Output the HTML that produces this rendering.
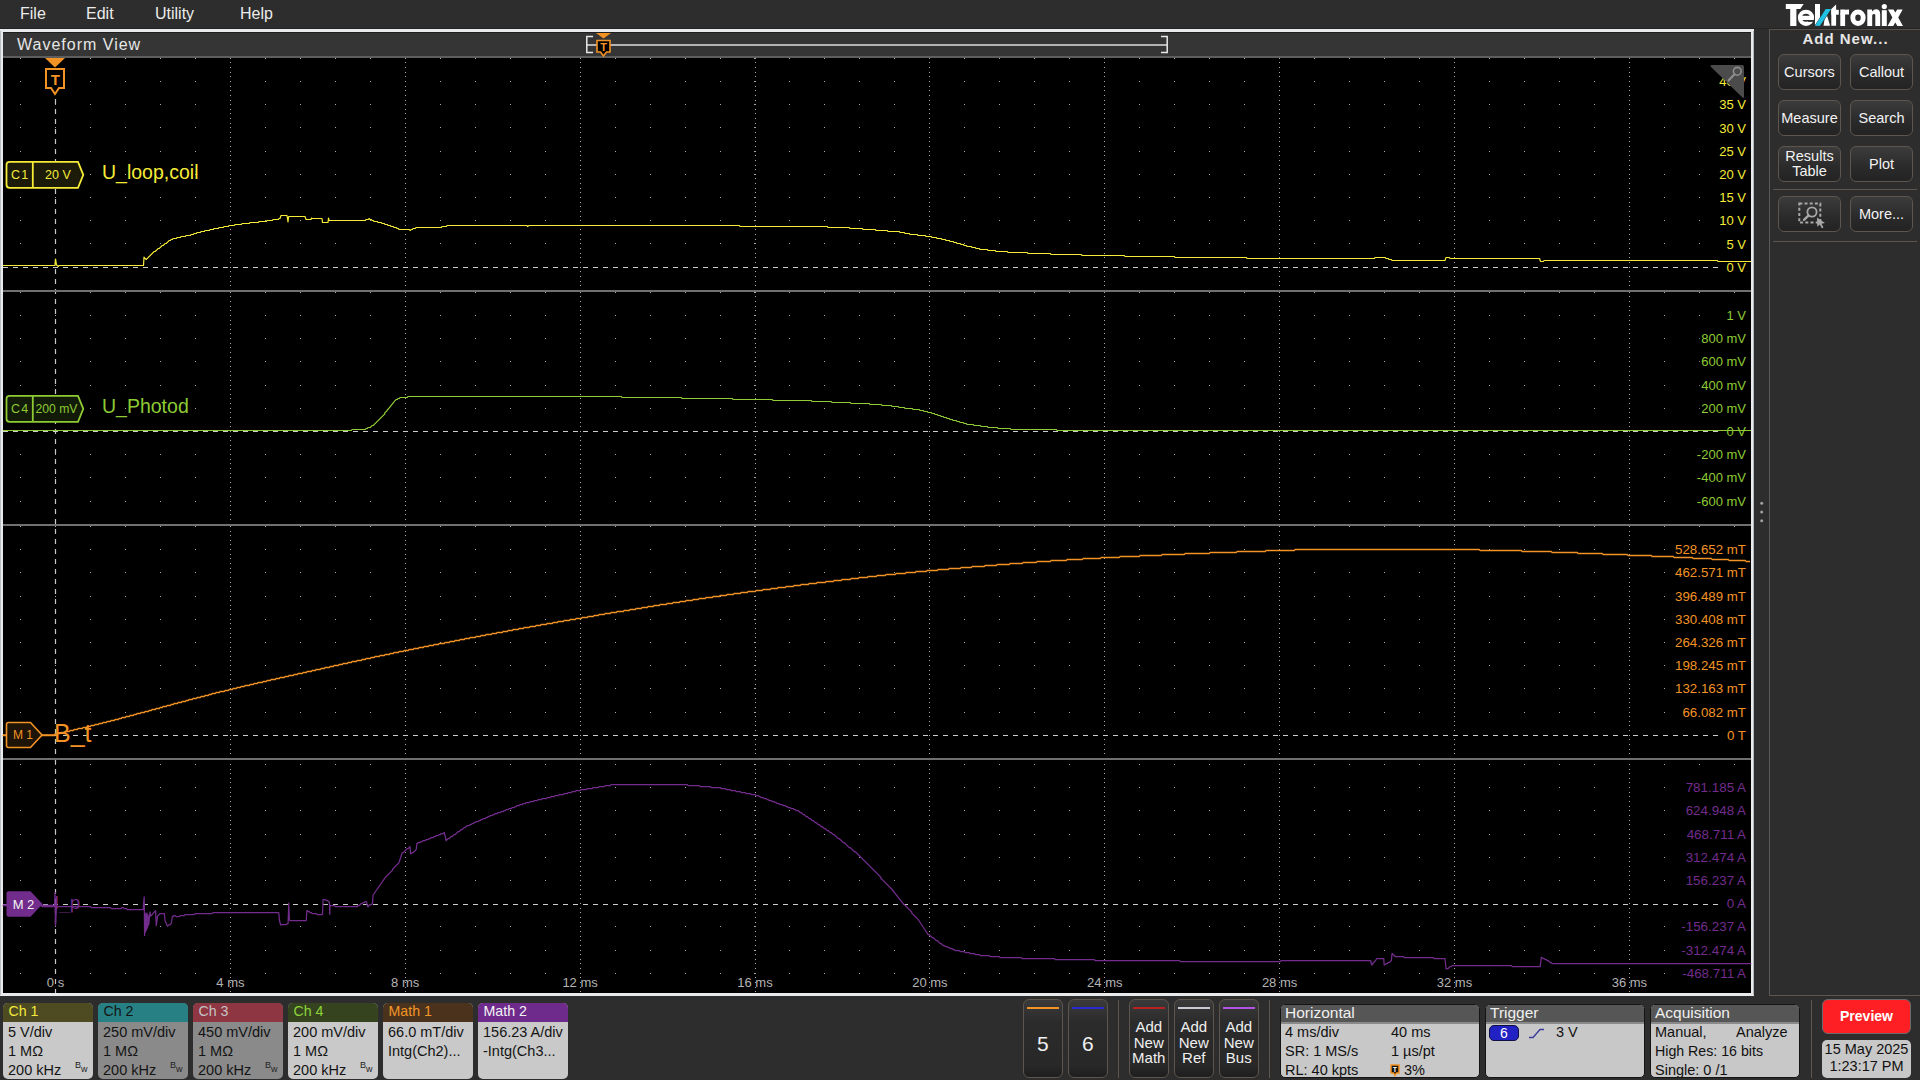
<!DOCTYPE html>
<html><head><meta charset="utf-8"><style>
*{box-sizing:border-box}
html,body{margin:0;padding:0}
body{width:1920px;height:1080px;overflow:hidden;background:#2d2d2d;position:relative;font-family:"Liberation Sans", sans-serif;}
.a{position:absolute}
.menu{position:absolute;font-size:16px;color:#ececec;line-height:16px;top:6px}
.btn{position:absolute;width:63px;height:36px;border:1px solid #5e554c;border-radius:6px;background:linear-gradient(#3c3c3c,#2a2a2a 60%,#232323);color:#f2f2f2;font-size:14.5px;text-align:center;display:flex;align-items:center;justify-content:center;line-height:15px}
.badge{position:absolute;top:1003px;width:90px;height:75.6px;border-radius:5px;overflow:hidden;background:#c9c9c9;font-size:14.5px;color:#141414}
.badge .h{height:19px;padding-left:5.5px;font-size:14.2px;line-height:16.5px}
.badge .l{position:absolute;left:5px;white-space:nowrap}
.bw{position:absolute;left:72px;top:58px;font-size:9px;line-height:9px;color:#222}
.bw span{position:relative;top:4px}
.vbtn{position:absolute;top:999px;width:39.5px;height:79px;border:1px solid #5e554c;border-radius:6px;background:linear-gradient(#3a3a3a,#2b2b2b 30%,#282828 85%,#1e1e1e);color:#f0f0f0;text-align:center}
.vbtn .bar{position:absolute;left:3px;right:3px;top:7px;height:2.2px}
.box{position:absolute;top:1004px;height:74px;border:1px solid #141414;border-radius:5px;overflow:hidden;background:#c8c8c8;color:#111;font-size:14.5px}
.box .h{height:19px;background:#565656;color:#f0f0f0;font-size:15.5px;line-height:15px;padding-left:4px;border-bottom:2px solid #8a8a8a}
.box .l{position:absolute;white-space:nowrap}
</style></head><body>
<div class="menu" style="left:20px">File</div>
<div class="menu" style="left:86px">Edit</div>
<div class="menu" style="left:155px">Utility</div>
<div class="menu" style="left:240px">Help</div>

<!-- waveform frame -->
<div class="a" style="left:0;top:28px;width:1920px;height:1px;background:#232323"></div><div class="a" style="left:0;top:29px;width:1754px;height:967px;background:#e9eaec"></div><div class="a" style="left:0;top:31px;width:1px;height:964px;background:#babdc1"></div><div class="a" style="left:1753px;top:31px;width:1px;height:964px;background:#b4b7bb"></div><div class="a" style="left:3px;top:32px;width:1748px;height:1px;background:#1e1e1e"></div>
<div class="a" style="left:3px;top:33px;width:1748px;height:23px;background:#353535"></div>
<div class="a" style="left:3px;top:56px;width:1748px;height:2px;background:#5e5e5e"></div>
<div class="a" style="left:3px;top:58px;width:1748px;height:935px;background:#000"></div>
<div class="a" style="left:17px;top:36px;font-size:16px;color:#e6e6e6;letter-spacing:1px">Waveform View</div>

<svg class="a" style="left:0;top:0" width="1920" height="1080" viewBox="0 0 1920 1080" font-family="Liberation Sans">
<path fill="#a8a8a8" d="M20 58h1v1h-1zM55 58h1v1h-1zM90 58h1v1h-1zM125 58h1v1h-1zM160 58h1v1h-1zM195 58h1v1h-1zM230 58h1v1h-1zM265 58h1v1h-1zM300 58h1v1h-1zM335 58h1v1h-1zM370 58h1v1h-1zM405 58h1v1h-1zM440 58h1v1h-1zM475 58h1v1h-1zM510 58h1v1h-1zM545 58h1v1h-1zM580 58h1v1h-1zM615 58h1v1h-1zM650 58h1v1h-1zM685 58h1v1h-1zM720 58h1v1h-1zM754 58h1v1h-1zM789 58h1v1h-1zM824 58h1v1h-1zM859 58h1v1h-1zM894 58h1v1h-1zM929 58h1v1h-1zM964 58h1v1h-1zM999 58h1v1h-1zM1034 58h1v1h-1zM1069 58h1v1h-1zM1104 58h1v1h-1zM1139 58h1v1h-1zM1174 58h1v1h-1zM1209 58h1v1h-1zM1244 58h1v1h-1zM1279 58h1v1h-1zM1314 58h1v1h-1zM1349 58h1v1h-1zM1384 58h1v1h-1zM1419 58h1v1h-1zM1454 58h1v1h-1zM1489 58h1v1h-1zM1524 58h1v1h-1zM1559 58h1v1h-1zM1594 58h1v1h-1zM1629 58h1v1h-1zM1664 58h1v1h-1zM1699 58h1v1h-1zM1734 58h1v1h-1zM20 81h1v1h-1zM55 81h1v1h-1zM90 81h1v1h-1zM125 81h1v1h-1zM160 81h1v1h-1zM195 81h1v1h-1zM230 81h1v1h-1zM265 81h1v1h-1zM300 81h1v1h-1zM335 81h1v1h-1zM370 81h1v1h-1zM405 81h1v1h-1zM440 81h1v1h-1zM475 81h1v1h-1zM510 81h1v1h-1zM545 81h1v1h-1zM580 81h1v1h-1zM615 81h1v1h-1zM650 81h1v1h-1zM685 81h1v1h-1zM720 81h1v1h-1zM754 81h1v1h-1zM789 81h1v1h-1zM824 81h1v1h-1zM859 81h1v1h-1zM894 81h1v1h-1zM929 81h1v1h-1zM964 81h1v1h-1zM999 81h1v1h-1zM1034 81h1v1h-1zM1069 81h1v1h-1zM1104 81h1v1h-1zM1139 81h1v1h-1zM1174 81h1v1h-1zM1209 81h1v1h-1zM1244 81h1v1h-1zM1279 81h1v1h-1zM1314 81h1v1h-1zM1349 81h1v1h-1zM1384 81h1v1h-1zM1419 81h1v1h-1zM1454 81h1v1h-1zM1489 81h1v1h-1zM1524 81h1v1h-1zM1559 81h1v1h-1zM1594 81h1v1h-1zM1629 81h1v1h-1zM1664 81h1v1h-1zM1699 81h1v1h-1zM1734 81h1v1h-1zM20 104h1v1h-1zM55 104h1v1h-1zM90 104h1v1h-1zM125 104h1v1h-1zM160 104h1v1h-1zM195 104h1v1h-1zM230 104h1v1h-1zM265 104h1v1h-1zM300 104h1v1h-1zM335 104h1v1h-1zM370 104h1v1h-1zM405 104h1v1h-1zM440 104h1v1h-1zM475 104h1v1h-1zM510 104h1v1h-1zM545 104h1v1h-1zM580 104h1v1h-1zM615 104h1v1h-1zM650 104h1v1h-1zM685 104h1v1h-1zM720 104h1v1h-1zM754 104h1v1h-1zM789 104h1v1h-1zM824 104h1v1h-1zM859 104h1v1h-1zM894 104h1v1h-1zM929 104h1v1h-1zM964 104h1v1h-1zM999 104h1v1h-1zM1034 104h1v1h-1zM1069 104h1v1h-1zM1104 104h1v1h-1zM1139 104h1v1h-1zM1174 104h1v1h-1zM1209 104h1v1h-1zM1244 104h1v1h-1zM1279 104h1v1h-1zM1314 104h1v1h-1zM1349 104h1v1h-1zM1384 104h1v1h-1zM1419 104h1v1h-1zM1454 104h1v1h-1zM1489 104h1v1h-1zM1524 104h1v1h-1zM1559 104h1v1h-1zM1594 104h1v1h-1zM1629 104h1v1h-1zM1664 104h1v1h-1zM1699 104h1v1h-1zM1734 104h1v1h-1zM20 127h1v1h-1zM55 127h1v1h-1zM90 127h1v1h-1zM125 127h1v1h-1zM160 127h1v1h-1zM195 127h1v1h-1zM230 127h1v1h-1zM265 127h1v1h-1zM300 127h1v1h-1zM335 127h1v1h-1zM370 127h1v1h-1zM405 127h1v1h-1zM440 127h1v1h-1zM475 127h1v1h-1zM510 127h1v1h-1zM545 127h1v1h-1zM580 127h1v1h-1zM615 127h1v1h-1zM650 127h1v1h-1zM685 127h1v1h-1zM720 127h1v1h-1zM754 127h1v1h-1zM789 127h1v1h-1zM824 127h1v1h-1zM859 127h1v1h-1zM894 127h1v1h-1zM929 127h1v1h-1zM964 127h1v1h-1zM999 127h1v1h-1zM1034 127h1v1h-1zM1069 127h1v1h-1zM1104 127h1v1h-1zM1139 127h1v1h-1zM1174 127h1v1h-1zM1209 127h1v1h-1zM1244 127h1v1h-1zM1279 127h1v1h-1zM1314 127h1v1h-1zM1349 127h1v1h-1zM1384 127h1v1h-1zM1419 127h1v1h-1zM1454 127h1v1h-1zM1489 127h1v1h-1zM1524 127h1v1h-1zM1559 127h1v1h-1zM1594 127h1v1h-1zM1629 127h1v1h-1zM1664 127h1v1h-1zM1699 127h1v1h-1zM1734 127h1v1h-1zM20 151h1v1h-1zM55 151h1v1h-1zM90 151h1v1h-1zM125 151h1v1h-1zM160 151h1v1h-1zM195 151h1v1h-1zM230 151h1v1h-1zM265 151h1v1h-1zM300 151h1v1h-1zM335 151h1v1h-1zM370 151h1v1h-1zM405 151h1v1h-1zM440 151h1v1h-1zM475 151h1v1h-1zM510 151h1v1h-1zM545 151h1v1h-1zM580 151h1v1h-1zM615 151h1v1h-1zM650 151h1v1h-1zM685 151h1v1h-1zM720 151h1v1h-1zM754 151h1v1h-1zM789 151h1v1h-1zM824 151h1v1h-1zM859 151h1v1h-1zM894 151h1v1h-1zM929 151h1v1h-1zM964 151h1v1h-1zM999 151h1v1h-1zM1034 151h1v1h-1zM1069 151h1v1h-1zM1104 151h1v1h-1zM1139 151h1v1h-1zM1174 151h1v1h-1zM1209 151h1v1h-1zM1244 151h1v1h-1zM1279 151h1v1h-1zM1314 151h1v1h-1zM1349 151h1v1h-1zM1384 151h1v1h-1zM1419 151h1v1h-1zM1454 151h1v1h-1zM1489 151h1v1h-1zM1524 151h1v1h-1zM1559 151h1v1h-1zM1594 151h1v1h-1zM1629 151h1v1h-1zM1664 151h1v1h-1zM1699 151h1v1h-1zM1734 151h1v1h-1zM20 174h1v1h-1zM55 174h1v1h-1zM90 174h1v1h-1zM125 174h1v1h-1zM160 174h1v1h-1zM195 174h1v1h-1zM230 174h1v1h-1zM265 174h1v1h-1zM300 174h1v1h-1zM335 174h1v1h-1zM370 174h1v1h-1zM405 174h1v1h-1zM440 174h1v1h-1zM475 174h1v1h-1zM510 174h1v1h-1zM545 174h1v1h-1zM580 174h1v1h-1zM615 174h1v1h-1zM650 174h1v1h-1zM685 174h1v1h-1zM720 174h1v1h-1zM754 174h1v1h-1zM789 174h1v1h-1zM824 174h1v1h-1zM859 174h1v1h-1zM894 174h1v1h-1zM929 174h1v1h-1zM964 174h1v1h-1zM999 174h1v1h-1zM1034 174h1v1h-1zM1069 174h1v1h-1zM1104 174h1v1h-1zM1139 174h1v1h-1zM1174 174h1v1h-1zM1209 174h1v1h-1zM1244 174h1v1h-1zM1279 174h1v1h-1zM1314 174h1v1h-1zM1349 174h1v1h-1zM1384 174h1v1h-1zM1419 174h1v1h-1zM1454 174h1v1h-1zM1489 174h1v1h-1zM1524 174h1v1h-1zM1559 174h1v1h-1zM1594 174h1v1h-1zM1629 174h1v1h-1zM1664 174h1v1h-1zM1699 174h1v1h-1zM1734 174h1v1h-1zM20 197h1v1h-1zM55 197h1v1h-1zM90 197h1v1h-1zM125 197h1v1h-1zM160 197h1v1h-1zM195 197h1v1h-1zM230 197h1v1h-1zM265 197h1v1h-1zM300 197h1v1h-1zM335 197h1v1h-1zM370 197h1v1h-1zM405 197h1v1h-1zM440 197h1v1h-1zM475 197h1v1h-1zM510 197h1v1h-1zM545 197h1v1h-1zM580 197h1v1h-1zM615 197h1v1h-1zM650 197h1v1h-1zM685 197h1v1h-1zM720 197h1v1h-1zM754 197h1v1h-1zM789 197h1v1h-1zM824 197h1v1h-1zM859 197h1v1h-1zM894 197h1v1h-1zM929 197h1v1h-1zM964 197h1v1h-1zM999 197h1v1h-1zM1034 197h1v1h-1zM1069 197h1v1h-1zM1104 197h1v1h-1zM1139 197h1v1h-1zM1174 197h1v1h-1zM1209 197h1v1h-1zM1244 197h1v1h-1zM1279 197h1v1h-1zM1314 197h1v1h-1zM1349 197h1v1h-1zM1384 197h1v1h-1zM1419 197h1v1h-1zM1454 197h1v1h-1zM1489 197h1v1h-1zM1524 197h1v1h-1zM1559 197h1v1h-1zM1594 197h1v1h-1zM1629 197h1v1h-1zM1664 197h1v1h-1zM1699 197h1v1h-1zM1734 197h1v1h-1zM20 220h1v1h-1zM55 220h1v1h-1zM90 220h1v1h-1zM125 220h1v1h-1zM160 220h1v1h-1zM195 220h1v1h-1zM230 220h1v1h-1zM265 220h1v1h-1zM300 220h1v1h-1zM335 220h1v1h-1zM370 220h1v1h-1zM405 220h1v1h-1zM440 220h1v1h-1zM475 220h1v1h-1zM510 220h1v1h-1zM545 220h1v1h-1zM580 220h1v1h-1zM615 220h1v1h-1zM650 220h1v1h-1zM685 220h1v1h-1zM720 220h1v1h-1zM754 220h1v1h-1zM789 220h1v1h-1zM824 220h1v1h-1zM859 220h1v1h-1zM894 220h1v1h-1zM929 220h1v1h-1zM964 220h1v1h-1zM999 220h1v1h-1zM1034 220h1v1h-1zM1069 220h1v1h-1zM1104 220h1v1h-1zM1139 220h1v1h-1zM1174 220h1v1h-1zM1209 220h1v1h-1zM1244 220h1v1h-1zM1279 220h1v1h-1zM1314 220h1v1h-1zM1349 220h1v1h-1zM1384 220h1v1h-1zM1419 220h1v1h-1zM1454 220h1v1h-1zM1489 220h1v1h-1zM1524 220h1v1h-1zM1559 220h1v1h-1zM1594 220h1v1h-1zM1629 220h1v1h-1zM1664 220h1v1h-1zM1699 220h1v1h-1zM1734 220h1v1h-1zM20 243h1v1h-1zM55 243h1v1h-1zM90 243h1v1h-1zM125 243h1v1h-1zM160 243h1v1h-1zM195 243h1v1h-1zM230 243h1v1h-1zM265 243h1v1h-1zM300 243h1v1h-1zM335 243h1v1h-1zM370 243h1v1h-1zM405 243h1v1h-1zM440 243h1v1h-1zM475 243h1v1h-1zM510 243h1v1h-1zM545 243h1v1h-1zM580 243h1v1h-1zM615 243h1v1h-1zM650 243h1v1h-1zM685 243h1v1h-1zM720 243h1v1h-1zM754 243h1v1h-1zM789 243h1v1h-1zM824 243h1v1h-1zM859 243h1v1h-1zM894 243h1v1h-1zM929 243h1v1h-1zM964 243h1v1h-1zM999 243h1v1h-1zM1034 243h1v1h-1zM1069 243h1v1h-1zM1104 243h1v1h-1zM1139 243h1v1h-1zM1174 243h1v1h-1zM1209 243h1v1h-1zM1244 243h1v1h-1zM1279 243h1v1h-1zM1314 243h1v1h-1zM1349 243h1v1h-1zM1384 243h1v1h-1zM1419 243h1v1h-1zM1454 243h1v1h-1zM1489 243h1v1h-1zM1524 243h1v1h-1zM1559 243h1v1h-1zM1594 243h1v1h-1zM1629 243h1v1h-1zM1664 243h1v1h-1zM1699 243h1v1h-1zM1734 243h1v1h-1zM20 292h1v1h-1zM55 292h1v1h-1zM90 292h1v1h-1zM125 292h1v1h-1zM160 292h1v1h-1zM195 292h1v1h-1zM230 292h1v1h-1zM265 292h1v1h-1zM300 292h1v1h-1zM335 292h1v1h-1zM370 292h1v1h-1zM405 292h1v1h-1zM440 292h1v1h-1zM475 292h1v1h-1zM510 292h1v1h-1zM545 292h1v1h-1zM580 292h1v1h-1zM615 292h1v1h-1zM650 292h1v1h-1zM685 292h1v1h-1zM720 292h1v1h-1zM754 292h1v1h-1zM789 292h1v1h-1zM824 292h1v1h-1zM859 292h1v1h-1zM894 292h1v1h-1zM929 292h1v1h-1zM964 292h1v1h-1zM999 292h1v1h-1zM1034 292h1v1h-1zM1069 292h1v1h-1zM1104 292h1v1h-1zM1139 292h1v1h-1zM1174 292h1v1h-1zM1209 292h1v1h-1zM1244 292h1v1h-1zM1279 292h1v1h-1zM1314 292h1v1h-1zM1349 292h1v1h-1zM1384 292h1v1h-1zM1419 292h1v1h-1zM1454 292h1v1h-1zM1489 292h1v1h-1zM1524 292h1v1h-1zM1559 292h1v1h-1zM1594 292h1v1h-1zM1629 292h1v1h-1zM1664 292h1v1h-1zM1699 292h1v1h-1zM1734 292h1v1h-1zM20 315h1v1h-1zM55 315h1v1h-1zM90 315h1v1h-1zM125 315h1v1h-1zM160 315h1v1h-1zM195 315h1v1h-1zM230 315h1v1h-1zM265 315h1v1h-1zM300 315h1v1h-1zM335 315h1v1h-1zM370 315h1v1h-1zM405 315h1v1h-1zM440 315h1v1h-1zM475 315h1v1h-1zM510 315h1v1h-1zM545 315h1v1h-1zM580 315h1v1h-1zM615 315h1v1h-1zM650 315h1v1h-1zM685 315h1v1h-1zM720 315h1v1h-1zM754 315h1v1h-1zM789 315h1v1h-1zM824 315h1v1h-1zM859 315h1v1h-1zM894 315h1v1h-1zM929 315h1v1h-1zM964 315h1v1h-1zM999 315h1v1h-1zM1034 315h1v1h-1zM1069 315h1v1h-1zM1104 315h1v1h-1zM1139 315h1v1h-1zM1174 315h1v1h-1zM1209 315h1v1h-1zM1244 315h1v1h-1zM1279 315h1v1h-1zM1314 315h1v1h-1zM1349 315h1v1h-1zM1384 315h1v1h-1zM1419 315h1v1h-1zM1454 315h1v1h-1zM1489 315h1v1h-1zM1524 315h1v1h-1zM1559 315h1v1h-1zM1594 315h1v1h-1zM1629 315h1v1h-1zM1664 315h1v1h-1zM1699 315h1v1h-1zM1734 315h1v1h-1zM20 338h1v1h-1zM55 338h1v1h-1zM90 338h1v1h-1zM125 338h1v1h-1zM160 338h1v1h-1zM195 338h1v1h-1zM230 338h1v1h-1zM265 338h1v1h-1zM300 338h1v1h-1zM335 338h1v1h-1zM370 338h1v1h-1zM405 338h1v1h-1zM440 338h1v1h-1zM475 338h1v1h-1zM510 338h1v1h-1zM545 338h1v1h-1zM580 338h1v1h-1zM615 338h1v1h-1zM650 338h1v1h-1zM685 338h1v1h-1zM720 338h1v1h-1zM754 338h1v1h-1zM789 338h1v1h-1zM824 338h1v1h-1zM859 338h1v1h-1zM894 338h1v1h-1zM929 338h1v1h-1zM964 338h1v1h-1zM999 338h1v1h-1zM1034 338h1v1h-1zM1069 338h1v1h-1zM1104 338h1v1h-1zM1139 338h1v1h-1zM1174 338h1v1h-1zM1209 338h1v1h-1zM1244 338h1v1h-1zM1279 338h1v1h-1zM1314 338h1v1h-1zM1349 338h1v1h-1zM1384 338h1v1h-1zM1419 338h1v1h-1zM1454 338h1v1h-1zM1489 338h1v1h-1zM1524 338h1v1h-1zM1559 338h1v1h-1zM1594 338h1v1h-1zM1629 338h1v1h-1zM1664 338h1v1h-1zM1699 338h1v1h-1zM1734 338h1v1h-1zM20 361h1v1h-1zM55 361h1v1h-1zM90 361h1v1h-1zM125 361h1v1h-1zM160 361h1v1h-1zM195 361h1v1h-1zM230 361h1v1h-1zM265 361h1v1h-1zM300 361h1v1h-1zM335 361h1v1h-1zM370 361h1v1h-1zM405 361h1v1h-1zM440 361h1v1h-1zM475 361h1v1h-1zM510 361h1v1h-1zM545 361h1v1h-1zM580 361h1v1h-1zM615 361h1v1h-1zM650 361h1v1h-1zM685 361h1v1h-1zM720 361h1v1h-1zM754 361h1v1h-1zM789 361h1v1h-1zM824 361h1v1h-1zM859 361h1v1h-1zM894 361h1v1h-1zM929 361h1v1h-1zM964 361h1v1h-1zM999 361h1v1h-1zM1034 361h1v1h-1zM1069 361h1v1h-1zM1104 361h1v1h-1zM1139 361h1v1h-1zM1174 361h1v1h-1zM1209 361h1v1h-1zM1244 361h1v1h-1zM1279 361h1v1h-1zM1314 361h1v1h-1zM1349 361h1v1h-1zM1384 361h1v1h-1zM1419 361h1v1h-1zM1454 361h1v1h-1zM1489 361h1v1h-1zM1524 361h1v1h-1zM1559 361h1v1h-1zM1594 361h1v1h-1zM1629 361h1v1h-1zM1664 361h1v1h-1zM1699 361h1v1h-1zM1734 361h1v1h-1zM20 385h1v1h-1zM55 385h1v1h-1zM90 385h1v1h-1zM125 385h1v1h-1zM160 385h1v1h-1zM195 385h1v1h-1zM230 385h1v1h-1zM265 385h1v1h-1zM300 385h1v1h-1zM335 385h1v1h-1zM370 385h1v1h-1zM405 385h1v1h-1zM440 385h1v1h-1zM475 385h1v1h-1zM510 385h1v1h-1zM545 385h1v1h-1zM580 385h1v1h-1zM615 385h1v1h-1zM650 385h1v1h-1zM685 385h1v1h-1zM720 385h1v1h-1zM754 385h1v1h-1zM789 385h1v1h-1zM824 385h1v1h-1zM859 385h1v1h-1zM894 385h1v1h-1zM929 385h1v1h-1zM964 385h1v1h-1zM999 385h1v1h-1zM1034 385h1v1h-1zM1069 385h1v1h-1zM1104 385h1v1h-1zM1139 385h1v1h-1zM1174 385h1v1h-1zM1209 385h1v1h-1zM1244 385h1v1h-1zM1279 385h1v1h-1zM1314 385h1v1h-1zM1349 385h1v1h-1zM1384 385h1v1h-1zM1419 385h1v1h-1zM1454 385h1v1h-1zM1489 385h1v1h-1zM1524 385h1v1h-1zM1559 385h1v1h-1zM1594 385h1v1h-1zM1629 385h1v1h-1zM1664 385h1v1h-1zM1699 385h1v1h-1zM1734 385h1v1h-1zM20 408h1v1h-1zM55 408h1v1h-1zM90 408h1v1h-1zM125 408h1v1h-1zM160 408h1v1h-1zM195 408h1v1h-1zM230 408h1v1h-1zM265 408h1v1h-1zM300 408h1v1h-1zM335 408h1v1h-1zM370 408h1v1h-1zM405 408h1v1h-1zM440 408h1v1h-1zM475 408h1v1h-1zM510 408h1v1h-1zM545 408h1v1h-1zM580 408h1v1h-1zM615 408h1v1h-1zM650 408h1v1h-1zM685 408h1v1h-1zM720 408h1v1h-1zM754 408h1v1h-1zM789 408h1v1h-1zM824 408h1v1h-1zM859 408h1v1h-1zM894 408h1v1h-1zM929 408h1v1h-1zM964 408h1v1h-1zM999 408h1v1h-1zM1034 408h1v1h-1zM1069 408h1v1h-1zM1104 408h1v1h-1zM1139 408h1v1h-1zM1174 408h1v1h-1zM1209 408h1v1h-1zM1244 408h1v1h-1zM1279 408h1v1h-1zM1314 408h1v1h-1zM1349 408h1v1h-1zM1384 408h1v1h-1zM1419 408h1v1h-1zM1454 408h1v1h-1zM1489 408h1v1h-1zM1524 408h1v1h-1zM1559 408h1v1h-1zM1594 408h1v1h-1zM1629 408h1v1h-1zM1664 408h1v1h-1zM1699 408h1v1h-1zM1734 408h1v1h-1zM20 454h1v1h-1zM55 454h1v1h-1zM90 454h1v1h-1zM125 454h1v1h-1zM160 454h1v1h-1zM195 454h1v1h-1zM230 454h1v1h-1zM265 454h1v1h-1zM300 454h1v1h-1zM335 454h1v1h-1zM370 454h1v1h-1zM405 454h1v1h-1zM440 454h1v1h-1zM475 454h1v1h-1zM510 454h1v1h-1zM545 454h1v1h-1zM580 454h1v1h-1zM615 454h1v1h-1zM650 454h1v1h-1zM685 454h1v1h-1zM720 454h1v1h-1zM754 454h1v1h-1zM789 454h1v1h-1zM824 454h1v1h-1zM859 454h1v1h-1zM894 454h1v1h-1zM929 454h1v1h-1zM964 454h1v1h-1zM999 454h1v1h-1zM1034 454h1v1h-1zM1069 454h1v1h-1zM1104 454h1v1h-1zM1139 454h1v1h-1zM1174 454h1v1h-1zM1209 454h1v1h-1zM1244 454h1v1h-1zM1279 454h1v1h-1zM1314 454h1v1h-1zM1349 454h1v1h-1zM1384 454h1v1h-1zM1419 454h1v1h-1zM1454 454h1v1h-1zM1489 454h1v1h-1zM1524 454h1v1h-1zM1559 454h1v1h-1zM1594 454h1v1h-1zM1629 454h1v1h-1zM1664 454h1v1h-1zM1699 454h1v1h-1zM1734 454h1v1h-1zM20 477h1v1h-1zM55 477h1v1h-1zM90 477h1v1h-1zM125 477h1v1h-1zM160 477h1v1h-1zM195 477h1v1h-1zM230 477h1v1h-1zM265 477h1v1h-1zM300 477h1v1h-1zM335 477h1v1h-1zM370 477h1v1h-1zM405 477h1v1h-1zM440 477h1v1h-1zM475 477h1v1h-1zM510 477h1v1h-1zM545 477h1v1h-1zM580 477h1v1h-1zM615 477h1v1h-1zM650 477h1v1h-1zM685 477h1v1h-1zM720 477h1v1h-1zM754 477h1v1h-1zM789 477h1v1h-1zM824 477h1v1h-1zM859 477h1v1h-1zM894 477h1v1h-1zM929 477h1v1h-1zM964 477h1v1h-1zM999 477h1v1h-1zM1034 477h1v1h-1zM1069 477h1v1h-1zM1104 477h1v1h-1zM1139 477h1v1h-1zM1174 477h1v1h-1zM1209 477h1v1h-1zM1244 477h1v1h-1zM1279 477h1v1h-1zM1314 477h1v1h-1zM1349 477h1v1h-1zM1384 477h1v1h-1zM1419 477h1v1h-1zM1454 477h1v1h-1zM1489 477h1v1h-1zM1524 477h1v1h-1zM1559 477h1v1h-1zM1594 477h1v1h-1zM1629 477h1v1h-1zM1664 477h1v1h-1zM1699 477h1v1h-1zM1734 477h1v1h-1zM20 501h1v1h-1zM55 501h1v1h-1zM90 501h1v1h-1zM125 501h1v1h-1zM160 501h1v1h-1zM195 501h1v1h-1zM230 501h1v1h-1zM265 501h1v1h-1zM300 501h1v1h-1zM335 501h1v1h-1zM370 501h1v1h-1zM405 501h1v1h-1zM440 501h1v1h-1zM475 501h1v1h-1zM510 501h1v1h-1zM545 501h1v1h-1zM580 501h1v1h-1zM615 501h1v1h-1zM650 501h1v1h-1zM685 501h1v1h-1zM720 501h1v1h-1zM754 501h1v1h-1zM789 501h1v1h-1zM824 501h1v1h-1zM859 501h1v1h-1zM894 501h1v1h-1zM929 501h1v1h-1zM964 501h1v1h-1zM999 501h1v1h-1zM1034 501h1v1h-1zM1069 501h1v1h-1zM1104 501h1v1h-1zM1139 501h1v1h-1zM1174 501h1v1h-1zM1209 501h1v1h-1zM1244 501h1v1h-1zM1279 501h1v1h-1zM1314 501h1v1h-1zM1349 501h1v1h-1zM1384 501h1v1h-1zM1419 501h1v1h-1zM1454 501h1v1h-1zM1489 501h1v1h-1zM1524 501h1v1h-1zM1559 501h1v1h-1zM1594 501h1v1h-1zM1629 501h1v1h-1zM1664 501h1v1h-1zM1699 501h1v1h-1zM1734 501h1v1h-1zM20 526h1v1h-1zM55 526h1v1h-1zM90 526h1v1h-1zM125 526h1v1h-1zM160 526h1v1h-1zM195 526h1v1h-1zM230 526h1v1h-1zM265 526h1v1h-1zM300 526h1v1h-1zM335 526h1v1h-1zM370 526h1v1h-1zM405 526h1v1h-1zM440 526h1v1h-1zM475 526h1v1h-1zM510 526h1v1h-1zM545 526h1v1h-1zM580 526h1v1h-1zM615 526h1v1h-1zM650 526h1v1h-1zM685 526h1v1h-1zM720 526h1v1h-1zM754 526h1v1h-1zM789 526h1v1h-1zM824 526h1v1h-1zM859 526h1v1h-1zM894 526h1v1h-1zM929 526h1v1h-1zM964 526h1v1h-1zM999 526h1v1h-1zM1034 526h1v1h-1zM1069 526h1v1h-1zM1104 526h1v1h-1zM1139 526h1v1h-1zM1174 526h1v1h-1zM1209 526h1v1h-1zM1244 526h1v1h-1zM1279 526h1v1h-1zM1314 526h1v1h-1zM1349 526h1v1h-1zM1384 526h1v1h-1zM1419 526h1v1h-1zM1454 526h1v1h-1zM1489 526h1v1h-1zM1524 526h1v1h-1zM1559 526h1v1h-1zM1594 526h1v1h-1zM1629 526h1v1h-1zM1664 526h1v1h-1zM1699 526h1v1h-1zM1734 526h1v1h-1zM20 549h1v1h-1zM55 549h1v1h-1zM90 549h1v1h-1zM125 549h1v1h-1zM160 549h1v1h-1zM195 549h1v1h-1zM230 549h1v1h-1zM265 549h1v1h-1zM300 549h1v1h-1zM335 549h1v1h-1zM370 549h1v1h-1zM405 549h1v1h-1zM440 549h1v1h-1zM475 549h1v1h-1zM510 549h1v1h-1zM545 549h1v1h-1zM580 549h1v1h-1zM615 549h1v1h-1zM650 549h1v1h-1zM685 549h1v1h-1zM720 549h1v1h-1zM754 549h1v1h-1zM789 549h1v1h-1zM824 549h1v1h-1zM859 549h1v1h-1zM894 549h1v1h-1zM929 549h1v1h-1zM964 549h1v1h-1zM999 549h1v1h-1zM1034 549h1v1h-1zM1069 549h1v1h-1zM1104 549h1v1h-1zM1139 549h1v1h-1zM1174 549h1v1h-1zM1209 549h1v1h-1zM1244 549h1v1h-1zM1279 549h1v1h-1zM1314 549h1v1h-1zM1349 549h1v1h-1zM1384 549h1v1h-1zM1419 549h1v1h-1zM1454 549h1v1h-1zM1489 549h1v1h-1zM1524 549h1v1h-1zM1559 549h1v1h-1zM1594 549h1v1h-1zM1629 549h1v1h-1zM1664 549h1v1h-1zM1699 549h1v1h-1zM1734 549h1v1h-1zM20 572h1v1h-1zM55 572h1v1h-1zM90 572h1v1h-1zM125 572h1v1h-1zM160 572h1v1h-1zM195 572h1v1h-1zM230 572h1v1h-1zM265 572h1v1h-1zM300 572h1v1h-1zM335 572h1v1h-1zM370 572h1v1h-1zM405 572h1v1h-1zM440 572h1v1h-1zM475 572h1v1h-1zM510 572h1v1h-1zM545 572h1v1h-1zM580 572h1v1h-1zM615 572h1v1h-1zM650 572h1v1h-1zM685 572h1v1h-1zM720 572h1v1h-1zM754 572h1v1h-1zM789 572h1v1h-1zM824 572h1v1h-1zM859 572h1v1h-1zM894 572h1v1h-1zM929 572h1v1h-1zM964 572h1v1h-1zM999 572h1v1h-1zM1034 572h1v1h-1zM1069 572h1v1h-1zM1104 572h1v1h-1zM1139 572h1v1h-1zM1174 572h1v1h-1zM1209 572h1v1h-1zM1244 572h1v1h-1zM1279 572h1v1h-1zM1314 572h1v1h-1zM1349 572h1v1h-1zM1384 572h1v1h-1zM1419 572h1v1h-1zM1454 572h1v1h-1zM1489 572h1v1h-1zM1524 572h1v1h-1zM1559 572h1v1h-1zM1594 572h1v1h-1zM1629 572h1v1h-1zM1664 572h1v1h-1zM1699 572h1v1h-1zM1734 572h1v1h-1zM20 596h1v1h-1zM55 596h1v1h-1zM90 596h1v1h-1zM125 596h1v1h-1zM160 596h1v1h-1zM195 596h1v1h-1zM230 596h1v1h-1zM265 596h1v1h-1zM300 596h1v1h-1zM335 596h1v1h-1zM370 596h1v1h-1zM405 596h1v1h-1zM440 596h1v1h-1zM475 596h1v1h-1zM510 596h1v1h-1zM545 596h1v1h-1zM580 596h1v1h-1zM615 596h1v1h-1zM650 596h1v1h-1zM685 596h1v1h-1zM720 596h1v1h-1zM754 596h1v1h-1zM789 596h1v1h-1zM824 596h1v1h-1zM859 596h1v1h-1zM894 596h1v1h-1zM929 596h1v1h-1zM964 596h1v1h-1zM999 596h1v1h-1zM1034 596h1v1h-1zM1069 596h1v1h-1zM1104 596h1v1h-1zM1139 596h1v1h-1zM1174 596h1v1h-1zM1209 596h1v1h-1zM1244 596h1v1h-1zM1279 596h1v1h-1zM1314 596h1v1h-1zM1349 596h1v1h-1zM1384 596h1v1h-1zM1419 596h1v1h-1zM1454 596h1v1h-1zM1489 596h1v1h-1zM1524 596h1v1h-1zM1559 596h1v1h-1zM1594 596h1v1h-1zM1629 596h1v1h-1zM1664 596h1v1h-1zM1699 596h1v1h-1zM1734 596h1v1h-1zM20 619h1v1h-1zM55 619h1v1h-1zM90 619h1v1h-1zM125 619h1v1h-1zM160 619h1v1h-1zM195 619h1v1h-1zM230 619h1v1h-1zM265 619h1v1h-1zM300 619h1v1h-1zM335 619h1v1h-1zM370 619h1v1h-1zM405 619h1v1h-1zM440 619h1v1h-1zM475 619h1v1h-1zM510 619h1v1h-1zM545 619h1v1h-1zM580 619h1v1h-1zM615 619h1v1h-1zM650 619h1v1h-1zM685 619h1v1h-1zM720 619h1v1h-1zM754 619h1v1h-1zM789 619h1v1h-1zM824 619h1v1h-1zM859 619h1v1h-1zM894 619h1v1h-1zM929 619h1v1h-1zM964 619h1v1h-1zM999 619h1v1h-1zM1034 619h1v1h-1zM1069 619h1v1h-1zM1104 619h1v1h-1zM1139 619h1v1h-1zM1174 619h1v1h-1zM1209 619h1v1h-1zM1244 619h1v1h-1zM1279 619h1v1h-1zM1314 619h1v1h-1zM1349 619h1v1h-1zM1384 619h1v1h-1zM1419 619h1v1h-1zM1454 619h1v1h-1zM1489 619h1v1h-1zM1524 619h1v1h-1zM1559 619h1v1h-1zM1594 619h1v1h-1zM1629 619h1v1h-1zM1664 619h1v1h-1zM1699 619h1v1h-1zM1734 619h1v1h-1zM20 642h1v1h-1zM55 642h1v1h-1zM90 642h1v1h-1zM125 642h1v1h-1zM160 642h1v1h-1zM195 642h1v1h-1zM230 642h1v1h-1zM265 642h1v1h-1zM300 642h1v1h-1zM335 642h1v1h-1zM370 642h1v1h-1zM405 642h1v1h-1zM440 642h1v1h-1zM475 642h1v1h-1zM510 642h1v1h-1zM545 642h1v1h-1zM580 642h1v1h-1zM615 642h1v1h-1zM650 642h1v1h-1zM685 642h1v1h-1zM720 642h1v1h-1zM754 642h1v1h-1zM789 642h1v1h-1zM824 642h1v1h-1zM859 642h1v1h-1zM894 642h1v1h-1zM929 642h1v1h-1zM964 642h1v1h-1zM999 642h1v1h-1zM1034 642h1v1h-1zM1069 642h1v1h-1zM1104 642h1v1h-1zM1139 642h1v1h-1zM1174 642h1v1h-1zM1209 642h1v1h-1zM1244 642h1v1h-1zM1279 642h1v1h-1zM1314 642h1v1h-1zM1349 642h1v1h-1zM1384 642h1v1h-1zM1419 642h1v1h-1zM1454 642h1v1h-1zM1489 642h1v1h-1zM1524 642h1v1h-1zM1559 642h1v1h-1zM1594 642h1v1h-1zM1629 642h1v1h-1zM1664 642h1v1h-1zM1699 642h1v1h-1zM1734 642h1v1h-1zM20 665h1v1h-1zM55 665h1v1h-1zM90 665h1v1h-1zM125 665h1v1h-1zM160 665h1v1h-1zM195 665h1v1h-1zM230 665h1v1h-1zM265 665h1v1h-1zM300 665h1v1h-1zM335 665h1v1h-1zM370 665h1v1h-1zM405 665h1v1h-1zM440 665h1v1h-1zM475 665h1v1h-1zM510 665h1v1h-1zM545 665h1v1h-1zM580 665h1v1h-1zM615 665h1v1h-1zM650 665h1v1h-1zM685 665h1v1h-1zM720 665h1v1h-1zM754 665h1v1h-1zM789 665h1v1h-1zM824 665h1v1h-1zM859 665h1v1h-1zM894 665h1v1h-1zM929 665h1v1h-1zM964 665h1v1h-1zM999 665h1v1h-1zM1034 665h1v1h-1zM1069 665h1v1h-1zM1104 665h1v1h-1zM1139 665h1v1h-1zM1174 665h1v1h-1zM1209 665h1v1h-1zM1244 665h1v1h-1zM1279 665h1v1h-1zM1314 665h1v1h-1zM1349 665h1v1h-1zM1384 665h1v1h-1zM1419 665h1v1h-1zM1454 665h1v1h-1zM1489 665h1v1h-1zM1524 665h1v1h-1zM1559 665h1v1h-1zM1594 665h1v1h-1zM1629 665h1v1h-1zM1664 665h1v1h-1zM1699 665h1v1h-1zM1734 665h1v1h-1zM20 688h1v1h-1zM55 688h1v1h-1zM90 688h1v1h-1zM125 688h1v1h-1zM160 688h1v1h-1zM195 688h1v1h-1zM230 688h1v1h-1zM265 688h1v1h-1zM300 688h1v1h-1zM335 688h1v1h-1zM370 688h1v1h-1zM405 688h1v1h-1zM440 688h1v1h-1zM475 688h1v1h-1zM510 688h1v1h-1zM545 688h1v1h-1zM580 688h1v1h-1zM615 688h1v1h-1zM650 688h1v1h-1zM685 688h1v1h-1zM720 688h1v1h-1zM754 688h1v1h-1zM789 688h1v1h-1zM824 688h1v1h-1zM859 688h1v1h-1zM894 688h1v1h-1zM929 688h1v1h-1zM964 688h1v1h-1zM999 688h1v1h-1zM1034 688h1v1h-1zM1069 688h1v1h-1zM1104 688h1v1h-1zM1139 688h1v1h-1zM1174 688h1v1h-1zM1209 688h1v1h-1zM1244 688h1v1h-1zM1279 688h1v1h-1zM1314 688h1v1h-1zM1349 688h1v1h-1zM1384 688h1v1h-1zM1419 688h1v1h-1zM1454 688h1v1h-1zM1489 688h1v1h-1zM1524 688h1v1h-1zM1559 688h1v1h-1zM1594 688h1v1h-1zM1629 688h1v1h-1zM1664 688h1v1h-1zM1699 688h1v1h-1zM1734 688h1v1h-1zM20 712h1v1h-1zM55 712h1v1h-1zM90 712h1v1h-1zM125 712h1v1h-1zM160 712h1v1h-1zM195 712h1v1h-1zM230 712h1v1h-1zM265 712h1v1h-1zM300 712h1v1h-1zM335 712h1v1h-1zM370 712h1v1h-1zM405 712h1v1h-1zM440 712h1v1h-1zM475 712h1v1h-1zM510 712h1v1h-1zM545 712h1v1h-1zM580 712h1v1h-1zM615 712h1v1h-1zM650 712h1v1h-1zM685 712h1v1h-1zM720 712h1v1h-1zM754 712h1v1h-1zM789 712h1v1h-1zM824 712h1v1h-1zM859 712h1v1h-1zM894 712h1v1h-1zM929 712h1v1h-1zM964 712h1v1h-1zM999 712h1v1h-1zM1034 712h1v1h-1zM1069 712h1v1h-1zM1104 712h1v1h-1zM1139 712h1v1h-1zM1174 712h1v1h-1zM1209 712h1v1h-1zM1244 712h1v1h-1zM1279 712h1v1h-1zM1314 712h1v1h-1zM1349 712h1v1h-1zM1384 712h1v1h-1zM1419 712h1v1h-1zM1454 712h1v1h-1zM1489 712h1v1h-1zM1524 712h1v1h-1zM1559 712h1v1h-1zM1594 712h1v1h-1zM1629 712h1v1h-1zM1664 712h1v1h-1zM1699 712h1v1h-1zM1734 712h1v1h-1zM20 764h1v1h-1zM55 764h1v1h-1zM90 764h1v1h-1zM125 764h1v1h-1zM160 764h1v1h-1zM195 764h1v1h-1zM230 764h1v1h-1zM265 764h1v1h-1zM300 764h1v1h-1zM335 764h1v1h-1zM370 764h1v1h-1zM405 764h1v1h-1zM440 764h1v1h-1zM475 764h1v1h-1zM510 764h1v1h-1zM545 764h1v1h-1zM580 764h1v1h-1zM615 764h1v1h-1zM650 764h1v1h-1zM685 764h1v1h-1zM720 764h1v1h-1zM754 764h1v1h-1zM789 764h1v1h-1zM824 764h1v1h-1zM859 764h1v1h-1zM894 764h1v1h-1zM929 764h1v1h-1zM964 764h1v1h-1zM999 764h1v1h-1zM1034 764h1v1h-1zM1069 764h1v1h-1zM1104 764h1v1h-1zM1139 764h1v1h-1zM1174 764h1v1h-1zM1209 764h1v1h-1zM1244 764h1v1h-1zM1279 764h1v1h-1zM1314 764h1v1h-1zM1349 764h1v1h-1zM1384 764h1v1h-1zM1419 764h1v1h-1zM1454 764h1v1h-1zM1489 764h1v1h-1zM1524 764h1v1h-1zM1559 764h1v1h-1zM1594 764h1v1h-1zM1629 764h1v1h-1zM1664 764h1v1h-1zM1699 764h1v1h-1zM1734 764h1v1h-1zM20 787h1v1h-1zM55 787h1v1h-1zM90 787h1v1h-1zM125 787h1v1h-1zM160 787h1v1h-1zM195 787h1v1h-1zM230 787h1v1h-1zM265 787h1v1h-1zM300 787h1v1h-1zM335 787h1v1h-1zM370 787h1v1h-1zM405 787h1v1h-1zM440 787h1v1h-1zM475 787h1v1h-1zM510 787h1v1h-1zM545 787h1v1h-1zM580 787h1v1h-1zM615 787h1v1h-1zM650 787h1v1h-1zM685 787h1v1h-1zM720 787h1v1h-1zM754 787h1v1h-1zM789 787h1v1h-1zM824 787h1v1h-1zM859 787h1v1h-1zM894 787h1v1h-1zM929 787h1v1h-1zM964 787h1v1h-1zM999 787h1v1h-1zM1034 787h1v1h-1zM1069 787h1v1h-1zM1104 787h1v1h-1zM1139 787h1v1h-1zM1174 787h1v1h-1zM1209 787h1v1h-1zM1244 787h1v1h-1zM1279 787h1v1h-1zM1314 787h1v1h-1zM1349 787h1v1h-1zM1384 787h1v1h-1zM1419 787h1v1h-1zM1454 787h1v1h-1zM1489 787h1v1h-1zM1524 787h1v1h-1zM1559 787h1v1h-1zM1594 787h1v1h-1zM1629 787h1v1h-1zM1664 787h1v1h-1zM1699 787h1v1h-1zM1734 787h1v1h-1zM20 810h1v1h-1zM55 810h1v1h-1zM90 810h1v1h-1zM125 810h1v1h-1zM160 810h1v1h-1zM195 810h1v1h-1zM230 810h1v1h-1zM265 810h1v1h-1zM300 810h1v1h-1zM335 810h1v1h-1zM370 810h1v1h-1zM405 810h1v1h-1zM440 810h1v1h-1zM475 810h1v1h-1zM510 810h1v1h-1zM545 810h1v1h-1zM580 810h1v1h-1zM615 810h1v1h-1zM650 810h1v1h-1zM685 810h1v1h-1zM720 810h1v1h-1zM754 810h1v1h-1zM789 810h1v1h-1zM824 810h1v1h-1zM859 810h1v1h-1zM894 810h1v1h-1zM929 810h1v1h-1zM964 810h1v1h-1zM999 810h1v1h-1zM1034 810h1v1h-1zM1069 810h1v1h-1zM1104 810h1v1h-1zM1139 810h1v1h-1zM1174 810h1v1h-1zM1209 810h1v1h-1zM1244 810h1v1h-1zM1279 810h1v1h-1zM1314 810h1v1h-1zM1349 810h1v1h-1zM1384 810h1v1h-1zM1419 810h1v1h-1zM1454 810h1v1h-1zM1489 810h1v1h-1zM1524 810h1v1h-1zM1559 810h1v1h-1zM1594 810h1v1h-1zM1629 810h1v1h-1zM1664 810h1v1h-1zM1699 810h1v1h-1zM1734 810h1v1h-1zM20 834h1v1h-1zM55 834h1v1h-1zM90 834h1v1h-1zM125 834h1v1h-1zM160 834h1v1h-1zM195 834h1v1h-1zM230 834h1v1h-1zM265 834h1v1h-1zM300 834h1v1h-1zM335 834h1v1h-1zM370 834h1v1h-1zM405 834h1v1h-1zM440 834h1v1h-1zM475 834h1v1h-1zM510 834h1v1h-1zM545 834h1v1h-1zM580 834h1v1h-1zM615 834h1v1h-1zM650 834h1v1h-1zM685 834h1v1h-1zM720 834h1v1h-1zM754 834h1v1h-1zM789 834h1v1h-1zM824 834h1v1h-1zM859 834h1v1h-1zM894 834h1v1h-1zM929 834h1v1h-1zM964 834h1v1h-1zM999 834h1v1h-1zM1034 834h1v1h-1zM1069 834h1v1h-1zM1104 834h1v1h-1zM1139 834h1v1h-1zM1174 834h1v1h-1zM1209 834h1v1h-1zM1244 834h1v1h-1zM1279 834h1v1h-1zM1314 834h1v1h-1zM1349 834h1v1h-1zM1384 834h1v1h-1zM1419 834h1v1h-1zM1454 834h1v1h-1zM1489 834h1v1h-1zM1524 834h1v1h-1zM1559 834h1v1h-1zM1594 834h1v1h-1zM1629 834h1v1h-1zM1664 834h1v1h-1zM1699 834h1v1h-1zM1734 834h1v1h-1zM20 857h1v1h-1zM55 857h1v1h-1zM90 857h1v1h-1zM125 857h1v1h-1zM160 857h1v1h-1zM195 857h1v1h-1zM230 857h1v1h-1zM265 857h1v1h-1zM300 857h1v1h-1zM335 857h1v1h-1zM370 857h1v1h-1zM405 857h1v1h-1zM440 857h1v1h-1zM475 857h1v1h-1zM510 857h1v1h-1zM545 857h1v1h-1zM580 857h1v1h-1zM615 857h1v1h-1zM650 857h1v1h-1zM685 857h1v1h-1zM720 857h1v1h-1zM754 857h1v1h-1zM789 857h1v1h-1zM824 857h1v1h-1zM859 857h1v1h-1zM894 857h1v1h-1zM929 857h1v1h-1zM964 857h1v1h-1zM999 857h1v1h-1zM1034 857h1v1h-1zM1069 857h1v1h-1zM1104 857h1v1h-1zM1139 857h1v1h-1zM1174 857h1v1h-1zM1209 857h1v1h-1zM1244 857h1v1h-1zM1279 857h1v1h-1zM1314 857h1v1h-1zM1349 857h1v1h-1zM1384 857h1v1h-1zM1419 857h1v1h-1zM1454 857h1v1h-1zM1489 857h1v1h-1zM1524 857h1v1h-1zM1559 857h1v1h-1zM1594 857h1v1h-1zM1629 857h1v1h-1zM1664 857h1v1h-1zM1699 857h1v1h-1zM1734 857h1v1h-1zM20 880h1v1h-1zM55 880h1v1h-1zM90 880h1v1h-1zM125 880h1v1h-1zM160 880h1v1h-1zM195 880h1v1h-1zM230 880h1v1h-1zM265 880h1v1h-1zM300 880h1v1h-1zM335 880h1v1h-1zM370 880h1v1h-1zM405 880h1v1h-1zM440 880h1v1h-1zM475 880h1v1h-1zM510 880h1v1h-1zM545 880h1v1h-1zM580 880h1v1h-1zM615 880h1v1h-1zM650 880h1v1h-1zM685 880h1v1h-1zM720 880h1v1h-1zM754 880h1v1h-1zM789 880h1v1h-1zM824 880h1v1h-1zM859 880h1v1h-1zM894 880h1v1h-1zM929 880h1v1h-1zM964 880h1v1h-1zM999 880h1v1h-1zM1034 880h1v1h-1zM1069 880h1v1h-1zM1104 880h1v1h-1zM1139 880h1v1h-1zM1174 880h1v1h-1zM1209 880h1v1h-1zM1244 880h1v1h-1zM1279 880h1v1h-1zM1314 880h1v1h-1zM1349 880h1v1h-1zM1384 880h1v1h-1zM1419 880h1v1h-1zM1454 880h1v1h-1zM1489 880h1v1h-1zM1524 880h1v1h-1zM1559 880h1v1h-1zM1594 880h1v1h-1zM1629 880h1v1h-1zM1664 880h1v1h-1zM1699 880h1v1h-1zM1734 880h1v1h-1zM20 926h1v1h-1zM55 926h1v1h-1zM90 926h1v1h-1zM125 926h1v1h-1zM160 926h1v1h-1zM195 926h1v1h-1zM230 926h1v1h-1zM265 926h1v1h-1zM300 926h1v1h-1zM335 926h1v1h-1zM370 926h1v1h-1zM405 926h1v1h-1zM440 926h1v1h-1zM475 926h1v1h-1zM510 926h1v1h-1zM545 926h1v1h-1zM580 926h1v1h-1zM615 926h1v1h-1zM650 926h1v1h-1zM685 926h1v1h-1zM720 926h1v1h-1zM754 926h1v1h-1zM789 926h1v1h-1zM824 926h1v1h-1zM859 926h1v1h-1zM894 926h1v1h-1zM929 926h1v1h-1zM964 926h1v1h-1zM999 926h1v1h-1zM1034 926h1v1h-1zM1069 926h1v1h-1zM1104 926h1v1h-1zM1139 926h1v1h-1zM1174 926h1v1h-1zM1209 926h1v1h-1zM1244 926h1v1h-1zM1279 926h1v1h-1zM1314 926h1v1h-1zM1349 926h1v1h-1zM1384 926h1v1h-1zM1419 926h1v1h-1zM1454 926h1v1h-1zM1489 926h1v1h-1zM1524 926h1v1h-1zM1559 926h1v1h-1zM1594 926h1v1h-1zM1629 926h1v1h-1zM1664 926h1v1h-1zM1699 926h1v1h-1zM1734 926h1v1h-1zM20 950h1v1h-1zM55 950h1v1h-1zM90 950h1v1h-1zM125 950h1v1h-1zM160 950h1v1h-1zM195 950h1v1h-1zM230 950h1v1h-1zM265 950h1v1h-1zM300 950h1v1h-1zM335 950h1v1h-1zM370 950h1v1h-1zM405 950h1v1h-1zM440 950h1v1h-1zM475 950h1v1h-1zM510 950h1v1h-1zM545 950h1v1h-1zM580 950h1v1h-1zM615 950h1v1h-1zM650 950h1v1h-1zM685 950h1v1h-1zM720 950h1v1h-1zM754 950h1v1h-1zM789 950h1v1h-1zM824 950h1v1h-1zM859 950h1v1h-1zM894 950h1v1h-1zM929 950h1v1h-1zM964 950h1v1h-1zM999 950h1v1h-1zM1034 950h1v1h-1zM1069 950h1v1h-1zM1104 950h1v1h-1zM1139 950h1v1h-1zM1174 950h1v1h-1zM1209 950h1v1h-1zM1244 950h1v1h-1zM1279 950h1v1h-1zM1314 950h1v1h-1zM1349 950h1v1h-1zM1384 950h1v1h-1zM1419 950h1v1h-1zM1454 950h1v1h-1zM1489 950h1v1h-1zM1524 950h1v1h-1zM1559 950h1v1h-1zM1594 950h1v1h-1zM1629 950h1v1h-1zM1664 950h1v1h-1zM1699 950h1v1h-1zM1734 950h1v1h-1zM20 973h1v1h-1zM55 973h1v1h-1zM90 973h1v1h-1zM125 973h1v1h-1zM160 973h1v1h-1zM195 973h1v1h-1zM230 973h1v1h-1zM265 973h1v1h-1zM300 973h1v1h-1zM335 973h1v1h-1zM370 973h1v1h-1zM405 973h1v1h-1zM440 973h1v1h-1zM475 973h1v1h-1zM510 973h1v1h-1zM545 973h1v1h-1zM580 973h1v1h-1zM615 973h1v1h-1zM650 973h1v1h-1zM685 973h1v1h-1zM720 973h1v1h-1zM754 973h1v1h-1zM789 973h1v1h-1zM824 973h1v1h-1zM859 973h1v1h-1zM894 973h1v1h-1zM929 973h1v1h-1zM964 973h1v1h-1zM999 973h1v1h-1zM1034 973h1v1h-1zM1069 973h1v1h-1zM1104 973h1v1h-1zM1139 973h1v1h-1zM1174 973h1v1h-1zM1209 973h1v1h-1zM1244 973h1v1h-1zM1279 973h1v1h-1zM1314 973h1v1h-1zM1349 973h1v1h-1zM1384 973h1v1h-1zM1419 973h1v1h-1zM1454 973h1v1h-1zM1489 973h1v1h-1zM1524 973h1v1h-1zM1559 973h1v1h-1zM1594 973h1v1h-1zM1629 973h1v1h-1zM1664 973h1v1h-1zM1699 973h1v1h-1zM1734 973h1v1h-1z"/>
<path fill="#a8a8a8" d="M230 58h1v1h-1zM230 62h1v1h-1zM230 67h1v1h-1zM230 72h1v1h-1zM230 76h1v1h-1zM230 81h1v1h-1zM230 86h1v1h-1zM230 90h1v1h-1zM230 95h1v1h-1zM230 100h1v1h-1zM230 104h1v1h-1zM230 109h1v1h-1zM230 113h1v1h-1zM230 118h1v1h-1zM230 123h1v1h-1zM230 127h1v1h-1zM230 132h1v1h-1zM230 137h1v1h-1zM230 141h1v1h-1zM230 146h1v1h-1zM230 151h1v1h-1zM230 155h1v1h-1zM230 160h1v1h-1zM230 165h1v1h-1zM230 169h1v1h-1zM230 174h1v1h-1zM230 178h1v1h-1zM230 183h1v1h-1zM230 188h1v1h-1zM230 192h1v1h-1zM230 197h1v1h-1zM230 202h1v1h-1zM230 206h1v1h-1zM230 211h1v1h-1zM230 216h1v1h-1zM230 220h1v1h-1zM230 225h1v1h-1zM230 229h1v1h-1zM230 234h1v1h-1zM230 239h1v1h-1zM230 243h1v1h-1zM230 248h1v1h-1zM230 253h1v1h-1zM230 257h1v1h-1zM230 262h1v1h-1zM230 267h1v1h-1zM230 271h1v1h-1zM230 276h1v1h-1zM230 281h1v1h-1zM230 285h1v1h-1zM230 290h1v1h-1zM230 292h1v1h-1zM230 296h1v1h-1zM230 301h1v1h-1zM230 306h1v1h-1zM230 310h1v1h-1zM230 315h1v1h-1zM230 320h1v1h-1zM230 324h1v1h-1zM230 329h1v1h-1zM230 333h1v1h-1zM230 338h1v1h-1zM230 343h1v1h-1zM230 347h1v1h-1zM230 352h1v1h-1zM230 357h1v1h-1zM230 361h1v1h-1zM230 366h1v1h-1zM230 371h1v1h-1zM230 375h1v1h-1zM230 380h1v1h-1zM230 385h1v1h-1zM230 389h1v1h-1zM230 394h1v1h-1zM230 398h1v1h-1zM230 403h1v1h-1zM230 408h1v1h-1zM230 412h1v1h-1zM230 417h1v1h-1zM230 422h1v1h-1zM230 426h1v1h-1zM230 431h1v1h-1zM230 436h1v1h-1zM230 440h1v1h-1zM230 445h1v1h-1zM230 449h1v1h-1zM230 454h1v1h-1zM230 459h1v1h-1zM230 463h1v1h-1zM230 468h1v1h-1zM230 473h1v1h-1zM230 477h1v1h-1zM230 482h1v1h-1zM230 487h1v1h-1zM230 491h1v1h-1zM230 496h1v1h-1zM230 501h1v1h-1zM230 505h1v1h-1zM230 510h1v1h-1zM230 514h1v1h-1zM230 519h1v1h-1zM230 524h1v1h-1zM230 526h1v1h-1zM230 531h1v1h-1zM230 535h1v1h-1zM230 540h1v1h-1zM230 544h1v1h-1zM230 549h1v1h-1zM230 554h1v1h-1zM230 558h1v1h-1zM230 563h1v1h-1zM230 568h1v1h-1zM230 572h1v1h-1zM230 577h1v1h-1zM230 582h1v1h-1zM230 586h1v1h-1zM230 591h1v1h-1zM230 596h1v1h-1zM230 600h1v1h-1zM230 605h1v1h-1zM230 609h1v1h-1zM230 614h1v1h-1zM230 619h1v1h-1zM230 623h1v1h-1zM230 628h1v1h-1zM230 633h1v1h-1zM230 637h1v1h-1zM230 642h1v1h-1zM230 647h1v1h-1zM230 651h1v1h-1zM230 656h1v1h-1zM230 660h1v1h-1zM230 665h1v1h-1zM230 670h1v1h-1zM230 674h1v1h-1zM230 679h1v1h-1zM230 684h1v1h-1zM230 688h1v1h-1zM230 693h1v1h-1zM230 698h1v1h-1zM230 702h1v1h-1zM230 707h1v1h-1zM230 712h1v1h-1zM230 716h1v1h-1zM230 721h1v1h-1zM230 725h1v1h-1zM230 730h1v1h-1zM230 735h1v1h-1zM230 739h1v1h-1zM230 744h1v1h-1zM230 749h1v1h-1zM230 753h1v1h-1zM230 758h1v1h-1zM230 764h1v1h-1zM230 769h1v1h-1zM230 773h1v1h-1zM230 778h1v1h-1zM230 782h1v1h-1zM230 787h1v1h-1zM230 792h1v1h-1zM230 796h1v1h-1zM230 801h1v1h-1zM230 806h1v1h-1zM230 810h1v1h-1zM230 815h1v1h-1zM230 820h1v1h-1zM230 824h1v1h-1zM230 829h1v1h-1zM230 834h1v1h-1zM230 838h1v1h-1zM230 843h1v1h-1zM230 847h1v1h-1zM230 852h1v1h-1zM230 857h1v1h-1zM230 861h1v1h-1zM230 866h1v1h-1zM230 871h1v1h-1zM230 875h1v1h-1zM230 880h1v1h-1zM230 885h1v1h-1zM230 889h1v1h-1zM230 894h1v1h-1zM230 898h1v1h-1zM230 903h1v1h-1zM230 908h1v1h-1zM230 912h1v1h-1zM230 917h1v1h-1zM230 922h1v1h-1zM230 926h1v1h-1zM230 931h1v1h-1zM230 936h1v1h-1zM230 940h1v1h-1zM230 945h1v1h-1zM230 950h1v1h-1zM230 954h1v1h-1zM230 959h1v1h-1zM230 963h1v1h-1zM230 968h1v1h-1zM230 973h1v1h-1zM230 977h1v1h-1zM230 982h1v1h-1zM230 987h1v1h-1zM230 991h1v1h-1zM405 58h1v1h-1zM405 62h1v1h-1zM405 67h1v1h-1zM405 72h1v1h-1zM405 76h1v1h-1zM405 81h1v1h-1zM405 86h1v1h-1zM405 90h1v1h-1zM405 95h1v1h-1zM405 100h1v1h-1zM405 104h1v1h-1zM405 109h1v1h-1zM405 113h1v1h-1zM405 118h1v1h-1zM405 123h1v1h-1zM405 127h1v1h-1zM405 132h1v1h-1zM405 137h1v1h-1zM405 141h1v1h-1zM405 146h1v1h-1zM405 151h1v1h-1zM405 155h1v1h-1zM405 160h1v1h-1zM405 165h1v1h-1zM405 169h1v1h-1zM405 174h1v1h-1zM405 178h1v1h-1zM405 183h1v1h-1zM405 188h1v1h-1zM405 192h1v1h-1zM405 197h1v1h-1zM405 202h1v1h-1zM405 206h1v1h-1zM405 211h1v1h-1zM405 216h1v1h-1zM405 220h1v1h-1zM405 225h1v1h-1zM405 229h1v1h-1zM405 234h1v1h-1zM405 239h1v1h-1zM405 243h1v1h-1zM405 248h1v1h-1zM405 253h1v1h-1zM405 257h1v1h-1zM405 262h1v1h-1zM405 267h1v1h-1zM405 271h1v1h-1zM405 276h1v1h-1zM405 281h1v1h-1zM405 285h1v1h-1zM405 290h1v1h-1zM405 292h1v1h-1zM405 296h1v1h-1zM405 301h1v1h-1zM405 306h1v1h-1zM405 310h1v1h-1zM405 315h1v1h-1zM405 320h1v1h-1zM405 324h1v1h-1zM405 329h1v1h-1zM405 333h1v1h-1zM405 338h1v1h-1zM405 343h1v1h-1zM405 347h1v1h-1zM405 352h1v1h-1zM405 357h1v1h-1zM405 361h1v1h-1zM405 366h1v1h-1zM405 371h1v1h-1zM405 375h1v1h-1zM405 380h1v1h-1zM405 385h1v1h-1zM405 389h1v1h-1zM405 394h1v1h-1zM405 398h1v1h-1zM405 403h1v1h-1zM405 408h1v1h-1zM405 412h1v1h-1zM405 417h1v1h-1zM405 422h1v1h-1zM405 426h1v1h-1zM405 431h1v1h-1zM405 436h1v1h-1zM405 440h1v1h-1zM405 445h1v1h-1zM405 449h1v1h-1zM405 454h1v1h-1zM405 459h1v1h-1zM405 463h1v1h-1zM405 468h1v1h-1zM405 473h1v1h-1zM405 477h1v1h-1zM405 482h1v1h-1zM405 487h1v1h-1zM405 491h1v1h-1zM405 496h1v1h-1zM405 501h1v1h-1zM405 505h1v1h-1zM405 510h1v1h-1zM405 514h1v1h-1zM405 519h1v1h-1zM405 524h1v1h-1zM405 526h1v1h-1zM405 531h1v1h-1zM405 535h1v1h-1zM405 540h1v1h-1zM405 544h1v1h-1zM405 549h1v1h-1zM405 554h1v1h-1zM405 558h1v1h-1zM405 563h1v1h-1zM405 568h1v1h-1zM405 572h1v1h-1zM405 577h1v1h-1zM405 582h1v1h-1zM405 586h1v1h-1zM405 591h1v1h-1zM405 596h1v1h-1zM405 600h1v1h-1zM405 605h1v1h-1zM405 609h1v1h-1zM405 614h1v1h-1zM405 619h1v1h-1zM405 623h1v1h-1zM405 628h1v1h-1zM405 633h1v1h-1zM405 637h1v1h-1zM405 642h1v1h-1zM405 647h1v1h-1zM405 651h1v1h-1zM405 656h1v1h-1zM405 660h1v1h-1zM405 665h1v1h-1zM405 670h1v1h-1zM405 674h1v1h-1zM405 679h1v1h-1zM405 684h1v1h-1zM405 688h1v1h-1zM405 693h1v1h-1zM405 698h1v1h-1zM405 702h1v1h-1zM405 707h1v1h-1zM405 712h1v1h-1zM405 716h1v1h-1zM405 721h1v1h-1zM405 725h1v1h-1zM405 730h1v1h-1zM405 735h1v1h-1zM405 739h1v1h-1zM405 744h1v1h-1zM405 749h1v1h-1zM405 753h1v1h-1zM405 758h1v1h-1zM405 764h1v1h-1zM405 769h1v1h-1zM405 773h1v1h-1zM405 778h1v1h-1zM405 782h1v1h-1zM405 787h1v1h-1zM405 792h1v1h-1zM405 796h1v1h-1zM405 801h1v1h-1zM405 806h1v1h-1zM405 810h1v1h-1zM405 815h1v1h-1zM405 820h1v1h-1zM405 824h1v1h-1zM405 829h1v1h-1zM405 834h1v1h-1zM405 838h1v1h-1zM405 843h1v1h-1zM405 847h1v1h-1zM405 852h1v1h-1zM405 857h1v1h-1zM405 861h1v1h-1zM405 866h1v1h-1zM405 871h1v1h-1zM405 875h1v1h-1zM405 880h1v1h-1zM405 885h1v1h-1zM405 889h1v1h-1zM405 894h1v1h-1zM405 898h1v1h-1zM405 903h1v1h-1zM405 908h1v1h-1zM405 912h1v1h-1zM405 917h1v1h-1zM405 922h1v1h-1zM405 926h1v1h-1zM405 931h1v1h-1zM405 936h1v1h-1zM405 940h1v1h-1zM405 945h1v1h-1zM405 950h1v1h-1zM405 954h1v1h-1zM405 959h1v1h-1zM405 963h1v1h-1zM405 968h1v1h-1zM405 973h1v1h-1zM405 977h1v1h-1zM405 982h1v1h-1zM405 987h1v1h-1zM405 991h1v1h-1zM580 58h1v1h-1zM580 62h1v1h-1zM580 67h1v1h-1zM580 72h1v1h-1zM580 76h1v1h-1zM580 81h1v1h-1zM580 86h1v1h-1zM580 90h1v1h-1zM580 95h1v1h-1zM580 100h1v1h-1zM580 104h1v1h-1zM580 109h1v1h-1zM580 113h1v1h-1zM580 118h1v1h-1zM580 123h1v1h-1zM580 127h1v1h-1zM580 132h1v1h-1zM580 137h1v1h-1zM580 141h1v1h-1zM580 146h1v1h-1zM580 151h1v1h-1zM580 155h1v1h-1zM580 160h1v1h-1zM580 165h1v1h-1zM580 169h1v1h-1zM580 174h1v1h-1zM580 178h1v1h-1zM580 183h1v1h-1zM580 188h1v1h-1zM580 192h1v1h-1zM580 197h1v1h-1zM580 202h1v1h-1zM580 206h1v1h-1zM580 211h1v1h-1zM580 216h1v1h-1zM580 220h1v1h-1zM580 225h1v1h-1zM580 229h1v1h-1zM580 234h1v1h-1zM580 239h1v1h-1zM580 243h1v1h-1zM580 248h1v1h-1zM580 253h1v1h-1zM580 257h1v1h-1zM580 262h1v1h-1zM580 267h1v1h-1zM580 271h1v1h-1zM580 276h1v1h-1zM580 281h1v1h-1zM580 285h1v1h-1zM580 290h1v1h-1zM580 292h1v1h-1zM580 296h1v1h-1zM580 301h1v1h-1zM580 306h1v1h-1zM580 310h1v1h-1zM580 315h1v1h-1zM580 320h1v1h-1zM580 324h1v1h-1zM580 329h1v1h-1zM580 333h1v1h-1zM580 338h1v1h-1zM580 343h1v1h-1zM580 347h1v1h-1zM580 352h1v1h-1zM580 357h1v1h-1zM580 361h1v1h-1zM580 366h1v1h-1zM580 371h1v1h-1zM580 375h1v1h-1zM580 380h1v1h-1zM580 385h1v1h-1zM580 389h1v1h-1zM580 394h1v1h-1zM580 398h1v1h-1zM580 403h1v1h-1zM580 408h1v1h-1zM580 412h1v1h-1zM580 417h1v1h-1zM580 422h1v1h-1zM580 426h1v1h-1zM580 431h1v1h-1zM580 436h1v1h-1zM580 440h1v1h-1zM580 445h1v1h-1zM580 449h1v1h-1zM580 454h1v1h-1zM580 459h1v1h-1zM580 463h1v1h-1zM580 468h1v1h-1zM580 473h1v1h-1zM580 477h1v1h-1zM580 482h1v1h-1zM580 487h1v1h-1zM580 491h1v1h-1zM580 496h1v1h-1zM580 501h1v1h-1zM580 505h1v1h-1zM580 510h1v1h-1zM580 514h1v1h-1zM580 519h1v1h-1zM580 524h1v1h-1zM580 526h1v1h-1zM580 531h1v1h-1zM580 535h1v1h-1zM580 540h1v1h-1zM580 544h1v1h-1zM580 549h1v1h-1zM580 554h1v1h-1zM580 558h1v1h-1zM580 563h1v1h-1zM580 568h1v1h-1zM580 572h1v1h-1zM580 577h1v1h-1zM580 582h1v1h-1zM580 586h1v1h-1zM580 591h1v1h-1zM580 596h1v1h-1zM580 600h1v1h-1zM580 605h1v1h-1zM580 609h1v1h-1zM580 614h1v1h-1zM580 619h1v1h-1zM580 623h1v1h-1zM580 628h1v1h-1zM580 633h1v1h-1zM580 637h1v1h-1zM580 642h1v1h-1zM580 647h1v1h-1zM580 651h1v1h-1zM580 656h1v1h-1zM580 660h1v1h-1zM580 665h1v1h-1zM580 670h1v1h-1zM580 674h1v1h-1zM580 679h1v1h-1zM580 684h1v1h-1zM580 688h1v1h-1zM580 693h1v1h-1zM580 698h1v1h-1zM580 702h1v1h-1zM580 707h1v1h-1zM580 712h1v1h-1zM580 716h1v1h-1zM580 721h1v1h-1zM580 725h1v1h-1zM580 730h1v1h-1zM580 735h1v1h-1zM580 739h1v1h-1zM580 744h1v1h-1zM580 749h1v1h-1zM580 753h1v1h-1zM580 758h1v1h-1zM580 764h1v1h-1zM580 769h1v1h-1zM580 773h1v1h-1zM580 778h1v1h-1zM580 782h1v1h-1zM580 787h1v1h-1zM580 792h1v1h-1zM580 796h1v1h-1zM580 801h1v1h-1zM580 806h1v1h-1zM580 810h1v1h-1zM580 815h1v1h-1zM580 820h1v1h-1zM580 824h1v1h-1zM580 829h1v1h-1zM580 834h1v1h-1zM580 838h1v1h-1zM580 843h1v1h-1zM580 847h1v1h-1zM580 852h1v1h-1zM580 857h1v1h-1zM580 861h1v1h-1zM580 866h1v1h-1zM580 871h1v1h-1zM580 875h1v1h-1zM580 880h1v1h-1zM580 885h1v1h-1zM580 889h1v1h-1zM580 894h1v1h-1zM580 898h1v1h-1zM580 903h1v1h-1zM580 908h1v1h-1zM580 912h1v1h-1zM580 917h1v1h-1zM580 922h1v1h-1zM580 926h1v1h-1zM580 931h1v1h-1zM580 936h1v1h-1zM580 940h1v1h-1zM580 945h1v1h-1zM580 950h1v1h-1zM580 954h1v1h-1zM580 959h1v1h-1zM580 963h1v1h-1zM580 968h1v1h-1zM580 973h1v1h-1zM580 977h1v1h-1zM580 982h1v1h-1zM580 987h1v1h-1zM580 991h1v1h-1zM755 58h1v1h-1zM755 62h1v1h-1zM755 67h1v1h-1zM755 72h1v1h-1zM755 76h1v1h-1zM755 81h1v1h-1zM755 86h1v1h-1zM755 90h1v1h-1zM755 95h1v1h-1zM755 100h1v1h-1zM755 104h1v1h-1zM755 109h1v1h-1zM755 113h1v1h-1zM755 118h1v1h-1zM755 123h1v1h-1zM755 127h1v1h-1zM755 132h1v1h-1zM755 137h1v1h-1zM755 141h1v1h-1zM755 146h1v1h-1zM755 151h1v1h-1zM755 155h1v1h-1zM755 160h1v1h-1zM755 165h1v1h-1zM755 169h1v1h-1zM755 174h1v1h-1zM755 178h1v1h-1zM755 183h1v1h-1zM755 188h1v1h-1zM755 192h1v1h-1zM755 197h1v1h-1zM755 202h1v1h-1zM755 206h1v1h-1zM755 211h1v1h-1zM755 216h1v1h-1zM755 220h1v1h-1zM755 225h1v1h-1zM755 229h1v1h-1zM755 234h1v1h-1zM755 239h1v1h-1zM755 243h1v1h-1zM755 248h1v1h-1zM755 253h1v1h-1zM755 257h1v1h-1zM755 262h1v1h-1zM755 267h1v1h-1zM755 271h1v1h-1zM755 276h1v1h-1zM755 281h1v1h-1zM755 285h1v1h-1zM755 290h1v1h-1zM755 292h1v1h-1zM755 296h1v1h-1zM755 301h1v1h-1zM755 306h1v1h-1zM755 310h1v1h-1zM755 315h1v1h-1zM755 320h1v1h-1zM755 324h1v1h-1zM755 329h1v1h-1zM755 333h1v1h-1zM755 338h1v1h-1zM755 343h1v1h-1zM755 347h1v1h-1zM755 352h1v1h-1zM755 357h1v1h-1zM755 361h1v1h-1zM755 366h1v1h-1zM755 371h1v1h-1zM755 375h1v1h-1zM755 380h1v1h-1zM755 385h1v1h-1zM755 389h1v1h-1zM755 394h1v1h-1zM755 398h1v1h-1zM755 403h1v1h-1zM755 408h1v1h-1zM755 412h1v1h-1zM755 417h1v1h-1zM755 422h1v1h-1zM755 426h1v1h-1zM755 431h1v1h-1zM755 436h1v1h-1zM755 440h1v1h-1zM755 445h1v1h-1zM755 449h1v1h-1zM755 454h1v1h-1zM755 459h1v1h-1zM755 463h1v1h-1zM755 468h1v1h-1zM755 473h1v1h-1zM755 477h1v1h-1zM755 482h1v1h-1zM755 487h1v1h-1zM755 491h1v1h-1zM755 496h1v1h-1zM755 501h1v1h-1zM755 505h1v1h-1zM755 510h1v1h-1zM755 514h1v1h-1zM755 519h1v1h-1zM755 524h1v1h-1zM755 526h1v1h-1zM755 531h1v1h-1zM755 535h1v1h-1zM755 540h1v1h-1zM755 544h1v1h-1zM755 549h1v1h-1zM755 554h1v1h-1zM755 558h1v1h-1zM755 563h1v1h-1zM755 568h1v1h-1zM755 572h1v1h-1zM755 577h1v1h-1zM755 582h1v1h-1zM755 586h1v1h-1zM755 591h1v1h-1zM755 596h1v1h-1zM755 600h1v1h-1zM755 605h1v1h-1zM755 609h1v1h-1zM755 614h1v1h-1zM755 619h1v1h-1zM755 623h1v1h-1zM755 628h1v1h-1zM755 633h1v1h-1zM755 637h1v1h-1zM755 642h1v1h-1zM755 647h1v1h-1zM755 651h1v1h-1zM755 656h1v1h-1zM755 660h1v1h-1zM755 665h1v1h-1zM755 670h1v1h-1zM755 674h1v1h-1zM755 679h1v1h-1zM755 684h1v1h-1zM755 688h1v1h-1zM755 693h1v1h-1zM755 698h1v1h-1zM755 702h1v1h-1zM755 707h1v1h-1zM755 712h1v1h-1zM755 716h1v1h-1zM755 721h1v1h-1zM755 725h1v1h-1zM755 730h1v1h-1zM755 735h1v1h-1zM755 739h1v1h-1zM755 744h1v1h-1zM755 749h1v1h-1zM755 753h1v1h-1zM755 758h1v1h-1zM755 764h1v1h-1zM755 769h1v1h-1zM755 773h1v1h-1zM755 778h1v1h-1zM755 782h1v1h-1zM755 787h1v1h-1zM755 792h1v1h-1zM755 796h1v1h-1zM755 801h1v1h-1zM755 806h1v1h-1zM755 810h1v1h-1zM755 815h1v1h-1zM755 820h1v1h-1zM755 824h1v1h-1zM755 829h1v1h-1zM755 834h1v1h-1zM755 838h1v1h-1zM755 843h1v1h-1zM755 847h1v1h-1zM755 852h1v1h-1zM755 857h1v1h-1zM755 861h1v1h-1zM755 866h1v1h-1zM755 871h1v1h-1zM755 875h1v1h-1zM755 880h1v1h-1zM755 885h1v1h-1zM755 889h1v1h-1zM755 894h1v1h-1zM755 898h1v1h-1zM755 903h1v1h-1zM755 908h1v1h-1zM755 912h1v1h-1zM755 917h1v1h-1zM755 922h1v1h-1zM755 926h1v1h-1zM755 931h1v1h-1zM755 936h1v1h-1zM755 940h1v1h-1zM755 945h1v1h-1zM755 950h1v1h-1zM755 954h1v1h-1zM755 959h1v1h-1zM755 963h1v1h-1zM755 968h1v1h-1zM755 973h1v1h-1zM755 977h1v1h-1zM755 982h1v1h-1zM755 987h1v1h-1zM755 991h1v1h-1zM929 58h1v1h-1zM929 62h1v1h-1zM929 67h1v1h-1zM929 72h1v1h-1zM929 76h1v1h-1zM929 81h1v1h-1zM929 86h1v1h-1zM929 90h1v1h-1zM929 95h1v1h-1zM929 100h1v1h-1zM929 104h1v1h-1zM929 109h1v1h-1zM929 113h1v1h-1zM929 118h1v1h-1zM929 123h1v1h-1zM929 127h1v1h-1zM929 132h1v1h-1zM929 137h1v1h-1zM929 141h1v1h-1zM929 146h1v1h-1zM929 151h1v1h-1zM929 155h1v1h-1zM929 160h1v1h-1zM929 165h1v1h-1zM929 169h1v1h-1zM929 174h1v1h-1zM929 178h1v1h-1zM929 183h1v1h-1zM929 188h1v1h-1zM929 192h1v1h-1zM929 197h1v1h-1zM929 202h1v1h-1zM929 206h1v1h-1zM929 211h1v1h-1zM929 216h1v1h-1zM929 220h1v1h-1zM929 225h1v1h-1zM929 229h1v1h-1zM929 234h1v1h-1zM929 239h1v1h-1zM929 243h1v1h-1zM929 248h1v1h-1zM929 253h1v1h-1zM929 257h1v1h-1zM929 262h1v1h-1zM929 267h1v1h-1zM929 271h1v1h-1zM929 276h1v1h-1zM929 281h1v1h-1zM929 285h1v1h-1zM929 290h1v1h-1zM929 292h1v1h-1zM929 296h1v1h-1zM929 301h1v1h-1zM929 306h1v1h-1zM929 310h1v1h-1zM929 315h1v1h-1zM929 320h1v1h-1zM929 324h1v1h-1zM929 329h1v1h-1zM929 333h1v1h-1zM929 338h1v1h-1zM929 343h1v1h-1zM929 347h1v1h-1zM929 352h1v1h-1zM929 357h1v1h-1zM929 361h1v1h-1zM929 366h1v1h-1zM929 371h1v1h-1zM929 375h1v1h-1zM929 380h1v1h-1zM929 385h1v1h-1zM929 389h1v1h-1zM929 394h1v1h-1zM929 398h1v1h-1zM929 403h1v1h-1zM929 408h1v1h-1zM929 412h1v1h-1zM929 417h1v1h-1zM929 422h1v1h-1zM929 426h1v1h-1zM929 431h1v1h-1zM929 436h1v1h-1zM929 440h1v1h-1zM929 445h1v1h-1zM929 449h1v1h-1zM929 454h1v1h-1zM929 459h1v1h-1zM929 463h1v1h-1zM929 468h1v1h-1zM929 473h1v1h-1zM929 477h1v1h-1zM929 482h1v1h-1zM929 487h1v1h-1zM929 491h1v1h-1zM929 496h1v1h-1zM929 501h1v1h-1zM929 505h1v1h-1zM929 510h1v1h-1zM929 514h1v1h-1zM929 519h1v1h-1zM929 524h1v1h-1zM929 526h1v1h-1zM929 531h1v1h-1zM929 535h1v1h-1zM929 540h1v1h-1zM929 544h1v1h-1zM929 549h1v1h-1zM929 554h1v1h-1zM929 558h1v1h-1zM929 563h1v1h-1zM929 568h1v1h-1zM929 572h1v1h-1zM929 577h1v1h-1zM929 582h1v1h-1zM929 586h1v1h-1zM929 591h1v1h-1zM929 596h1v1h-1zM929 600h1v1h-1zM929 605h1v1h-1zM929 609h1v1h-1zM929 614h1v1h-1zM929 619h1v1h-1zM929 623h1v1h-1zM929 628h1v1h-1zM929 633h1v1h-1zM929 637h1v1h-1zM929 642h1v1h-1zM929 647h1v1h-1zM929 651h1v1h-1zM929 656h1v1h-1zM929 660h1v1h-1zM929 665h1v1h-1zM929 670h1v1h-1zM929 674h1v1h-1zM929 679h1v1h-1zM929 684h1v1h-1zM929 688h1v1h-1zM929 693h1v1h-1zM929 698h1v1h-1zM929 702h1v1h-1zM929 707h1v1h-1zM929 712h1v1h-1zM929 716h1v1h-1zM929 721h1v1h-1zM929 725h1v1h-1zM929 730h1v1h-1zM929 735h1v1h-1zM929 739h1v1h-1zM929 744h1v1h-1zM929 749h1v1h-1zM929 753h1v1h-1zM929 758h1v1h-1zM929 764h1v1h-1zM929 769h1v1h-1zM929 773h1v1h-1zM929 778h1v1h-1zM929 782h1v1h-1zM929 787h1v1h-1zM929 792h1v1h-1zM929 796h1v1h-1zM929 801h1v1h-1zM929 806h1v1h-1zM929 810h1v1h-1zM929 815h1v1h-1zM929 820h1v1h-1zM929 824h1v1h-1zM929 829h1v1h-1zM929 834h1v1h-1zM929 838h1v1h-1zM929 843h1v1h-1zM929 847h1v1h-1zM929 852h1v1h-1zM929 857h1v1h-1zM929 861h1v1h-1zM929 866h1v1h-1zM929 871h1v1h-1zM929 875h1v1h-1zM929 880h1v1h-1zM929 885h1v1h-1zM929 889h1v1h-1zM929 894h1v1h-1zM929 898h1v1h-1zM929 903h1v1h-1zM929 908h1v1h-1zM929 912h1v1h-1zM929 917h1v1h-1zM929 922h1v1h-1zM929 926h1v1h-1zM929 931h1v1h-1zM929 936h1v1h-1zM929 940h1v1h-1zM929 945h1v1h-1zM929 950h1v1h-1zM929 954h1v1h-1zM929 959h1v1h-1zM929 963h1v1h-1zM929 968h1v1h-1zM929 973h1v1h-1zM929 977h1v1h-1zM929 982h1v1h-1zM929 987h1v1h-1zM929 991h1v1h-1zM1104 58h1v1h-1zM1104 62h1v1h-1zM1104 67h1v1h-1zM1104 72h1v1h-1zM1104 76h1v1h-1zM1104 81h1v1h-1zM1104 86h1v1h-1zM1104 90h1v1h-1zM1104 95h1v1h-1zM1104 100h1v1h-1zM1104 104h1v1h-1zM1104 109h1v1h-1zM1104 113h1v1h-1zM1104 118h1v1h-1zM1104 123h1v1h-1zM1104 127h1v1h-1zM1104 132h1v1h-1zM1104 137h1v1h-1zM1104 141h1v1h-1zM1104 146h1v1h-1zM1104 151h1v1h-1zM1104 155h1v1h-1zM1104 160h1v1h-1zM1104 165h1v1h-1zM1104 169h1v1h-1zM1104 174h1v1h-1zM1104 178h1v1h-1zM1104 183h1v1h-1zM1104 188h1v1h-1zM1104 192h1v1h-1zM1104 197h1v1h-1zM1104 202h1v1h-1zM1104 206h1v1h-1zM1104 211h1v1h-1zM1104 216h1v1h-1zM1104 220h1v1h-1zM1104 225h1v1h-1zM1104 229h1v1h-1zM1104 234h1v1h-1zM1104 239h1v1h-1zM1104 243h1v1h-1zM1104 248h1v1h-1zM1104 253h1v1h-1zM1104 257h1v1h-1zM1104 262h1v1h-1zM1104 267h1v1h-1zM1104 271h1v1h-1zM1104 276h1v1h-1zM1104 281h1v1h-1zM1104 285h1v1h-1zM1104 290h1v1h-1zM1104 292h1v1h-1zM1104 296h1v1h-1zM1104 301h1v1h-1zM1104 306h1v1h-1zM1104 310h1v1h-1zM1104 315h1v1h-1zM1104 320h1v1h-1zM1104 324h1v1h-1zM1104 329h1v1h-1zM1104 333h1v1h-1zM1104 338h1v1h-1zM1104 343h1v1h-1zM1104 347h1v1h-1zM1104 352h1v1h-1zM1104 357h1v1h-1zM1104 361h1v1h-1zM1104 366h1v1h-1zM1104 371h1v1h-1zM1104 375h1v1h-1zM1104 380h1v1h-1zM1104 385h1v1h-1zM1104 389h1v1h-1zM1104 394h1v1h-1zM1104 398h1v1h-1zM1104 403h1v1h-1zM1104 408h1v1h-1zM1104 412h1v1h-1zM1104 417h1v1h-1zM1104 422h1v1h-1zM1104 426h1v1h-1zM1104 431h1v1h-1zM1104 436h1v1h-1zM1104 440h1v1h-1zM1104 445h1v1h-1zM1104 449h1v1h-1zM1104 454h1v1h-1zM1104 459h1v1h-1zM1104 463h1v1h-1zM1104 468h1v1h-1zM1104 473h1v1h-1zM1104 477h1v1h-1zM1104 482h1v1h-1zM1104 487h1v1h-1zM1104 491h1v1h-1zM1104 496h1v1h-1zM1104 501h1v1h-1zM1104 505h1v1h-1zM1104 510h1v1h-1zM1104 514h1v1h-1zM1104 519h1v1h-1zM1104 524h1v1h-1zM1104 526h1v1h-1zM1104 531h1v1h-1zM1104 535h1v1h-1zM1104 540h1v1h-1zM1104 544h1v1h-1zM1104 549h1v1h-1zM1104 554h1v1h-1zM1104 558h1v1h-1zM1104 563h1v1h-1zM1104 568h1v1h-1zM1104 572h1v1h-1zM1104 577h1v1h-1zM1104 582h1v1h-1zM1104 586h1v1h-1zM1104 591h1v1h-1zM1104 596h1v1h-1zM1104 600h1v1h-1zM1104 605h1v1h-1zM1104 609h1v1h-1zM1104 614h1v1h-1zM1104 619h1v1h-1zM1104 623h1v1h-1zM1104 628h1v1h-1zM1104 633h1v1h-1zM1104 637h1v1h-1zM1104 642h1v1h-1zM1104 647h1v1h-1zM1104 651h1v1h-1zM1104 656h1v1h-1zM1104 660h1v1h-1zM1104 665h1v1h-1zM1104 670h1v1h-1zM1104 674h1v1h-1zM1104 679h1v1h-1zM1104 684h1v1h-1zM1104 688h1v1h-1zM1104 693h1v1h-1zM1104 698h1v1h-1zM1104 702h1v1h-1zM1104 707h1v1h-1zM1104 712h1v1h-1zM1104 716h1v1h-1zM1104 721h1v1h-1zM1104 725h1v1h-1zM1104 730h1v1h-1zM1104 735h1v1h-1zM1104 739h1v1h-1zM1104 744h1v1h-1zM1104 749h1v1h-1zM1104 753h1v1h-1zM1104 758h1v1h-1zM1104 764h1v1h-1zM1104 769h1v1h-1zM1104 773h1v1h-1zM1104 778h1v1h-1zM1104 782h1v1h-1zM1104 787h1v1h-1zM1104 792h1v1h-1zM1104 796h1v1h-1zM1104 801h1v1h-1zM1104 806h1v1h-1zM1104 810h1v1h-1zM1104 815h1v1h-1zM1104 820h1v1h-1zM1104 824h1v1h-1zM1104 829h1v1h-1zM1104 834h1v1h-1zM1104 838h1v1h-1zM1104 843h1v1h-1zM1104 847h1v1h-1zM1104 852h1v1h-1zM1104 857h1v1h-1zM1104 861h1v1h-1zM1104 866h1v1h-1zM1104 871h1v1h-1zM1104 875h1v1h-1zM1104 880h1v1h-1zM1104 885h1v1h-1zM1104 889h1v1h-1zM1104 894h1v1h-1zM1104 898h1v1h-1zM1104 903h1v1h-1zM1104 908h1v1h-1zM1104 912h1v1h-1zM1104 917h1v1h-1zM1104 922h1v1h-1zM1104 926h1v1h-1zM1104 931h1v1h-1zM1104 936h1v1h-1zM1104 940h1v1h-1zM1104 945h1v1h-1zM1104 950h1v1h-1zM1104 954h1v1h-1zM1104 959h1v1h-1zM1104 963h1v1h-1zM1104 968h1v1h-1zM1104 973h1v1h-1zM1104 977h1v1h-1zM1104 982h1v1h-1zM1104 987h1v1h-1zM1104 991h1v1h-1zM1279 58h1v1h-1zM1279 62h1v1h-1zM1279 67h1v1h-1zM1279 72h1v1h-1zM1279 76h1v1h-1zM1279 81h1v1h-1zM1279 86h1v1h-1zM1279 90h1v1h-1zM1279 95h1v1h-1zM1279 100h1v1h-1zM1279 104h1v1h-1zM1279 109h1v1h-1zM1279 113h1v1h-1zM1279 118h1v1h-1zM1279 123h1v1h-1zM1279 127h1v1h-1zM1279 132h1v1h-1zM1279 137h1v1h-1zM1279 141h1v1h-1zM1279 146h1v1h-1zM1279 151h1v1h-1zM1279 155h1v1h-1zM1279 160h1v1h-1zM1279 165h1v1h-1zM1279 169h1v1h-1zM1279 174h1v1h-1zM1279 178h1v1h-1zM1279 183h1v1h-1zM1279 188h1v1h-1zM1279 192h1v1h-1zM1279 197h1v1h-1zM1279 202h1v1h-1zM1279 206h1v1h-1zM1279 211h1v1h-1zM1279 216h1v1h-1zM1279 220h1v1h-1zM1279 225h1v1h-1zM1279 229h1v1h-1zM1279 234h1v1h-1zM1279 239h1v1h-1zM1279 243h1v1h-1zM1279 248h1v1h-1zM1279 253h1v1h-1zM1279 257h1v1h-1zM1279 262h1v1h-1zM1279 267h1v1h-1zM1279 271h1v1h-1zM1279 276h1v1h-1zM1279 281h1v1h-1zM1279 285h1v1h-1zM1279 290h1v1h-1zM1279 292h1v1h-1zM1279 296h1v1h-1zM1279 301h1v1h-1zM1279 306h1v1h-1zM1279 310h1v1h-1zM1279 315h1v1h-1zM1279 320h1v1h-1zM1279 324h1v1h-1zM1279 329h1v1h-1zM1279 333h1v1h-1zM1279 338h1v1h-1zM1279 343h1v1h-1zM1279 347h1v1h-1zM1279 352h1v1h-1zM1279 357h1v1h-1zM1279 361h1v1h-1zM1279 366h1v1h-1zM1279 371h1v1h-1zM1279 375h1v1h-1zM1279 380h1v1h-1zM1279 385h1v1h-1zM1279 389h1v1h-1zM1279 394h1v1h-1zM1279 398h1v1h-1zM1279 403h1v1h-1zM1279 408h1v1h-1zM1279 412h1v1h-1zM1279 417h1v1h-1zM1279 422h1v1h-1zM1279 426h1v1h-1zM1279 431h1v1h-1zM1279 436h1v1h-1zM1279 440h1v1h-1zM1279 445h1v1h-1zM1279 449h1v1h-1zM1279 454h1v1h-1zM1279 459h1v1h-1zM1279 463h1v1h-1zM1279 468h1v1h-1zM1279 473h1v1h-1zM1279 477h1v1h-1zM1279 482h1v1h-1zM1279 487h1v1h-1zM1279 491h1v1h-1zM1279 496h1v1h-1zM1279 501h1v1h-1zM1279 505h1v1h-1zM1279 510h1v1h-1zM1279 514h1v1h-1zM1279 519h1v1h-1zM1279 524h1v1h-1zM1279 526h1v1h-1zM1279 531h1v1h-1zM1279 535h1v1h-1zM1279 540h1v1h-1zM1279 544h1v1h-1zM1279 549h1v1h-1zM1279 554h1v1h-1zM1279 558h1v1h-1zM1279 563h1v1h-1zM1279 568h1v1h-1zM1279 572h1v1h-1zM1279 577h1v1h-1zM1279 582h1v1h-1zM1279 586h1v1h-1zM1279 591h1v1h-1zM1279 596h1v1h-1zM1279 600h1v1h-1zM1279 605h1v1h-1zM1279 609h1v1h-1zM1279 614h1v1h-1zM1279 619h1v1h-1zM1279 623h1v1h-1zM1279 628h1v1h-1zM1279 633h1v1h-1zM1279 637h1v1h-1zM1279 642h1v1h-1zM1279 647h1v1h-1zM1279 651h1v1h-1zM1279 656h1v1h-1zM1279 660h1v1h-1zM1279 665h1v1h-1zM1279 670h1v1h-1zM1279 674h1v1h-1zM1279 679h1v1h-1zM1279 684h1v1h-1zM1279 688h1v1h-1zM1279 693h1v1h-1zM1279 698h1v1h-1zM1279 702h1v1h-1zM1279 707h1v1h-1zM1279 712h1v1h-1zM1279 716h1v1h-1zM1279 721h1v1h-1zM1279 725h1v1h-1zM1279 730h1v1h-1zM1279 735h1v1h-1zM1279 739h1v1h-1zM1279 744h1v1h-1zM1279 749h1v1h-1zM1279 753h1v1h-1zM1279 758h1v1h-1zM1279 764h1v1h-1zM1279 769h1v1h-1zM1279 773h1v1h-1zM1279 778h1v1h-1zM1279 782h1v1h-1zM1279 787h1v1h-1zM1279 792h1v1h-1zM1279 796h1v1h-1zM1279 801h1v1h-1zM1279 806h1v1h-1zM1279 810h1v1h-1zM1279 815h1v1h-1zM1279 820h1v1h-1zM1279 824h1v1h-1zM1279 829h1v1h-1zM1279 834h1v1h-1zM1279 838h1v1h-1zM1279 843h1v1h-1zM1279 847h1v1h-1zM1279 852h1v1h-1zM1279 857h1v1h-1zM1279 861h1v1h-1zM1279 866h1v1h-1zM1279 871h1v1h-1zM1279 875h1v1h-1zM1279 880h1v1h-1zM1279 885h1v1h-1zM1279 889h1v1h-1zM1279 894h1v1h-1zM1279 898h1v1h-1zM1279 903h1v1h-1zM1279 908h1v1h-1zM1279 912h1v1h-1zM1279 917h1v1h-1zM1279 922h1v1h-1zM1279 926h1v1h-1zM1279 931h1v1h-1zM1279 936h1v1h-1zM1279 940h1v1h-1zM1279 945h1v1h-1zM1279 950h1v1h-1zM1279 954h1v1h-1zM1279 959h1v1h-1zM1279 963h1v1h-1zM1279 968h1v1h-1zM1279 973h1v1h-1zM1279 977h1v1h-1zM1279 982h1v1h-1zM1279 987h1v1h-1zM1279 991h1v1h-1zM1454 58h1v1h-1zM1454 62h1v1h-1zM1454 67h1v1h-1zM1454 72h1v1h-1zM1454 76h1v1h-1zM1454 81h1v1h-1zM1454 86h1v1h-1zM1454 90h1v1h-1zM1454 95h1v1h-1zM1454 100h1v1h-1zM1454 104h1v1h-1zM1454 109h1v1h-1zM1454 113h1v1h-1zM1454 118h1v1h-1zM1454 123h1v1h-1zM1454 127h1v1h-1zM1454 132h1v1h-1zM1454 137h1v1h-1zM1454 141h1v1h-1zM1454 146h1v1h-1zM1454 151h1v1h-1zM1454 155h1v1h-1zM1454 160h1v1h-1zM1454 165h1v1h-1zM1454 169h1v1h-1zM1454 174h1v1h-1zM1454 178h1v1h-1zM1454 183h1v1h-1zM1454 188h1v1h-1zM1454 192h1v1h-1zM1454 197h1v1h-1zM1454 202h1v1h-1zM1454 206h1v1h-1zM1454 211h1v1h-1zM1454 216h1v1h-1zM1454 220h1v1h-1zM1454 225h1v1h-1zM1454 229h1v1h-1zM1454 234h1v1h-1zM1454 239h1v1h-1zM1454 243h1v1h-1zM1454 248h1v1h-1zM1454 253h1v1h-1zM1454 257h1v1h-1zM1454 262h1v1h-1zM1454 267h1v1h-1zM1454 271h1v1h-1zM1454 276h1v1h-1zM1454 281h1v1h-1zM1454 285h1v1h-1zM1454 290h1v1h-1zM1454 292h1v1h-1zM1454 296h1v1h-1zM1454 301h1v1h-1zM1454 306h1v1h-1zM1454 310h1v1h-1zM1454 315h1v1h-1zM1454 320h1v1h-1zM1454 324h1v1h-1zM1454 329h1v1h-1zM1454 333h1v1h-1zM1454 338h1v1h-1zM1454 343h1v1h-1zM1454 347h1v1h-1zM1454 352h1v1h-1zM1454 357h1v1h-1zM1454 361h1v1h-1zM1454 366h1v1h-1zM1454 371h1v1h-1zM1454 375h1v1h-1zM1454 380h1v1h-1zM1454 385h1v1h-1zM1454 389h1v1h-1zM1454 394h1v1h-1zM1454 398h1v1h-1zM1454 403h1v1h-1zM1454 408h1v1h-1zM1454 412h1v1h-1zM1454 417h1v1h-1zM1454 422h1v1h-1zM1454 426h1v1h-1zM1454 431h1v1h-1zM1454 436h1v1h-1zM1454 440h1v1h-1zM1454 445h1v1h-1zM1454 449h1v1h-1zM1454 454h1v1h-1zM1454 459h1v1h-1zM1454 463h1v1h-1zM1454 468h1v1h-1zM1454 473h1v1h-1zM1454 477h1v1h-1zM1454 482h1v1h-1zM1454 487h1v1h-1zM1454 491h1v1h-1zM1454 496h1v1h-1zM1454 501h1v1h-1zM1454 505h1v1h-1zM1454 510h1v1h-1zM1454 514h1v1h-1zM1454 519h1v1h-1zM1454 524h1v1h-1zM1454 526h1v1h-1zM1454 531h1v1h-1zM1454 535h1v1h-1zM1454 540h1v1h-1zM1454 544h1v1h-1zM1454 549h1v1h-1zM1454 554h1v1h-1zM1454 558h1v1h-1zM1454 563h1v1h-1zM1454 568h1v1h-1zM1454 572h1v1h-1zM1454 577h1v1h-1zM1454 582h1v1h-1zM1454 586h1v1h-1zM1454 591h1v1h-1zM1454 596h1v1h-1zM1454 600h1v1h-1zM1454 605h1v1h-1zM1454 609h1v1h-1zM1454 614h1v1h-1zM1454 619h1v1h-1zM1454 623h1v1h-1zM1454 628h1v1h-1zM1454 633h1v1h-1zM1454 637h1v1h-1zM1454 642h1v1h-1zM1454 647h1v1h-1zM1454 651h1v1h-1zM1454 656h1v1h-1zM1454 660h1v1h-1zM1454 665h1v1h-1zM1454 670h1v1h-1zM1454 674h1v1h-1zM1454 679h1v1h-1zM1454 684h1v1h-1zM1454 688h1v1h-1zM1454 693h1v1h-1zM1454 698h1v1h-1zM1454 702h1v1h-1zM1454 707h1v1h-1zM1454 712h1v1h-1zM1454 716h1v1h-1zM1454 721h1v1h-1zM1454 725h1v1h-1zM1454 730h1v1h-1zM1454 735h1v1h-1zM1454 739h1v1h-1zM1454 744h1v1h-1zM1454 749h1v1h-1zM1454 753h1v1h-1zM1454 758h1v1h-1zM1454 764h1v1h-1zM1454 769h1v1h-1zM1454 773h1v1h-1zM1454 778h1v1h-1zM1454 782h1v1h-1zM1454 787h1v1h-1zM1454 792h1v1h-1zM1454 796h1v1h-1zM1454 801h1v1h-1zM1454 806h1v1h-1zM1454 810h1v1h-1zM1454 815h1v1h-1zM1454 820h1v1h-1zM1454 824h1v1h-1zM1454 829h1v1h-1zM1454 834h1v1h-1zM1454 838h1v1h-1zM1454 843h1v1h-1zM1454 847h1v1h-1zM1454 852h1v1h-1zM1454 857h1v1h-1zM1454 861h1v1h-1zM1454 866h1v1h-1zM1454 871h1v1h-1zM1454 875h1v1h-1zM1454 880h1v1h-1zM1454 885h1v1h-1zM1454 889h1v1h-1zM1454 894h1v1h-1zM1454 898h1v1h-1zM1454 903h1v1h-1zM1454 908h1v1h-1zM1454 912h1v1h-1zM1454 917h1v1h-1zM1454 922h1v1h-1zM1454 926h1v1h-1zM1454 931h1v1h-1zM1454 936h1v1h-1zM1454 940h1v1h-1zM1454 945h1v1h-1zM1454 950h1v1h-1zM1454 954h1v1h-1zM1454 959h1v1h-1zM1454 963h1v1h-1zM1454 968h1v1h-1zM1454 973h1v1h-1zM1454 977h1v1h-1zM1454 982h1v1h-1zM1454 987h1v1h-1zM1454 991h1v1h-1zM1629 58h1v1h-1zM1629 62h1v1h-1zM1629 67h1v1h-1zM1629 72h1v1h-1zM1629 76h1v1h-1zM1629 81h1v1h-1zM1629 86h1v1h-1zM1629 90h1v1h-1zM1629 95h1v1h-1zM1629 100h1v1h-1zM1629 104h1v1h-1zM1629 109h1v1h-1zM1629 113h1v1h-1zM1629 118h1v1h-1zM1629 123h1v1h-1zM1629 127h1v1h-1zM1629 132h1v1h-1zM1629 137h1v1h-1zM1629 141h1v1h-1zM1629 146h1v1h-1zM1629 151h1v1h-1zM1629 155h1v1h-1zM1629 160h1v1h-1zM1629 165h1v1h-1zM1629 169h1v1h-1zM1629 174h1v1h-1zM1629 178h1v1h-1zM1629 183h1v1h-1zM1629 188h1v1h-1zM1629 192h1v1h-1zM1629 197h1v1h-1zM1629 202h1v1h-1zM1629 206h1v1h-1zM1629 211h1v1h-1zM1629 216h1v1h-1zM1629 220h1v1h-1zM1629 225h1v1h-1zM1629 229h1v1h-1zM1629 234h1v1h-1zM1629 239h1v1h-1zM1629 243h1v1h-1zM1629 248h1v1h-1zM1629 253h1v1h-1zM1629 257h1v1h-1zM1629 262h1v1h-1zM1629 267h1v1h-1zM1629 271h1v1h-1zM1629 276h1v1h-1zM1629 281h1v1h-1zM1629 285h1v1h-1zM1629 290h1v1h-1zM1629 292h1v1h-1zM1629 296h1v1h-1zM1629 301h1v1h-1zM1629 306h1v1h-1zM1629 310h1v1h-1zM1629 315h1v1h-1zM1629 320h1v1h-1zM1629 324h1v1h-1zM1629 329h1v1h-1zM1629 333h1v1h-1zM1629 338h1v1h-1zM1629 343h1v1h-1zM1629 347h1v1h-1zM1629 352h1v1h-1zM1629 357h1v1h-1zM1629 361h1v1h-1zM1629 366h1v1h-1zM1629 371h1v1h-1zM1629 375h1v1h-1zM1629 380h1v1h-1zM1629 385h1v1h-1zM1629 389h1v1h-1zM1629 394h1v1h-1zM1629 398h1v1h-1zM1629 403h1v1h-1zM1629 408h1v1h-1zM1629 412h1v1h-1zM1629 417h1v1h-1zM1629 422h1v1h-1zM1629 426h1v1h-1zM1629 431h1v1h-1zM1629 436h1v1h-1zM1629 440h1v1h-1zM1629 445h1v1h-1zM1629 449h1v1h-1zM1629 454h1v1h-1zM1629 459h1v1h-1zM1629 463h1v1h-1zM1629 468h1v1h-1zM1629 473h1v1h-1zM1629 477h1v1h-1zM1629 482h1v1h-1zM1629 487h1v1h-1zM1629 491h1v1h-1zM1629 496h1v1h-1zM1629 501h1v1h-1zM1629 505h1v1h-1zM1629 510h1v1h-1zM1629 514h1v1h-1zM1629 519h1v1h-1zM1629 524h1v1h-1zM1629 526h1v1h-1zM1629 531h1v1h-1zM1629 535h1v1h-1zM1629 540h1v1h-1zM1629 544h1v1h-1zM1629 549h1v1h-1zM1629 554h1v1h-1zM1629 558h1v1h-1zM1629 563h1v1h-1zM1629 568h1v1h-1zM1629 572h1v1h-1zM1629 577h1v1h-1zM1629 582h1v1h-1zM1629 586h1v1h-1zM1629 591h1v1h-1zM1629 596h1v1h-1zM1629 600h1v1h-1zM1629 605h1v1h-1zM1629 609h1v1h-1zM1629 614h1v1h-1zM1629 619h1v1h-1zM1629 623h1v1h-1zM1629 628h1v1h-1zM1629 633h1v1h-1zM1629 637h1v1h-1zM1629 642h1v1h-1zM1629 647h1v1h-1zM1629 651h1v1h-1zM1629 656h1v1h-1zM1629 660h1v1h-1zM1629 665h1v1h-1zM1629 670h1v1h-1zM1629 674h1v1h-1zM1629 679h1v1h-1zM1629 684h1v1h-1zM1629 688h1v1h-1zM1629 693h1v1h-1zM1629 698h1v1h-1zM1629 702h1v1h-1zM1629 707h1v1h-1zM1629 712h1v1h-1zM1629 716h1v1h-1zM1629 721h1v1h-1zM1629 725h1v1h-1zM1629 730h1v1h-1zM1629 735h1v1h-1zM1629 739h1v1h-1zM1629 744h1v1h-1zM1629 749h1v1h-1zM1629 753h1v1h-1zM1629 758h1v1h-1zM1629 764h1v1h-1zM1629 769h1v1h-1zM1629 773h1v1h-1zM1629 778h1v1h-1zM1629 782h1v1h-1zM1629 787h1v1h-1zM1629 792h1v1h-1zM1629 796h1v1h-1zM1629 801h1v1h-1zM1629 806h1v1h-1zM1629 810h1v1h-1zM1629 815h1v1h-1zM1629 820h1v1h-1zM1629 824h1v1h-1zM1629 829h1v1h-1zM1629 834h1v1h-1zM1629 838h1v1h-1zM1629 843h1v1h-1zM1629 847h1v1h-1zM1629 852h1v1h-1zM1629 857h1v1h-1zM1629 861h1v1h-1zM1629 866h1v1h-1zM1629 871h1v1h-1zM1629 875h1v1h-1zM1629 880h1v1h-1zM1629 885h1v1h-1zM1629 889h1v1h-1zM1629 894h1v1h-1zM1629 898h1v1h-1zM1629 903h1v1h-1zM1629 908h1v1h-1zM1629 912h1v1h-1zM1629 917h1v1h-1zM1629 922h1v1h-1zM1629 926h1v1h-1zM1629 931h1v1h-1zM1629 936h1v1h-1zM1629 940h1v1h-1zM1629 945h1v1h-1zM1629 950h1v1h-1zM1629 954h1v1h-1zM1629 959h1v1h-1zM1629 963h1v1h-1zM1629 968h1v1h-1zM1629 973h1v1h-1zM1629 977h1v1h-1zM1629 982h1v1h-1zM1629 987h1v1h-1zM1629 991h1v1h-1z"/>
<line x1="55.5" y1="98.9" x2="55.5" y2="993" stroke="#c8c8c8" stroke-width="1.2" stroke-dasharray="5 5"/>
<rect x="3" y="290" width="1748" height="2" fill="#707070"/>
<rect x="3" y="524" width="1748" height="2" fill="#707070"/>
<rect x="3" y="758" width="1748" height="2" fill="#707070"/>
<line x1="3" y1="267.5" x2="1718" y2="267.5" stroke="#cccccc" stroke-width="1" stroke-dasharray="5 5"/>
<line x1="3" y1="431.5" x2="1718" y2="431.5" stroke="#cccccc" stroke-width="1" stroke-dasharray="5 5"/>
<line x1="3" y1="735.5" x2="1718" y2="735.5" stroke="#cccccc" stroke-width="1" stroke-dasharray="5 5"/>
<line x1="3" y1="904.5" x2="1718" y2="904.5" stroke="#cccccc" stroke-width="1" stroke-dasharray="5 5"/>
<text x="55.5" y="987" fill="#b4b4b4" font-size="13" text-anchor="middle">0 s</text>
<text x="230.4" y="987" fill="#b4b4b4" font-size="13" text-anchor="middle">4 ms</text>
<text x="405.2" y="987" fill="#b4b4b4" font-size="13" text-anchor="middle">8 ms</text>
<text x="580.1" y="987" fill="#b4b4b4" font-size="13" text-anchor="middle">12 ms</text>
<text x="755.0" y="987" fill="#b4b4b4" font-size="13" text-anchor="middle">16 ms</text>
<text x="929.9" y="987" fill="#b4b4b4" font-size="13" text-anchor="middle">20 ms</text>
<text x="1104.8" y="987" fill="#b4b4b4" font-size="13" text-anchor="middle">24 ms</text>
<text x="1279.6" y="987" fill="#b4b4b4" font-size="13" text-anchor="middle">28 ms</text>
<text x="1454.5" y="987" fill="#b4b4b4" font-size="13" text-anchor="middle">32 ms</text>
<text x="1629.4" y="987" fill="#b4b4b4" font-size="13" text-anchor="middle">36 ms</text>
<rect x="1717.8" y="75.5" width="28.8" height="12" fill="#000"/>
<text x="1746" y="86.1" fill="#f6ec38" font-size="13" text-anchor="end">40 V</text>
<rect x="1717.8" y="98.7" width="28.8" height="12" fill="#000"/>
<text x="1746" y="109.3" fill="#f6ec38" font-size="13" text-anchor="end">35 V</text>
<rect x="1717.8" y="121.9" width="28.8" height="12" fill="#000"/>
<text x="1746" y="132.5" fill="#f6ec38" font-size="13" text-anchor="end">30 V</text>
<rect x="1717.8" y="145.1" width="28.8" height="12" fill="#000"/>
<text x="1746" y="155.7" fill="#f6ec38" font-size="13" text-anchor="end">25 V</text>
<rect x="1717.8" y="168.3" width="28.8" height="12" fill="#000"/>
<text x="1746" y="178.9" fill="#f6ec38" font-size="13" text-anchor="end">20 V</text>
<rect x="1717.8" y="191.5" width="28.8" height="12" fill="#000"/>
<text x="1746" y="202.1" fill="#f6ec38" font-size="13" text-anchor="end">15 V</text>
<rect x="1717.8" y="214.7" width="28.8" height="12" fill="#000"/>
<text x="1746" y="225.3" fill="#f6ec38" font-size="13" text-anchor="end">10 V</text>
<rect x="1725.0" y="237.9" width="21.5" height="12" fill="#000"/>
<text x="1746" y="248.5" fill="#f6ec38" font-size="13" text-anchor="end">5 V</text>
<rect x="1725.0" y="261.1" width="21.5" height="12" fill="#000"/>
<text x="1746" y="271.7" fill="#f6ec38" font-size="13" text-anchor="end">0 V</text>
<rect x="1725.0" y="309.4" width="21.5" height="12" fill="#000"/>
<text x="1746" y="320.0" fill="#8ecb34" font-size="13" text-anchor="end">1 V</text>
<rect x="1699.7" y="332.6" width="46.8" height="12" fill="#000"/>
<text x="1746" y="343.2" fill="#8ecb34" font-size="13" text-anchor="end">800 mV</text>
<rect x="1699.7" y="355.8" width="46.8" height="12" fill="#000"/>
<text x="1746" y="366.4" fill="#8ecb34" font-size="13" text-anchor="end">600 mV</text>
<rect x="1699.7" y="379.0" width="46.8" height="12" fill="#000"/>
<text x="1746" y="389.6" fill="#8ecb34" font-size="13" text-anchor="end">400 mV</text>
<rect x="1699.7" y="402.2" width="46.8" height="12" fill="#000"/>
<text x="1746" y="412.8" fill="#8ecb34" font-size="13" text-anchor="end">200 mV</text>
<rect x="1725.0" y="425.4" width="21.5" height="12" fill="#000"/>
<text x="1746" y="436.0" fill="#8ecb34" font-size="13" text-anchor="end">0 V</text>
<rect x="1695.4" y="448.6" width="51.1" height="12" fill="#000"/>
<text x="1746" y="459.2" fill="#8ecb34" font-size="13" text-anchor="end">-200 mV</text>
<rect x="1695.4" y="471.8" width="51.1" height="12" fill="#000"/>
<text x="1746" y="482.4" fill="#8ecb34" font-size="13" text-anchor="end">-400 mV</text>
<rect x="1695.4" y="495.0" width="51.1" height="12" fill="#000"/>
<text x="1746" y="505.6" fill="#8ecb34" font-size="13" text-anchor="end">-600 mV</text>
<rect x="1673.6" y="543.6" width="72.9" height="12" fill="#000"/>
<text x="1746" y="554.2" fill="#f39325" font-size="13.3" text-anchor="end">528.652 mT</text>
<rect x="1673.6" y="566.8" width="72.9" height="12" fill="#000"/>
<text x="1746" y="577.4" fill="#f39325" font-size="13.3" text-anchor="end">462.571 mT</text>
<rect x="1673.6" y="590.0" width="72.9" height="12" fill="#000"/>
<text x="1746" y="600.6" fill="#f39325" font-size="13.3" text-anchor="end">396.489 mT</text>
<rect x="1673.6" y="613.2" width="72.9" height="12" fill="#000"/>
<text x="1746" y="623.8" fill="#f39325" font-size="13.3" text-anchor="end">330.408 mT</text>
<rect x="1673.6" y="636.4" width="72.9" height="12" fill="#000"/>
<text x="1746" y="647.0" fill="#f39325" font-size="13.3" text-anchor="end">264.326 mT</text>
<rect x="1673.6" y="659.6" width="72.9" height="12" fill="#000"/>
<text x="1746" y="670.2" fill="#f39325" font-size="13.3" text-anchor="end">198.245 mT</text>
<rect x="1673.6" y="682.8" width="72.9" height="12" fill="#000"/>
<text x="1746" y="693.4" fill="#f39325" font-size="13.3" text-anchor="end">132.163 mT</text>
<rect x="1681.0" y="706.0" width="65.5" height="12" fill="#000"/>
<text x="1746" y="716.6" fill="#f39325" font-size="13.3" text-anchor="end">66.082 mT</text>
<rect x="1725.5" y="729.2" width="21.0" height="12" fill="#000"/>
<text x="1746" y="739.8" fill="#f39325" font-size="13.3" text-anchor="end">0 T</text>
<rect x="1684.1" y="781.6" width="62.4" height="12" fill="#000"/>
<text x="1746" y="792.2" fill="#722c8c" font-size="13.4" text-anchor="end">781.185 A</text>
<rect x="1684.1" y="804.8" width="62.4" height="12" fill="#000"/>
<text x="1746" y="815.4" fill="#722c8c" font-size="13.4" text-anchor="end">624.948 A</text>
<rect x="1685.1" y="828.0" width="61.4" height="12" fill="#000"/>
<text x="1746" y="838.6" fill="#722c8c" font-size="13.4" text-anchor="end">468.711 A</text>
<rect x="1684.1" y="851.2" width="62.4" height="12" fill="#000"/>
<text x="1746" y="861.8" fill="#722c8c" font-size="13.4" text-anchor="end">312.474 A</text>
<rect x="1684.1" y="874.4" width="62.4" height="12" fill="#000"/>
<text x="1746" y="885.0" fill="#722c8c" font-size="13.4" text-anchor="end">156.237 A</text>
<rect x="1725.1" y="897.6" width="21.4" height="12" fill="#000"/>
<text x="1746" y="908.2" fill="#722c8c" font-size="13.4" text-anchor="end">0 A</text>
<rect x="1679.7" y="920.8" width="66.8" height="12" fill="#000"/>
<text x="1746" y="931.4" fill="#722c8c" font-size="13.4" text-anchor="end">-156.237 A</text>
<rect x="1679.7" y="944.0" width="66.8" height="12" fill="#000"/>
<text x="1746" y="954.6" fill="#722c8c" font-size="13.4" text-anchor="end">-312.474 A</text>
<rect x="1680.7" y="967.2" width="65.8" height="12" fill="#000"/>
<text x="1746" y="977.8" fill="#722c8c" font-size="13.4" text-anchor="end">-468.711 A</text>
<polyline fill="none" stroke="#f6ec38" stroke-width="1.2" stroke-linejoin="round" points="3,265.5 3,265.5 55,265.5 55.5,259 56.5,265 58,266 58,266.5 58.4,266.5 59,265.5 143.5,265.5 144,257 144,257.5 144.4,257.5 145,258.5 145.4,258.5 146,259.5 146,259.5 146,259.5 146.4,259.5 147,258.5 147.4,258.5 148,257.5 148.4,257.5 149,256.5 149.4,256.5 150,255.5 150,255.5 150,255.5 150.4,255.5 151,254.5 151.4,254.5 152,253.5 152.4,253.5 153,252.5 153.4,252.5 154,251.5 155,251.5 155,251.5 155.4,251.5 156,250.5 156.4,250.5 157,249.5 157.4,249.5 158,248.5 159.4,248.5 160,247.5 160,247.5 160,247.5 160.4,247.5 161,246.5 161.4,246.5 162,245.5 163.4,245.5 164,244.5 164.4,244.5 165,243.5 165,243.5 165,243.5 166.4,243.5 167,242.5 167.4,242.5 168,241.5 168.4,241.5 169,240.5 170.4,240.5 171,239.5 171,239.5 171,239.5 172.4,239.5 173,238.5 176.4,238.5 177,237.5 180,237.5 180,237.5 180.4,237.5 181,236.5 185.4,236.5 186,235.5 190,235.5 190,235.5 190.4,235.5 191,234.5 193.4,234.5 194,233.5 196.4,233.5 197,232.5 200,232.5 200,232.5 200.4,232.5 201,231.5 204.4,231.5 205,230.5 209.4,230.5 210,229.5 213.4,229.5 214,228.5 215,228.5 215,228.5 218.4,228.5 219,227.5 223.4,227.5 224,226.5 228,226.5 228,226.5 228.4,226.5 229,225.5 234.4,225.5 235,224.5 240,224.5 240,224.5 241.4,224.5 242,223.5 249.4,223.5 250,222.5 252,222.5 252,222.5 258.4,222.5 259,221.5 265,221.5 265,221.5 266.4,221.5 267,220.5 272.4,220.5 273,219.5 278.4,219.5 279,218.5 280,218.5 281,215.5 281,215.5 287,215.5 288,222 288.5,217 289,216.5 305,216.5 306,219.2 306,219.5 311,219.5 311.5,218 312,218.5 322,218.5 322.5,222.5 323,222.5 328,222.5 328.5,218 329,220 329,220.5 365,220.5 365,220.5 365.4,220.5 366,219.5 368.4,219.5 369,218.5 369,218.5 369,218.5 369.4,218.5 370,219.5 371.4,219.5 372,220.5 372,220.5 372,220.5 373.4,220.5 374,221.5 377.4,221.5 378,222.5 381.4,222.5 382,223.5 384.4,223.5 385,224.5 385,224.5 385,224.5 387.4,224.5 388,225.5 390.4,225.5 391,226.5 393.4,226.5 394,227.5 396.4,227.5 397,228.5 398.4,228.5 399,229.5 401,229.5 401,229.5 409.4,229.5 410,230.5 410,230.5 410,230.5 410.4,230.5 411,229.5 412.4,229.5 413,228.5 415,228.5 415,228.5 415.4,228.5 416,227.5 435,227.5 435,227.5 441.4,227.5 442,226.5 445,226.5 445,226.5 446.4,226.5 447,225.5 447.5,225.5 448,225.5 520,225.5 520,225.5 527,225.5 527.5,226.5 529,225.5 529,225.5 717,225.5 717,225.5 739.4,225.5 740,226.5 740,226.5 740,226.5 810,226.5 810,226.5 827.4,226.5 828,227.5 828,227.5 828,227.5 849.4,227.5 850,228.5 850,228.5 850,228.5 862.4,228.5 863,229.5 865,229.5 865,229.5 875.4,229.5 876,230.5 882,230.5 882,230.5 887.4,230.5 888,231.5 899.4,231.5 900,232.5 900,232.5 900,232.5 904.4,232.5 905,233.5 909.4,233.5 910,234.5 910,234.5 910,234.5 917.4,234.5 918,235.5 925.4,235.5 926,236.5 927,236.5 927,236.5 931.4,236.5 932,237.5 936.4,237.5 937,238.5 940,238.5 940,238.5 941.4,238.5 942,239.5 945.4,239.5 946,240.5 949.4,240.5 950,241.5 953.4,241.5 954,242.5 955,242.5 955,242.5 956.4,242.5 957,243.5 960.4,243.5 961,244.5 963.4,244.5 964,245.5 966.4,245.5 967,246.5 967,246.5 967,246.5 971.4,246.5 972,247.5 975.4,247.5 976,248.5 979.4,248.5 980,249.5 980,249.5 980,249.5 987.4,249.5 988,250.5 995.4,250.5 996,251.5 996,251.5 996,251.5 1007.4,251.5 1008,252.5 1010,252.5 1010,252.5 1027.4,252.5 1028,253.5 1042,253.5 1042,253.5 1050.4,253.5 1051,254.5 1070,254.5 1070,254.5 1081.4,254.5 1082,255.5 1110,255.5 1110,255.5 1124.4,255.5 1125,256.5 1174.4,256.5 1175,257.5 1185,257.5 1185,257.5 1246.4,257.5 1247,258.5 1247,258.5 1247,258.5 1285,258.5 1285,258.5 1370,258.5 1370,258.5 1374.4,258.5 1375,257.5 1382,257.5 1382,257.5 1385.4,257.5 1386,258.5 1388.4,258.5 1389,259.5 1391.4,259.5 1392,260.5 1392,260.5 1392,260.5 1445,260.5 1446,257.5 1446,257.5 1449.4,257.5 1450,258.5 1452,258.5 1452,258.5 1539.5,258.5 1540.5,261.3 1541,261.5 1543.4,261.5 1544,260.5 1549,260.5 1549,260.5 1717.4,260.5 1718,261.5 1751,261.5"/>
<polyline fill="none" stroke="#8ecb34" stroke-width="1.2" stroke-linejoin="round" points="3,430.6 3,430.5 5,430.5 5,430.5 7,430.5 7,430.5 9,430.5 9,430.5 11,430.5 11,430.5 13,430.5 13,430.5 15,430.5 15,430.5 17,430.5 17,430.5 19,430.5 19,430.5 21,430.5 21,430.5 23,430.5 23,430.5 25,430.5 25,430.5 27,430.5 27,430.5 29,430.5 29,430.5 31,430.5 31,430.5 33,430.5 33,430.5 35,430.5 35,430.5 37,430.5 37,430.5 39,430.5 39,430.5 41,430.5 41,430.5 43,430.5 43,430.5 45,430.5 45,430.5 47,430.5 47,430.5 49,430.5 49,430.5 51,430.5 51,430.5 53,430.5 53,430.5 55,430.5 55,430.5 57,430.5 57,430.5 59,430.5 59,430.5 61,430.5 61,430.5 63,430.5 63,430.5 65,430.5 65,430.5 67,430.5 67,430.5 69,430.5 69,430.5 71,430.5 71,430.5 73,430.5 73,430.5 75,430.5 75,430.5 77,430.5 77,430.5 79,430.5 79,430.5 81,430.5 81,430.5 83,430.5 83,430.5 85,430.5 85,430.5 87,430.5 87,430.5 89,430.5 89,430.5 91,430.5 91,430.5 93,430.5 93,430.5 95,430.5 95,430.5 97,430.5 97,430.5 99,430.5 99,430.5 101,430.5 101,430.5 103,430.5 103,430.5 105,430.5 105,430.5 107,430.5 107,430.5 109,430.5 109,430.5 111,430.5 111,430.5 113,430.5 113,430.5 115,430.5 115,430.5 117,430.5 117,430.5 119,430.5 119,430.5 121,430.5 121,430.5 123,430.5 123,430.5 125,430.5 125,430.5 127,430.5 127,430.5 129,430.5 129,430.5 131,430.5 131,430.5 133,430.5 133,430.5 135,430.5 135,430.5 137,430.5 137,430.5 139,430.5 139,430.5 141,430.5 141,430.5 143,430.5 143,430.5 145,430.5 145,430.5 147,430.5 147,430.5 149,430.5 149,430.5 151,430.5 151,430.5 153,430.5 153,430.5 155,430.5 155,430.5 157,430.5 157,430.5 159,430.5 159,430.5 161,430.5 161,430.5 163,430.5 163,430.5 165,430.5 165,430.5 167,430.5 167,430.5 169,430.5 169,430.5 171,430.5 171,430.5 173,430.5 173,430.5 175,430.5 175,430.5 177,430.5 177,430.5 179,430.5 179,430.5 181,430.5 181,430.5 183,430.5 183,430.5 185,430.5 185,430.5 187,430.5 187,430.5 189,430.5 189,430.5 191,430.5 191,430.5 193,430.5 193,430.5 195,430.5 195,430.5 197,430.5 197,430.5 199,430.5 199,430.5 201,430.5 201,430.5 203,430.5 203,430.5 205,430.5 205,430.5 207,430.5 207,430.5 209,430.5 209,430.5 211,430.5 211,430.5 213,430.5 213,430.5 215,430.5 215,430.5 217,430.5 217,430.5 219,430.5 219,430.5 221,430.5 221,430.5 223,430.5 223,430.5 225,430.5 225,430.5 227,430.5 227,430.5 229,430.5 229,430.5 231,430.5 231,430.5 233,430.5 233,430.5 235,430.5 235,430.5 237,430.5 237,430.5 239,430.5 239,430.5 241,430.5 241,430.5 243,430.5 243,430.5 245,430.5 245,430.5 247,430.5 247,430.5 249,430.5 249,430.5 251,430.5 251,430.5 253,430.5 253,430.5 255,430.5 255,430.5 257,430.5 257,430.5 259,430.5 259,430.5 261,430.5 261,430.5 263,430.5 263,430.5 265,430.5 265,430.5 267,430.5 267,430.5 269,430.5 269,430.5 271,430.5 271,430.5 273,430.5 273,430.5 275,430.5 275,430.5 277,430.5 277,430.5 279,430.5 279,430.5 281,430.5 281,430.5 283,430.5 283,430.5 285,430.5 285,430.5 287,430.5 287,430.5 289,430.5 289,430.5 291,430.5 291,430.5 293,430.5 293,430.5 295,430.5 295,430.5 297,430.5 297,430.5 299,430.5 299,430.5 301,430.5 301,430.5 303,430.5 303,430.5 305,430.5 305,430.5 307,430.5 307,430.5 309,430.5 309,430.5 311,430.5 311,430.5 313,430.5 313,430.5 315,430.5 315,430.5 317,430.5 317,430.5 319,430.5 319,430.5 321,430.5 321,430.5 323,430.5 323,430.5 325,430.5 325,430.5 327,430.5 327,430.5 329,430.5 329,430.5 331,430.5 331,430.5 333,430.5 333,430.5 335,430.5 335,430.5 337,430.5 337,430.5 339,430.5 339,430.5 341,430.5 341,430.5 343,430.5 343,430.5 345,430.5 345,430.5 347,430.5 347,430.5 349,430.5 349,430.5 351,430.5 351,430.5 351.4,430.5 352,429.5 353,429.5 353,429.5 355,429.5 355,429.5 357,429.5 357,429.5 359,429.5 359,429.5 361,429.5 361,429.5 363,429.5 363,429.5 365,429.5 365,429.5 365.4,429.5 366,428.5 367,428.5 367,428.5 367.4,428.5 368,427.5 369,427.5 369,427.5 370.4,427.5 371,426.5 371,426.5 371,426.5 371.4,426.5 372,425.5 373,425.5 373,425.5 373.4,425.5 374,424.5 374.4,424.5 375,423.5 375,423.5 375,423.5 375.4,423.5 376,422.5 376.4,422.5 377,421.5 377,421.5 377,421.5 377.4,421.5 378,420.5 378.4,420.5 379,419.5 379,419.5 379,419.5 379.4,419.5 380,418.5 380.4,418.5 381,417.5 381,417.5 381,417.5 381.4,417.5 382,416.5 382.4,416.5 383,415.5 383,415.5 383,415.5 383.4,415.5 384,414.5 384.4,414.5 385,412.5 385,412.5 385,412.5 385.4,412.5 386,411.5 386.4,411.5 387,410.5 387,410.5 389,408.1 391,405.57 393,403.03 395,400.5 395,400.5 395.4,400.5 396,399.5 397,399.5 397,399.5 397.4,399.5 398,398.5 399,398.5 399,398.5 399.4,398.5 400,397.5 401,397.5 401,397.5 403,397.5 403,397.5 405,397.5 405,397.5 407,397.5 407,397.5 407.4,397.5 408,396.5 409,396.5 409,396.5 411,396.5 411,396.5 413,396.5 413,396.5 415,396.5 415,396.5 417,396.5 417,396.5 419,396.5 419,396.5 421,396.5 421,396.5 423,396.5 423,396.5 425,396.5 425,396.5 427,396.5 427,396.5 429,396.5 429,396.5 431,396.5 431,396.5 433,396.5 433,396.5 435,396.5 435,396.5 437,396.5 437,396.5 439,396.5 439,396.5 441,396.5 441,396.5 443,396.5 443,396.5 445,396.5 445,396.5 447,396.5 447,396.5 449,396.5 449,396.5 451,396.5 451,396.5 453,396.5 453,396.5 455,396.5 455,396.5 457,396.5 457,396.5 459,396.5 459,396.5 461,396.5 461,396.5 463,396.5 463,396.5 465,396.5 465,396.5 467,396.5 467,396.5 469,396.5 469,396.5 471,396.5 471,396.5 473,396.5 473,396.5 475,396.5 475,396.5 477,396.5 477,396.5 479,396.5 479,396.5 481,396.5 481,396.5 483,396.5 483,396.5 485,396.5 485,396.5 487,396.5 487,396.5 489,396.5 489,396.5 491,396.5 491,396.5 493,396.5 493,396.5 495,396.5 495,396.5 497,396.5 497,396.5 499,396.5 499,396.5 501,396.5 501,396.5 503,396.5 503,396.5 505,396.5 505,396.5 507,396.5 507,396.5 509,396.5 509,396.5 511,396.5 511,396.5 513,396.5 513,396.5 515,396.5 515,396.5 517,396.5 517,396.5 519,396.5 519,396.5 521,396.5 521,396.5 523,396.5 523,396.5 525,396.5 525,396.5 527,396.5 527,396.5 529,396.5 529,396.5 531,396.5 531,396.5 533,396.5 533,396.5 535,396.5 535,396.5 537,396.5 537,396.5 539,396.5 539,396.5 541,396.5 541,396.5 543,396.5 543,396.5 545,396.5 545,396.5 547,396.5 547,396.5 549,396.5 549,396.5 551,396.5 551,396.5 553,396.5 553,396.5 555,396.5 555,396.5 557,396.5 557,396.5 559,396.5 559,396.5 561,396.5 561,396.5 563,396.5 563,396.5 565,396.5 565,396.5 567,396.5 567,396.5 569,396.5 569,396.5 571,396.5 571,396.5 573,396.5 573,396.5 575,396.5 575,396.5 577,396.5 577,396.5 579,396.5 579,396.5 581,396.5 581,396.5 583,396.5 583,396.5 585,396.5 585,396.5 587,396.5 587,396.5 589,396.5 589,396.5 591,396.5 591,396.5 593,396.5 593,396.5 595,396.5 595,396.5 597,396.5 597,396.5 599,396.5 599,396.5 601,396.5 601,396.5 603,396.5 603,396.5 605,396.5 605,396.5 607,396.5 607,396.5 609,396.5 609,396.5 611,396.5 611,396.5 613,396.5 613,396.5 615,396.5 615,396.5 617,396.5 617,396.5 619,396.5 619,396.5 621,396.5 621,396.5 621.4,396.5 622,397.5 623,397.5 623,397.5 625,397.5 625,397.5 627,397.5 627,397.5 629,397.5 629,397.5 631,397.5 631,397.5 633,397.5 633,397.5 635,397.5 635,397.5 637,397.5 637,397.5 639,397.5 639,397.5 641,397.5 641,397.5 643,397.5 643,397.5 645,397.5 645,397.5 647,397.5 647,397.5 649,397.5 649,397.5 651,397.5 651,397.5 653,397.5 653,397.5 655,397.5 655,397.5 657,397.5 657,397.5 659,397.5 659,397.5 661,397.5 661,397.5 663,397.5 663,397.5 665,397.5 665,397.5 667,397.5 667,397.5 669,397.5 669,397.5 671,397.5 671,397.5 673,397.5 673,397.5 675,397.5 675,397.5 677,397.5 677,397.5 679,397.5 679,397.5 681,397.5 681,397.5 681.4,397.5 682,398.5 683,398.5 683,398.5 685,398.5 685,398.5 687,398.5 687,398.5 689,398.5 689,398.5 691,398.5 691,398.5 693,398.5 693,398.5 695,398.5 695,398.5 697,398.5 697,398.5 699,398.5 699,398.5 701,398.5 701,398.5 703,398.5 703,398.5 705,398.5 705,398.5 707,398.5 707,398.5 709,398.5 709,398.5 711,398.5 711,398.5 713,398.5 713,398.5 715,398.5 715,398.5 717,398.5 717,398.5 719,398.5 719,398.5 721,398.5 721,398.5 723,398.5 723,398.5 725,398.5 725,398.5 727,398.5 727,398.5 729,398.5 729,398.5 731,398.5 731,398.5 732.4,398.5 733,399.5 733,399.5 733,399.5 735,399.5 735,399.5 737,399.5 737,399.5 739,399.5 739,399.5 741,399.5 741,399.5 743,399.5 743,399.5 745,399.5 745,399.5 747,399.5 747,399.5 749,399.5 749,399.5 751,399.5 751,399.5 753,399.5 753,399.5 755,399.5 755,399.5 757,399.5 757,399.5 759,399.5 759,399.5 761,399.5 761,399.5 763,399.5 763,399.5 765,399.5 765,399.5 767,399.5 767,399.5 769,399.5 769,399.5 771,399.5 771,399.5 772.4,399.5 773,400.5 773,400.5 773,400.5 775,400.5 775,400.5 777,400.5 777,400.5 779,400.5 779,400.5 781,400.5 781,400.5 783,400.5 783,400.5 785,400.5 785,400.5 787,400.5 787,400.5 789,400.5 789,400.5 791,400.5 791,400.5 793,400.5 793,400.5 795,400.5 795,400.5 797,400.5 797,400.5 799,400.5 799,400.5 801,400.5 801,400.5 803,400.5 803,400.5 805,400.5 805,400.5 807,400.5 807,400.5 809,400.5 809,400.5 811,400.5 811,400.5 811.4,400.5 812,401.5 813,401.5 813,401.5 815,401.5 815,401.5 817,401.5 817,401.5 819,401.5 819,401.5 821,401.5 821,401.5 823,401.5 823,401.5 825,401.5 825,401.5 827,401.5 827,401.5 829,401.5 829,401.5 831,401.5 831,401.5 831.4,401.5 832,402.5 833,402.5 833,402.5 835,402.5 835,402.5 837,402.5 837,402.5 839,402.5 839,402.5 841,402.5 841,402.5 843,402.5 843,402.5 845,402.5 845,402.5 847,402.5 847,402.5 849,402.5 849,402.5 850.4,402.5 851,403.5 851,403.5 851,403.5 853,403.5 853,403.5 855,403.5 855,403.5 857,403.5 857,403.5 859,403.5 859,403.5 861,403.5 861,403.5 863,403.5 863,403.5 865,403.5 865,403.5 867,403.5 867,403.5 869,403.5 869,403.5 869.4,403.5 870,404.5 871,404.5 871,404.5 873,404.5 873,404.5 875,404.5 875,404.5 877,404.5 877,404.5 879,404.5 879,404.5 881,404.5 881,404.5 881.4,404.5 882,405.5 883,405.5 883,405.5 885,405.5 885,405.5 887,405.5 887,405.5 889,405.5 889,405.5 891,405.5 891,405.5 891.4,405.5 892,406.5 893,406.5 893,406.5 895,406.5 895,406.5 897,406.5 897,406.5 898.4,406.5 899,407.5 899,407.5 899,407.5 901,407.5 901,407.5 903,407.5 903,407.5 904.4,407.5 905,408.5 905,408.5 905,408.5 907,408.5 907,408.5 909,408.5 909,408.5 911,408.5 911,408.5 912.4,408.5 913,409.5 913,409.5 913,409.5 915,409.5 915,409.5 917,409.5 917,409.5 919,409.5 919,409.5 919.4,409.5 920,410.5 921,410.5 921,410.5 923,410.5 923,410.5 923.4,410.5 924,411.5 925,411.5 925,411.5 927,411.5 927,411.5 927.4,411.5 928,412.5 929,412.5 929,412.5 931,412.5 931,412.5 931.4,412.5 932,413.5 933,413.5 933,413.5 934.4,413.5 935,414.5 935,414.5 935,414.5 937,414.5 937,414.5 937.4,414.5 938,415.5 939,415.5 939,415.5 940.4,415.5 941,416.5 941,416.5 941,416.5 943,416.5 943,416.5 943.4,416.5 944,417.5 945,417.5 945,417.5 946.4,417.5 947,418.5 947,418.5 947,418.5 949,418.5 949,418.5 949.4,418.5 950,419.5 951,419.5 951,419.5 952.4,419.5 953,420.5 953,420.5 953,420.5 955,420.5 955,420.5 956.4,420.5 957,421.5 957,421.5 957,421.5 959,421.5 959,421.5 959.4,421.5 960,422.5 961,422.5 961,422.5 963,422.5 963,422.5 963.4,422.5 964,423.5 965,423.5 965,423.5 966.4,423.5 967,424.5 967,424.5 967,424.5 969,424.5 969,424.5 971,424.5 971,424.5 973,424.5 973,424.5 973.4,424.5 974,425.5 975,425.5 975,425.5 977,425.5 977,425.5 979,425.5 979,425.5 980.4,425.5 981,426.5 981,426.5 981,426.5 983,426.5 983,426.5 985,426.5 985,426.5 987,426.5 987,426.5 987.4,426.5 988,427.5 989,427.5 989,427.5 991,427.5 991,427.5 993,427.5 993,427.5 995,427.5 995,427.5 997,427.5 997,427.5 997.4,427.5 998,428.5 999,428.5 999,428.5 1001,428.5 1001,428.5 1003,428.5 1003,428.5 1005,428.5 1005,428.5 1007,428.5 1007,428.5 1009,428.5 1009,428.5 1010.4,428.5 1011,429.5 1011,429.5 1011,429.5 1013,429.5 1013,429.5 1015,429.5 1015,429.5 1017,429.5 1017,429.5 1019,429.5 1019,429.5 1021,429.5 1021,429.5 1023,429.5 1023,429.5 1025,429.5 1025,429.5 1027,429.5 1027,429.5 1029,429.5 1029,429.5 1031,429.5 1031,429.5 1033,429.5 1033,429.5 1035,429.5 1035,429.5 1037,429.5 1037,429.5 1039,429.5 1039,429.5 1041,429.5 1041,429.5 1043,429.5 1043,429.5 1045,429.5 1045,429.5 1047,429.5 1047,429.5 1049,429.5 1049,429.5 1051,429.5 1051,429.5 1053,429.5 1053,429.5 1055,429.5 1055,429.5 1056.4,429.5 1057,430.5 1057,430.5 1057,430.5 1059,430.5 1059,430.5 1061,430.5 1061,430.5 1063,430.5 1063,430.5 1065,430.5 1065,430.5 1067,430.5 1067,430.5 1069,430.5 1069,430.5 1071,430.5 1071,430.5 1073,430.5 1073,430.5 1075,430.5 1075,430.5 1077,430.5 1077,430.5 1079,430.5 1079,430.5 1081,430.5 1081,430.5 1083,430.5 1083,430.5 1085,430.5 1085,430.5 1087,430.5 1087,430.5 1089,430.5 1089,430.5 1091,430.5 1091,430.5 1093,430.5 1093,430.5 1095,430.5 1095,430.5 1097,430.5 1097,430.5 1099,430.5 1099,430.5 1101,430.5 1101,430.5 1103,430.5 1103,430.5 1105,430.5 1105,430.5 1107,430.5 1107,430.5 1109,430.5 1109,430.5 1111,430.5 1111,430.5 1113,430.5 1113,430.5 1115,430.5 1115,430.5 1117,430.5 1117,430.5 1119,430.5 1119,430.5 1121,430.5 1121,430.5 1123,430.5 1123,430.5 1125,430.5 1125,430.5 1127,430.5 1127,430.5 1129,430.5 1129,430.5 1131,430.5 1131,430.5 1133,430.5 1133,430.5 1135,430.5 1135,430.5 1137,430.5 1137,430.5 1139,430.5 1139,430.5 1141,430.5 1141,430.5 1143,430.5 1143,430.5 1145,430.5 1145,430.5 1147,430.5 1147,430.5 1149,430.5 1149,430.5 1151,430.5 1151,430.5 1153,430.5 1153,430.5 1155,430.5 1155,430.5 1157,430.5 1157,430.5 1159,430.5 1159,430.5 1161,430.5 1161,430.5 1163,430.5 1163,430.5 1165,430.5 1165,430.5 1167,430.5 1167,430.5 1169,430.5 1169,430.5 1171,430.5 1171,430.5 1173,430.5 1173,430.5 1175,430.5 1175,430.5 1177,430.5 1177,430.5 1179,430.5 1179,430.5 1181,430.5 1181,430.5 1183,430.5 1183,430.5 1185,430.5 1185,430.5 1187,430.5 1187,430.5 1189,430.5 1189,430.5 1191,430.5 1191,430.5 1193,430.5 1193,430.5 1195,430.5 1195,430.5 1197,430.5 1197,430.5 1199,430.5 1199,430.5 1201,430.5 1201,430.5 1203,430.5 1203,430.5 1205,430.5 1205,430.5 1207,430.5 1207,430.5 1209,430.5 1209,430.5 1211,430.5 1211,430.5 1213,430.5 1213,430.5 1215,430.5 1215,430.5 1217,430.5 1217,430.5 1219,430.5 1219,430.5 1221,430.5 1221,430.5 1223,430.5 1223,430.5 1225,430.5 1225,430.5 1227,430.5 1227,430.5 1229,430.5 1229,430.5 1231,430.5 1231,430.5 1233,430.5 1233,430.5 1235,430.5 1235,430.5 1237,430.5 1237,430.5 1239,430.5 1239,430.5 1241,430.5 1241,430.5 1243,430.5 1243,430.5 1245,430.5 1245,430.5 1247,430.5 1247,430.5 1249,430.5 1249,430.5 1251,430.5 1251,430.5 1253,430.5 1253,430.5 1255,430.5 1255,430.5 1257,430.5 1257,430.5 1259,430.5 1259,430.5 1261,430.5 1261,430.5 1263,430.5 1263,430.5 1265,430.5 1265,430.5 1267,430.5 1267,430.5 1269,430.5 1269,430.5 1271,430.5 1271,430.5 1273,430.5 1273,430.5 1275,430.5 1275,430.5 1277,430.5 1277,430.5 1279,430.5 1279,430.5 1281,430.5 1281,430.5 1283,430.5 1283,430.5 1285,430.5 1285,430.5 1287,430.5 1287,430.5 1289,430.5 1289,430.5 1291,430.5 1291,430.5 1293,430.5 1293,430.5 1295,430.5 1295,430.5 1297,430.5 1297,430.5 1299,430.5 1299,430.5 1301,430.5 1301,430.5 1303,430.5 1303,430.5 1305,430.5 1305,430.5 1307,430.5 1307,430.5 1309,430.5 1309,430.5 1311,430.5 1311,430.5 1313,430.5 1313,430.5 1315,430.5 1315,430.5 1317,430.5 1317,430.5 1319,430.5 1319,430.5 1321,430.5 1321,430.5 1323,430.5 1323,430.5 1325,430.5 1325,430.5 1327,430.5 1327,430.5 1329,430.5 1329,430.5 1331,430.5 1331,430.5 1333,430.5 1333,430.5 1335,430.5 1335,430.5 1337,430.5 1337,430.5 1339,430.5 1339,430.5 1341,430.5 1341,430.5 1343,430.5 1343,430.5 1345,430.5 1345,430.5 1347,430.5 1347,430.5 1349,430.5 1349,430.5 1351,430.5 1351,430.5 1353,430.5 1353,430.5 1355,430.5 1355,430.5 1357,430.5 1357,430.5 1359,430.5 1359,430.5 1361,430.5 1361,430.5 1363,430.5 1363,430.5 1365,430.5 1365,430.5 1367,430.5 1367,430.5 1369,430.5 1369,430.5 1371,430.5 1371,430.5 1373,430.5 1373,430.5 1375,430.5 1375,430.5 1377,430.5 1377,430.5 1379,430.5 1379,430.5 1381,430.5 1381,430.5 1383,430.5 1383,430.5 1385,430.5 1385,430.5 1387,430.5 1387,430.5 1389,430.5 1389,430.5 1391,430.5 1391,430.5 1393,430.5 1393,430.5 1395,430.5 1395,430.5 1397,430.5 1397,430.5 1399,430.5 1399,430.5 1401,430.5 1401,430.5 1403,430.5 1403,430.5 1405,430.5 1405,430.5 1407,430.5 1407,430.5 1409,430.5 1409,430.5 1411,430.5 1411,430.5 1413,430.5 1413,430.5 1415,430.5 1415,430.5 1417,430.5 1417,430.5 1419,430.5 1419,430.5 1421,430.5 1421,430.5 1423,430.5 1423,430.5 1425,430.5 1425,430.5 1427,430.5 1427,430.5 1429,430.5 1429,430.5 1431,430.5 1431,430.5 1433,430.5 1433,430.5 1435,430.5 1435,430.5 1437,430.5 1437,430.5 1439,430.5 1439,430.5 1441,430.5 1441,430.5 1443,430.5 1443,430.5 1445,430.5 1445,430.5 1447,430.5 1447,430.5 1449,430.5 1449,430.5 1451,430.5 1451,430.5 1453,430.5 1453,430.5 1455,430.5 1455,430.5 1457,430.5 1457,430.5 1459,430.5 1459,430.5 1461,430.5 1461,430.5 1463,430.5 1463,430.5 1465,430.5 1465,430.5 1467,430.5 1467,430.5 1469,430.5 1469,430.5 1471,430.5 1471,430.5 1473,430.5 1473,430.5 1475,430.5 1475,430.5 1477,430.5 1477,430.5 1479,430.5 1479,430.5 1481,430.5 1481,430.5 1483,430.5 1483,430.5 1485,430.5 1485,430.5 1487,430.5 1487,430.5 1489,430.5 1489,430.5 1491,430.5 1491,430.5 1493,430.5 1493,430.5 1495,430.5 1495,430.5 1497,430.5 1497,430.5 1499,430.5 1499,430.5 1501,430.5 1501,430.5 1503,430.5 1503,430.5 1505,430.5 1505,430.5 1507,430.5 1507,430.5 1509,430.5 1509,430.5 1511,430.5 1511,430.5 1513,430.5 1513,430.5 1515,430.5 1515,430.5 1517,430.5 1517,430.5 1519,430.5 1519,430.5 1521,430.5 1521,430.5 1523,430.5 1523,430.5 1525,430.5 1525,430.5 1527,430.5 1527,430.5 1529,430.5 1529,430.5 1531,430.5 1531,430.5 1533,430.5 1533,430.5 1535,430.5 1535,430.5 1537,430.5 1537,430.5 1539,430.5 1539,430.5 1541,430.5 1541,430.5 1543,430.5 1543,430.5 1545,430.5 1545,430.5 1547,430.5 1547,430.5 1549,430.5 1549,430.5 1551,430.5 1551,430.5 1553,430.5 1553,430.5 1555,430.5 1555,430.5 1557,430.5 1557,430.5 1559,430.5 1559,430.5 1561,430.5 1561,430.5 1563,430.5 1563,430.5 1565,430.5 1565,430.5 1567,430.5 1567,430.5 1569,430.5 1569,430.5 1571,430.5 1571,430.5 1573,430.5 1573,430.5 1575,430.5 1575,430.5 1577,430.5 1577,430.5 1579,430.5 1579,430.5 1581,430.5 1581,430.5 1583,430.5 1583,430.5 1585,430.5 1585,430.5 1587,430.5 1587,430.5 1589,430.5 1589,430.5 1591,430.5 1591,430.5 1593,430.5 1593,430.5 1595,430.5 1595,430.5 1597,430.5 1597,430.5 1599,430.5 1599,430.5 1601,430.5 1601,430.5 1603,430.5 1603,430.5 1605,430.5 1605,430.5 1607,430.5 1607,430.5 1609,430.5 1609,430.5 1611,430.5 1611,430.5 1613,430.5 1613,430.5 1615,430.5 1615,430.5 1617,430.5 1617,430.5 1619,430.5 1619,430.5 1621,430.5 1621,430.5 1623,430.5 1623,430.5 1625,430.5 1625,430.5 1627,430.5 1627,430.5 1629,430.5 1629,430.5 1631,430.5 1631,430.5 1633,430.5 1633,430.5 1635,430.5 1635,430.5 1637,430.5 1637,430.5 1639,430.5 1639,430.5 1641,430.5 1641,430.5 1643,430.5 1643,430.5 1645,430.5 1645,430.5 1647,430.5 1647,430.5 1649,430.5 1649,430.5 1651,430.5 1651,430.5 1653,430.5 1653,430.5 1655,430.5 1655,430.5 1657,430.5 1657,430.5 1659,430.5 1659,430.5 1661,430.5 1661,430.5 1663,430.5 1663,430.5 1665,430.5 1665,430.5 1667,430.5 1667,430.5 1669,430.5 1669,430.5 1671,430.5 1671,430.5 1673,430.5 1673,430.5 1675,430.5 1675,430.5 1677,430.5 1677,430.5 1679,430.5 1679,430.5 1681,430.5 1681,430.5 1683,430.5 1683,430.5 1685,430.5 1685,430.5 1687,430.5 1687,430.5 1689,430.5 1689,430.5 1691,430.5 1691,430.5 1693,430.5 1693,430.5 1695,430.5 1695,430.5 1697,430.5 1697,430.5 1699,430.5 1699,430.5 1701,430.5 1701,430.5 1703,430.5 1703,430.5 1705,430.5 1705,430.5 1707,430.5 1707,430.5 1709,430.5 1709,430.5 1711,430.5 1711,430.5 1713,430.5 1713,430.5 1715,430.5 1715,430.5 1717,430.5 1717,430.5 1719,430.5 1719,430.5 1721,430.5 1721,430.5 1723,430.5 1723,430.5 1725,430.5 1725,430.5 1727,430.5 1727,430.5 1729,430.5 1729,430.5 1731,430.5 1731,430.5 1733,430.5 1733,430.5 1735,430.5 1735,430.5 1737,430.5 1737,430.5 1739,430.5 1739,430.5 1741,430.5 1741,430.5 1743,430.5 1743,430.5 1745,430.5 1745,430.5 1747,430.5 1747,430.5 1749,430.5 1749,430.5 1751,430.5"/>
<polyline fill="none" stroke="#f39325" stroke-width="1.35" stroke-linejoin="round" points="3,735.3 3,735.5 42,735.5 42,735.5 55,735.5 55,734 55,734.5 55.4,734.5 56,733.5 58,733.5 58,733.5 60.4,733.5 61,732.5 61,732.5 61,732.5 64,732.5 64,732.5 64.4,732.5 65,731.5 67,731.5 67,731.5 69.4,731.5 70,730.5 70,730.5 70,730.5 73,730.5 73,730.5 73.4,730.5 74,729.5 76,729.5 76,729.5 77.4,729.5 78,728.5 79,728.5 79,728.5 82,728.5 82,728.5 82.4,728.5 83,727.5 85,727.5 85,727.5 86.4,727.5 87,726.5 88,726.5 88,726.5 90.4,726.5 91,725.5 91,725.5 91,725.5 94,725.5 94,725.5 94.4,725.5 95,724.5 97,724.5 97,724.5 98.4,724.5 99,723.5 100,723.5 100,723.5 102.4,723.5 103,722.5 103,722.5 103,722.5 106,722.5 106,722.5 106.4,722.5 107,721.5 109,721.5 109,721.5 110.4,721.5 111,720.5 112,720.5 112,720.5 114.4,720.5 115,719.5 115,719.5 115,719.5 118,719.5 118,719.5 118.4,719.5 119,718.5 121,718.5 121,718.5 121.4,718.5 122,717.5 124,717.5 124,717.5 125.4,717.5 126,716.5 127,716.5 127,716.5 129.4,716.5 130,715.5 130,715.5 130,715.5 133,715.5 133,715.5 133.4,715.5 134,714.5 136,714.5 136,714.5 136.4,714.5 137,713.5 139,713.5 139,713.5 140.4,713.5 141,712.5 142,712.5 142,712.5 144.4,712.5 145,711.5 145,711.5 145,711.5 148,711.5 148,711.5 148.4,711.5 149,710.5 151,710.5 151,710.5 151.4,710.5 152,709.5 154,709.5 154,709.5 155.4,709.5 156,708.5 157,708.5 157,708.5 159.4,708.5 160,707.5 160,707.5 160,707.5 162.4,707.5 163,706.5 163,706.5 163,706.5 166,706.5 166,706.5 166.4,706.5 167,705.5 169,705.5 169,705.5 170.4,705.5 171,704.5 172,704.5 172,704.5 173.4,704.5 174,703.5 175,703.5 175,703.5 177.4,703.5 178,702.5 178,702.5 178,702.5 181,702.5 181,702.5 181.4,702.5 182,701.5 184,701.5 184,701.5 185.4,701.5 186,700.5 187,700.5 187,700.5 188.4,700.5 189,699.5 190,699.5 190,699.5 192.4,699.5 193,698.5 193,698.5 193,698.5 196,698.5 196,698.5 196.4,698.5 197,697.5 199,697.5 199,697.5 200.4,697.5 201,696.5 202,696.5 202,696.5 204.4,696.5 205,695.5 205,695.5 205,695.5 208,695.5 208,695.5 208.4,695.5 209,694.5 211,694.5 211,694.5 211.4,694.5 212,693.5 214,693.5 214,693.5 215.4,693.5 216,692.5 217,692.5 217,692.5 219.4,692.5 220,691.5 220,691.5 220,691.5 223,691.5 223,691.5 224.4,691.5 225,690.5 226,690.5 226,690.5 228.4,690.5 229,689.5 229,689.5 229,689.5 232,689.5 232,689.5 232.4,689.5 233,688.5 235,688.5 235,688.5 236.4,688.5 237,687.5 238,687.5 238,687.5 240.4,687.5 241,686.5 241,686.5 241,686.5 244,686.5 244,686.5 244.4,686.5 245,685.5 247,685.5 247,685.5 249.4,685.5 250,684.5 250,684.5 250,684.5 253,684.5 253,684.5 253.4,684.5 254,683.5 256,683.5 256,683.5 257.4,683.5 258,682.5 259,682.5 259,682.5 262,682.5 262,682.5 262.4,682.5 263,681.5 265,681.5 265,681.5 266.4,681.5 267,680.5 268,680.5 268,680.5 270.4,680.5 271,679.5 271,679.5 271,679.5 274,679.5 274,679.5 275.4,679.5 276,678.5 277,678.5 277,678.5 279.4,678.5 280,677.5 280,677.5 280,677.5 283,677.5 283,677.5 284.4,677.5 285,676.5 286,676.5 286,676.5 288.4,676.5 289,675.5 289,675.5 289,675.5 292,675.5 292,675.5 293.4,675.5 294,674.5 295,674.5 295,674.5 297.4,674.5 298,673.5 298,673.5 298,673.5 301,673.5 301,673.5 302.4,673.5 303,672.5 304,672.5 304,672.5 306.4,672.5 307,671.5 307,671.5 307,671.5 310,671.5 310,671.5 311.4,671.5 312,670.5 313,670.5 313,670.5 315.4,670.5 316,669.5 316,669.5 316,669.5 319,669.5 319,669.5 320.4,669.5 321,668.5 322,668.5 322,668.5 324.4,668.5 325,667.5 325,667.5 325,667.5 328,667.5 328,667.5 329.4,667.5 330,666.5 331,666.5 331,666.5 333.4,666.5 334,665.5 334,665.5 334,665.5 337,665.5 337,665.5 338.4,665.5 339,664.5 340,664.5 340,664.5 342.4,664.5 343,663.5 343,663.5 343,663.5 346,663.5 346,663.5 347.4,663.5 348,662.5 349,662.5 349,662.5 351.4,662.5 352,661.5 352,661.5 352,661.5 355,661.5 355,661.5 356.4,661.5 357,660.5 358,660.5 358,660.5 361,660.5 361,660.5 361.4,660.5 362,659.5 364,659.5 364,659.5 365.4,659.5 366,658.5 367,658.5 367,658.5 370,658.5 370,658.5 370.4,658.5 371,657.5 373,657.5 373,657.5 374.4,657.5 375,656.5 376,656.5 376,656.5 379,656.5 379,656.5 379.4,656.5 380,655.5 382,655.5 382,655.5 384.4,655.5 385,654.5 385,654.5 385,654.5 388,654.5 388,654.5 389.4,654.5 390,653.5 391,653.5 391,653.5 393.4,653.5 394,652.5 394,652.5 394,652.5 397,652.5 397,652.5 398.4,652.5 399,651.5 400,651.5 400,651.5 403,651.5 403,651.5 403.4,651.5 404,650.5 406,650.5 406,650.5 408.4,650.5 409,649.5 409,649.5 409,649.5 412,649.5 412,649.5 413.4,649.5 414,648.5 415,648.5 415,648.5 418,648.5 418,648.5 418.4,648.5 419,647.5 421,647.5 421,647.5 423.4,647.5 424,646.5 424,646.5 424,646.5 427,646.5 427,646.5 428.4,646.5 429,645.5 430,645.5 430,645.5 433,645.5 433,645.5 433.4,645.5 434,644.5 436,644.5 436,644.5 438.4,644.5 439,643.5 439,643.5 439,643.5 442,643.5 442,643.5 444.4,643.5 445,642.5 445,642.5 445,642.5 448,642.5 448,642.5 449.4,642.5 450,641.5 451,641.5 451,641.5 454,641.5 454,641.5 454.4,641.5 455,640.5 457,640.5 457,640.5 459.4,640.5 460,639.5 460,639.5 460,639.5 463,639.5 463,639.5 464.4,639.5 465,638.5 466,638.5 466,638.5 469,638.5 469,638.5 469.4,638.5 470,637.5 472,637.5 472,637.5 475,637.5 475,637.5 475.4,637.5 476,636.5 478,636.5 478,636.5 480.4,636.5 481,635.5 481,635.5 481,635.5 484,635.5 484,635.5 485.4,635.5 486,634.5 487,634.5 487,634.5 490,634.5 490,634.5 491.4,634.5 492,633.5 493,633.5 493,633.5 496,633.5 496,633.5 496.4,633.5 497,632.5 499,632.5 499,632.5 502,632.5 502,632.5 502.4,632.5 503,631.5 505,631.5 505,631.5 507.4,631.5 508,630.5 508,630.5 508,630.5 511,630.5 511,630.5 512.4,630.5 513,629.5 514,629.5 514,629.5 517,629.5 517,629.5 518.4,629.5 519,628.5 520,628.5 520,628.5 523,628.5 523,628.5 523.4,628.5 524,627.5 526,627.5 526,627.5 529,627.5 529,627.5 529.4,627.5 530,626.5 532,626.5 532,626.5 535,626.5 535,626.5 535.4,626.5 536,625.5 538,625.5 538,625.5 540.4,625.5 541,624.5 541,624.5 541,624.5 544,624.5 544,624.5 546.4,624.5 547,623.5 547,623.5 547,623.5 550,623.5 550,623.5 552.4,623.5 553,622.5 553,622.5 553,622.5 556,622.5 556,622.5 557.4,622.5 558,621.5 559,621.5 559,621.5 562,621.5 562,621.5 563.4,621.5 564,620.5 565,620.5 565,620.5 568,620.5 568,620.5 569.4,620.5 570,619.5 571,619.5 571,619.5 574,619.5 574,619.5 575.4,619.5 576,618.5 577,618.5 577,618.5 580,618.5 580,618.5 581.4,618.5 582,617.5 583,617.5 583,617.5 586,617.5 586,617.5 587.4,617.5 588,616.5 589,616.5 589,616.5 592,616.5 592,616.5 593.4,616.5 594,615.5 595,615.5 595,615.5 598,615.5 598,615.5 598.4,615.5 599,614.5 601,614.5 601,614.5 604,614.5 604,614.5 604.4,614.5 605,613.5 607,613.5 607,613.5 610,613.5 610,613.5 610.4,613.5 611,612.5 613,612.5 613,612.5 616,612.5 616,612.5 616.4,612.5 617,611.5 619,611.5 619,611.5 622,611.5 622,611.5 623.4,611.5 624,610.5 625,610.5 625,610.5 628,610.5 628,610.5 629.4,610.5 630,609.5 631,609.5 631,609.5 634,609.5 634,609.5 635.4,609.5 636,608.5 637,608.5 637,608.5 640,608.5 640,608.5 641.4,608.5 642,607.5 643,607.5 643,607.5 646,607.5 646,607.5 647.4,607.5 648,606.5 649,606.5 649,606.5 652,606.5 652,606.5 653.4,606.5 654,605.5 655,605.5 655,605.5 658,605.5 658,605.5 659.4,605.5 660,604.5 661,604.5 661,604.5 664,604.5 664,604.5 666.4,604.5 667,603.5 667,603.5 667,603.5 670,603.5 670,603.5 672.4,603.5 673,602.5 673,602.5 673,602.5 676,602.5 676,602.5 679,602.5 679,602.5 679.4,602.5 680,601.5 682,601.5 682,601.5 685,601.5 685,601.5 685.4,601.5 686,600.5 688,600.5 688,600.5 691,600.5 691,600.5 692.4,600.5 693,599.5 694,599.5 694,599.5 697,599.5 697,599.5 698.4,599.5 699,598.5 700,598.5 700,598.5 703,598.5 703,598.5 705.4,598.5 706,597.5 706,597.5 706,597.5 709,597.5 709,597.5 712,597.5 712,597.5 712.4,597.5 713,596.5 715,596.5 715,596.5 718,596.5 718,596.5 719.4,596.5 720,595.5 721,595.5 721,595.5 724,595.5 724,595.5 726.4,595.5 727,594.5 727,594.5 727,594.5 730,594.5 730,594.5 733,594.5 733,594.5 733.4,594.5 734,593.5 736,593.5 736,593.5 739,593.5 739,593.5 740.4,593.5 741,592.5 742,592.5 742,592.5 745,592.5 745,592.5 747.4,592.5 748,591.5 748,591.5 748,591.5 751,591.5 751,591.5 754,591.5 754,591.5 755.4,591.5 756,590.5 757,590.5 757,590.5 760,590.5 760,590.5 762.4,590.5 763,589.5 763,589.5 763,589.5 766,589.5 766,589.5 769,589.5 769,589.5 770.4,589.5 771,588.5 772,588.5 772,588.5 775,588.5 775,588.5 777.4,588.5 778,587.5 778,587.5 778,587.5 781,587.5 781,587.5 784,587.5 784,587.5 785.4,587.5 786,586.5 787,586.5 787,586.5 790,586.5 790,586.5 793,586.5 793,586.5 793.4,586.5 794,585.5 796,585.5 796,585.5 799,585.5 799,585.5 800.4,585.5 801,584.5 802,584.5 802,584.5 805,584.5 805,584.5 808,584.5 808,584.5 808.4,584.5 809,583.5 811,583.5 811,583.5 814,583.5 814,583.5 816.4,583.5 817,582.5 817,582.5 817,582.5 820,582.5 820,582.5 823,582.5 823,582.5 825.4,582.5 826,581.5 826,581.5 826,581.5 829,581.5 829,581.5 832,581.5 832,581.5 833.4,581.5 834,580.5 835,580.5 835,580.5 838,580.5 838,580.5 841,580.5 841,580.5 841.4,580.5 842,579.5 844,579.5 844,579.5 847,579.5 847,579.5 850,579.5 850,579.5 850.4,579.5 851,578.5 853,578.5 853,578.5 856,578.5 856,578.5 858.4,578.5 859,577.5 859,577.5 859,577.5 862,577.5 862,577.5 865,577.5 865,577.5 867.4,577.5 868,576.5 868,576.5 868,576.5 871,576.5 871,576.5 874,576.5 874,576.5 876.4,576.5 877,575.5 877,575.5 877,575.5 880,575.5 880,575.5 883,575.5 883,575.5 885.4,575.5 886,574.5 886,574.5 886,574.5 889,574.5 889,574.5 892,574.5 892,574.5 895,574.5 895,574.5 895.4,574.5 896,573.5 898,573.5 898,573.5 901,573.5 901,573.5 904,573.5 904,573.5 905.4,573.5 906,572.5 907,572.5 907,572.5 910,572.5 910,572.5 913,572.5 913,572.5 915.4,572.5 916,571.5 916,571.5 916,571.5 919,571.5 919,571.5 922,571.5 922,571.5 925,571.5 925,571.5 926.4,571.5 927,570.5 928,570.5 928,570.5 931,570.5 931,570.5 934,570.5 934,570.5 937,570.5 937,570.5 937.4,570.5 938,569.5 940,569.5 940,569.5 943,569.5 943,569.5 946,569.5 946,569.5 948.4,569.5 949,568.5 949,568.5 949,568.5 952,568.5 952,568.5 955,568.5 955,568.5 958,568.5 958,568.5 960.4,568.5 961,567.5 961,567.5 961,567.5 964,567.5 964,567.5 967,567.5 967,567.5 970,567.5 970,567.5 971.4,567.5 972,566.5 973,566.5 973,566.5 976,566.5 976,566.5 979,566.5 979,566.5 982,566.5 982,566.5 984.4,566.5 985,565.5 985,565.5 985,565.5 988,565.5 988,565.5 991,565.5 991,565.5 994,565.5 994,565.5 996.4,565.5 997,564.5 997,564.5 997,564.5 1000,564.5 1000,564.5 1003,564.5 1003,564.5 1006,564.5 1006,564.5 1009,564.5 1009,564.5 1009.4,564.5 1010,563.5 1012,563.5 1012,563.5 1015,563.5 1015,563.5 1018,563.5 1018,563.5 1021,563.5 1021,563.5 1022.4,563.5 1023,562.5 1024,562.5 1024,562.5 1027,562.5 1027,562.5 1030,562.5 1030,562.5 1033,562.5 1033,562.5 1036,562.5 1036,562.5 1036.4,562.5 1037,561.5 1039,561.5 1039,561.5 1042,561.5 1042,561.5 1045,561.5 1045,561.5 1048,561.5 1048,561.5 1050.4,561.5 1051,560.5 1051,560.5 1051,560.5 1054,560.5 1054,560.5 1057,560.5 1057,560.5 1060,560.5 1060,560.5 1063,560.5 1063,560.5 1066,560.5 1066,560.5 1066.4,560.5 1067,559.5 1069,559.5 1069,559.5 1072,559.5 1072,559.5 1075,559.5 1075,559.5 1078,559.5 1078,559.5 1081,559.5 1081,559.5 1082.4,559.5 1083,558.5 1084,558.5 1084,558.5 1087,558.5 1087,558.5 1090,558.5 1090,558.5 1093,558.5 1093,558.5 1096,558.5 1096,558.5 1099,558.5 1099,558.5 1100.4,558.5 1101,557.5 1102,557.5 1102,557.5 1105,557.5 1105,557.5 1108,557.5 1108,557.5 1111,557.5 1111,557.5 1114,557.5 1114,557.5 1117,557.5 1117,557.5 1119.4,557.5 1120,556.5 1120,556.5 1120,556.5 1123,556.5 1123,556.5 1126,556.5 1126,556.5 1129,556.5 1129,556.5 1132,556.5 1132,556.5 1135,556.5 1135,556.5 1138,556.5 1138,556.5 1139.4,556.5 1140,555.5 1141,555.5 1141,555.5 1144,555.5 1144,555.5 1147,555.5 1147,555.5 1150,555.5 1150,555.5 1153,555.5 1153,555.5 1156,555.5 1156,555.5 1159,555.5 1159,555.5 1161.4,555.5 1162,554.5 1162,554.5 1162,554.5 1165,554.5 1165,554.5 1168,554.5 1168,554.5 1171,554.5 1171,554.5 1174,554.5 1174,554.5 1177,554.5 1177,554.5 1180,554.5 1180,554.5 1183,554.5 1183,554.5 1184.4,554.5 1185,553.5 1186,553.5 1186,553.5 1189,553.5 1189,553.5 1192,553.5 1192,553.5 1195,553.5 1195,553.5 1198,553.5 1198,553.5 1201,553.5 1201,553.5 1204,553.5 1204,553.5 1207,553.5 1207,553.5 1209.4,553.5 1210,552.5 1210,552.5 1210,552.5 1213,552.5 1213,552.5 1216,552.5 1216,552.5 1219,552.5 1219,552.5 1222,552.5 1222,552.5 1225,552.5 1225,552.5 1228,552.5 1228,552.5 1231,552.5 1231,552.5 1234,552.5 1234,552.5 1236.4,552.5 1237,551.5 1237,551.5 1237,551.5 1240,551.5 1240,551.5 1243,551.5 1243,551.5 1246,551.5 1246,551.5 1249,551.5 1249,551.5 1252,551.5 1252,551.5 1255,551.5 1255,551.5 1258,551.5 1258,551.5 1261,551.5 1261,551.5 1264,551.5 1264,551.5 1265.4,551.5 1266,550.5 1267,550.5 1267,550.5 1270,550.5 1270,550.5 1273,550.5 1273,550.5 1276,550.5 1276,550.5 1279,550.5 1279,550.5 1282,550.5 1282,550.5 1285,550.5 1285,550.5 1288,550.5 1288,550.5 1291,550.5 1291,550.5 1294,550.5 1294,550.5 1294.4,550.5 1295,549.5 1297,549.5 1297,549.5 1300,549.5 1300,549.5 1303,549.5 1303,549.5 1306,549.5 1306,549.5 1309,549.5 1309,549.5 1312,549.5 1312,549.5 1315,549.5 1315,549.5 1318,549.5 1318,549.5 1321,549.5 1321,549.5 1324,549.5 1324,549.5 1327,549.5 1327,549.5 1330,549.5 1330,549.5 1333,549.5 1333,549.5 1336,549.5 1336,549.5 1339,549.5 1339,549.5 1342,549.5 1342,549.5 1345,549.5 1345,549.5 1348,549.5 1348,549.5 1351,549.5 1351,549.5 1354,549.5 1354,549.5 1357,549.5 1357,549.5 1360,549.5 1360,549.5 1363,549.5 1363,549.5 1366,549.5 1366,549.5 1369,549.5 1369,549.5 1372,549.5 1372,549.5 1375,549.5 1375,549.5 1378,549.5 1378,549.5 1381,549.5 1381,549.5 1384,549.5 1384,549.5 1387,549.5 1387,549.5 1390,549.5 1390,549.5 1393,549.5 1393,549.5 1396,549.5 1396,549.5 1399,549.5 1399,549.5 1402,549.5 1402,549.5 1405,549.5 1405,549.5 1408,549.5 1408,549.5 1411,549.5 1411,549.5 1414,549.5 1414,549.5 1417,549.5 1417,549.5 1420,549.5 1420,549.5 1423,549.5 1423,549.5 1426,549.5 1426,549.5 1429,549.5 1429,549.5 1432,549.5 1432,549.5 1435,549.5 1435,549.5 1438,549.5 1438,549.5 1441,549.5 1441,549.5 1444,549.5 1444,549.5 1447,549.5 1447,549.5 1450,549.5 1450,549.5 1453,549.5 1453,549.5 1456,549.5 1456,549.5 1459,549.5 1459,549.5 1462,549.5 1462,549.5 1465,549.5 1465,549.5 1468,549.5 1468,549.5 1471,549.5 1471,549.5 1474,549.5 1474,549.5 1477,549.5 1477,549.5 1479.4,549.5 1480,550.5 1480,550.5 1480,550.5 1483,550.5 1483,550.5 1486,550.5 1486,550.5 1489,550.5 1489,550.5 1492,550.5 1492,550.5 1495,550.5 1495,550.5 1498,550.5 1498,550.5 1501,550.5 1501,550.5 1504,550.5 1504,550.5 1507,550.5 1507,550.5 1510,550.5 1510,550.5 1513,550.5 1513,550.5 1516,550.5 1516,550.5 1519,550.5 1519,550.5 1521.4,550.5 1522,551.5 1522,551.5 1522,551.5 1525,551.5 1525,551.5 1528,551.5 1528,551.5 1531,551.5 1531,551.5 1534,551.5 1534,551.5 1537,551.5 1537,551.5 1540,551.5 1540,551.5 1543,551.5 1543,551.5 1546,551.5 1546,551.5 1549,551.5 1549,551.5 1551.4,551.5 1552,552.5 1552,552.5 1552,552.5 1555,552.5 1555,552.5 1558,552.5 1558,552.5 1561,552.5 1561,552.5 1564,552.5 1564,552.5 1567,552.5 1567,552.5 1570,552.5 1570,552.5 1573,552.5 1573,552.5 1576,552.5 1576,552.5 1577.4,552.5 1578,553.5 1579,553.5 1579,553.5 1582,553.5 1582,553.5 1585,553.5 1585,553.5 1588,553.5 1588,553.5 1591,553.5 1591,553.5 1594,553.5 1594,553.5 1597,553.5 1597,553.5 1600,553.5 1600,553.5 1602.4,553.5 1603,554.5 1603,554.5 1603,554.5 1606,554.5 1606,554.5 1609,554.5 1609,554.5 1612,554.5 1612,554.5 1615,554.5 1615,554.5 1618,554.5 1618,554.5 1621,554.5 1621,554.5 1624,554.5 1624,554.5 1627,554.5 1627,554.5 1627.4,554.5 1628,555.5 1630,555.5 1630,555.5 1633,555.5 1633,555.5 1636,555.5 1636,555.5 1639,555.5 1639,555.5 1642,555.5 1642,555.5 1645,555.5 1645,555.5 1648,555.5 1648,555.5 1651,555.5 1651,555.5 1651.4,555.5 1652,556.5 1654,556.5 1654,556.5 1657,556.5 1657,556.5 1660,556.5 1660,556.5 1663,556.5 1663,556.5 1666,556.5 1666,556.5 1669,556.5 1669,556.5 1672,556.5 1672,556.5 1673.4,556.5 1674,557.5 1675,557.5 1675,557.5 1678,557.5 1678,557.5 1681,557.5 1681,557.5 1684,557.5 1684,557.5 1687,557.5 1687,557.5 1690,557.5 1690,557.5 1692.4,557.5 1693,558.5 1693,558.5 1693,558.5 1696,558.5 1696,558.5 1699,558.5 1699,558.5 1702,558.5 1702,558.5 1705,558.5 1705,558.5 1708,558.5 1708,558.5 1711,558.5 1711,558.5 1711.4,558.5 1712,559.5 1714,559.5 1714,559.5 1717,559.5 1717,559.5 1720,559.5 1720,559.5 1723,559.5 1723,559.5 1726,559.5 1726,559.5 1728.4,559.5 1729,560.5 1729,560.5 1729,560.5 1732,560.5 1732,560.5 1735,560.5 1735,560.5 1738,560.5 1738,560.5 1741,560.5 1741,560.5 1744,560.5 1744,560.5 1745.4,560.5 1746,561.5 1747,561.5 1747,561.5 1750,561.5"/>
<polyline fill="none" stroke="#722c8c" stroke-width="1.25" stroke-linejoin="round" points="3,905.3 3,905.5 41.4,905.5 42,906.5 42,906.5 42,906.5 54.5,906.5 55,892.4 55.5,925.6 56.5,906.4 57,906.5 78.8,906.5 79,906.5 90.4,906.5 91,907.5 110.4,907.5 111,908.5 120,908.5 120,908.5 121.4,908.5 122,907.5 122.5,907.5 123,907.5 123.4,907.5 124,908.5 126.4,908.5 127,909.5 127.5,909.5 128,909.5 143.1,909.5 144.2,896.9 144.6,935.6 145,913 145.5,932 146,914 146.5,930 147,913 147.5,928 148,915 148.7,925 150,911.9 150.6,916 151,915.5 151.4,915.5 152,914.5 152.4,914.5 153,913.5 153,913.5 155.6,910.6 156.25,925.6 157.5,916.3 158,915.5 158.4,915.5 159,914.5 159.4,914.5 160,913.5 160,913.5 160,913.5 164.4,913.5 165,920.6 167.5,926.25 168,925.5 168.4,925.5 169,924.5 170.4,924.5 171,923.5 171.25,923.5 172.5,916.25 173,916.5 173.4,916.5 174,915.5 175,915.5 175,915.5 175.4,915.5 176,916.5 177.5,916.5 178,916.5 179.4,916.5 180,915.5 180,915.5 180,915.5 184.4,915.5 185,914.5 188.75,914.5 189,914.5 194.4,914.5 195,913.5 207.5,913.5 208,913.5 212.4,913.5 213,912.5 226.25,912.5 227,912.5 278.75,912.5 279.4,920 280.6,925 281,924.5 286.4,924.5 287,923.5 288.1,923.5 288.75,903.1 289.4,920 290,920.5 306.25,920.5 306.9,910.6 307,910.5 307.4,910.5 308,911.5 309.4,911.5 310,912.5 310,912.5 310,912.5 311.4,912.5 312,913.5 315,913.5 315,913.5 316.4,913.5 317,914.5 322.5,914.5 323.1,899.4 324,899.5 325.4,899.5 326,900.5 327.5,900.5 329.4,901.9 329.75,914.4 330,905.6 330,905.5 334.4,905.5 335,906.5 337.5,906.5 338,906.5 357.5,906.5 358,905.5 359.4,905.5 360,904.5 360,904.5 360,904.5 360.4,904.5 361,903.5 362.4,903.5 363,902.5 364.4,902.5 365,901.5 366.25,901.5 367.8,906.9 368,906.5 368.4,906.5 369,905.5 369.4,905.5 370,904.5 371.4,904.5 372,903.5 372.5,903.5 373.1,895 385,877.8 385,877.5 385.4,877.5 386,876.5 386.4,876.5 387,875.5 387.4,875.5 388,874.5 388.4,874.5 389,873.5 389.4,873.5 390,872.5 390.4,872.5 391,871.5 391.4,871.5 392,870.5 392.4,870.5 393,868.5 393.4,868.5 394,867.5 394.4,867.5 395,866.5 395.4,866.5 396,865.5 396.4,865.5 397,864.5 397.4,864.5 398,863.5 398.4,863.5 399,862.5 399,862.5 402.2,852.8 403,852.5 403.4,852.5 404,851.5 404.4,851.5 405,850.5 405.4,850.5 406,849.5 406.4,849.5 407,848.5 408.4,848.5 409,847.5 409.4,847.5 410,846.5 410,846.5 410.6,853.75 411,853.5 411.4,853.5 412,852.5 413.4,852.5 414,851.5 414.4,851.5 415,850.5 415.4,850.5 416,849.5 416.25,849.5 416.9,843.4 417,843.5 417.4,843.5 418,842.5 420.4,842.5 421,841.5 422.4,841.5 423,840.5 425.4,840.5 426,839.5 428.4,839.5 429,838.5 430.4,838.5 431,837.5 433.4,837.5 434,836.5 435.4,836.5 436,835.5 438.4,835.5 439,834.5 440.4,834.5 441,833.5 443.4,833.5 444,832.5 444.4,832.5 446,840.3 446,840.5 446.4,840.5 447,839.5 447.4,839.5 448,838.5 449.4,838.5 450,837.5 450.4,837.5 451,836.5 452.4,836.5 453,835.5 453.4,835.5 454,834.5 455.4,834.5 456,833.5 456.4,833.5 457,832.5 457.4,832.5 458,831.5 459.4,831.5 460,830.5 460.4,830.5 461,829.5 462.4,829.5 463,828.5 463.4,828.5 464,827.5 465.4,827.5 466,826.5 466.25,826.5 467,825.5 469.4,825.5 470,824.5 471.4,824.5 472,823.5 473.4,823.5 474,822.5 475.4,822.5 476,821.5 478.4,821.5 479,820.5 480.4,820.5 481,819.5 482.4,819.5 483,818.5 485.4,818.5 486,817.5 487.4,817.5 488,816.5 489.4,816.5 490,815.5 491.25,815.5 492,815.5 492.4,815.5 493,814.5 494.4,814.5 495,813.5 497.4,813.5 498,812.5 500.4,812.5 501,811.5 503.4,811.5 504,810.5 505.4,810.5 506,809.5 508.4,809.5 509,808.5 511.4,808.5 512,807.5 514.4,807.5 515,806.5 516.4,806.5 517,805.5 519.4,805.5 520,804.5 522.4,804.5 523,803.5 525.6,803.5 526,802.5 529.4,802.5 530,801.5 533.4,801.5 534,800.5 537.4,800.5 538,799.5 541.4,799.5 542,798.5 546.4,798.5 547,797.5 550.4,797.5 551,796.5 554.4,796.5 555,795.5 558.4,795.5 559,794.5 563.4,794.5 564,793.5 567.4,793.5 568,792.5 571.4,792.5 572,791.5 575.4,791.5 576,790.5 578.75,790.5 579,790.5 580.4,790.5 581,789.5 586.4,789.5 587,788.5 592.4,788.5 593,787.5 598.4,787.5 599,786.5 604.4,786.5 605,785.5 610,785.5 610,785.5 610.4,785.5 611,784.5 650.6,784.5 651,784.5 687.4,784.5 688,785.5 688,785.5 688,785.5 699.4,785.5 700,786.5 710.4,786.5 711,787.5 719.4,787.5 720,787.5 720.4,787.5 721,788.5 725.4,788.5 726,789.5 730.4,789.5 731,790.5 735.4,790.5 736,791.5 740.4,791.5 741,792.5 745.4,792.5 746,793.5 750.4,793.5 751,794.5 755.3,794.5 756,795.5 758.4,795.5 759,796.5 760.4,796.5 761,797.5 763.4,797.5 764,798.5 766.4,798.5 767,799.5 768.4,799.5 769,800.5 771.4,800.5 772,801.5 774.4,801.5 775,802.5 776.4,802.5 777,803.5 779.4,803.5 780,804.5 782.4,804.5 783,805.5 785.4,805.5 786,806.5 787.4,806.5 788,807.5 790.4,807.5 791,808.5 793.4,808.5 794,809.5 795.4,809.5 796,810.5 797.5,810.5 798,810.5 798.4,810.5 799,811.5 799.4,811.5 800,812.5 801.4,812.5 802,813.5 802.4,813.5 803,814.5 804.4,814.5 805,815.5 805.4,815.5 806,816.5 807.4,816.5 808,817.5 808.4,817.5 809,818.5 810.4,818.5 811,819.5 811.4,819.5 812,820.5 813.4,820.5 814,821.5 814.4,821.5 815,822.5 816.4,822.5 817,823.5 817.4,823.5 818,824.5 819.4,824.5 820,825.5 820.4,825.5 821,826.5 822.4,826.5 823,827.5 823.4,827.5 824,828.5 825.4,828.5 826,829.5 826.4,829.5 827,830.5 828.4,830.5 829,831.5 829.4,831.5 830,832.5 831.4,832.5 832,833.5 832.4,833.5 833,834.5 834.4,834.5 835,835.5 835,835.5 835,835.5 835.4,835.5 836,836.5 836.4,836.5 837,837.5 837.4,837.5 838,838.5 839.4,838.5 840,839.5 840.4,839.5 841,840.5 841.4,840.5 842,841.5 842.4,841.5 843,842.5 844.4,842.5 845,843.5 845.4,843.5 846,844.5 846.4,844.5 847,845.5 847.4,845.5 848,846.5 848.4,846.5 849,847.5 850.4,847.5 851,848.5 851.4,848.5 852,849.5 852.4,849.5 853,850.5 853.4,850.5 854,851.5 855.4,851.5 856,852.5 856.4,852.5 857,853.5 857.4,853.5 858,854.5 858.4,854.5 859,855.5 859.4,855.5 860,856.5 860,856.5 860,856.5 860.4,856.5 861,857.5 861.4,857.5 862,858.5 862.4,858.5 863,859.5 863.4,859.5 864,860.5 864.4,860.5 865,861.5 865.4,861.5 866,862.5 866.4,862.5 867,863.5 867.4,863.5 868,864.5 868.4,864.5 869,865.5 869.4,865.5 870,866.5 870.4,866.5 871,867.5 871.4,867.5 872,868.5 872.4,868.5 873,869.5 873.4,869.5 874,870.5 874.4,870.5 875,871.5 875.4,871.5 876,872.5 876.4,872.5 877,873.5 877.4,873.5 878,874.5 878.4,874.5 879,875.5 879.4,875.5 880,876.5 880.4,876.5 881,878.5 881.4,878.5 882,879.5 882.4,879.5 883,880.5 883.4,880.5 884,881.5 884.4,881.5 885,882.5 885.4,882.5 886,883.5 886.4,883.5 887,884.5 887.4,884.5 888,885.5 888.4,885.5 889,886.5 889.4,886.5 890,887.5 890.4,887.5 891,888.5 891.25,888.5 903.75,904.4 904,904.5 904.4,904.5 905,905.5 905.4,905.5 906,906.5 906.4,906.5 907,907.5 907.4,907.5 908,908.5 908.4,908.5 909,909.5 909.4,909.5 910,910.5 910.4,910.5 911,911.5 911.4,911.5 912,913.5 912.4,913.5 913,914.5 913.4,914.5 914,915.5 914.4,915.5 915,916.5 915.4,916.5 916,917.5 916.4,917.5 917,918.5 917.5,918.5 927.5,933.75 928,934.5 929.4,934.5 930,935.5 930.4,935.5 931,936.5 931.4,936.5 932,937.5 933.4,937.5 934,938.5 934.4,938.5 935,939.5 935.4,939.5 936,940.5 937.4,940.5 938,941.5 938.4,941.5 939,942.5 939.4,942.5 940,943.5 941.4,943.5 942,944.5 942.5,944.5 943,945.5 944.4,945.5 945,946.5 947.4,946.5 948,947.5 949.4,947.5 950,948.5 952.4,948.5 953,949.5 954.4,949.5 955,950.5 955,950.5 955,950.5 959.4,950.5 960,951.5 964.4,951.5 965,952.5 969.4,952.5 970,953.5 974.4,953.5 975,954.5 979.4,954.5 980,955.5 980,955.5 980,955.5 989.4,955.5 990,956.5 999.4,956.5 1000,957.5 1005,957.5 1005,957.5 1021.4,957.5 1022,958.5 1054.4,958.5 1055,959.5 1055,959.5 1055,959.5 1094.4,959.5 1095,960.5 1105,960.5 1105,960.5 1179.4,960.5 1180,961.5 1180,961.5 1180,961.5 1280,961.5 1280,961.5 1280.4,961.5 1281,960.5 1340,960.5 1340,960.5 1370.6,960.5 1371.7,965 1377.2,958.4 1378,958.5 1383.75,958.5 1384.2,965 1385,964.5 1385.4,964.5 1386,963.5 1387.4,963.5 1388,962.5 1389.4,962.5 1390,961.5 1390.4,961.5 1391,960.5 1391.4,960.5 1392,953.6 1392,953.5 1392.4,953.5 1393,954.5 1393.4,954.5 1394,955.5 1394.7,955.5 1395,956.5 1403.4,956.5 1404,957.5 1433.4,957.5 1434,958.5 1445,958.5 1446.1,969 1447,968.5 1448.4,968.5 1449,967.5 1449.4,967.5 1450,966.5 1451.4,966.5 1452,965.5 1453.75,965.5 1454,965.5 1511.4,965.5 1512,966.5 1540.2,966.5 1541.3,957.3 1542,957.5 1542.4,957.5 1543,958.5 1544.4,958.5 1545,959.5 1546.4,959.5 1547,960.5 1548.4,960.5 1549,961.5 1549.4,961.5 1550,962.5 1551.4,962.5 1552,963.5 1552.2,963.5 1553,963.5 1751.3,963.5"/>
<path d="M1712 65 H1742 Q1744 65 1744 67 V97 Q1744 99 1742 97 L1710.5 66.5 Q1710 65 1712 65z" fill="#4b4b4b"/>
<circle cx="1737.3" cy="71.3" r="3.9" fill="none" stroke="#8e8e8e" stroke-width="1.6"/>
<line x1="1734.5" y1="74.3" x2="1728.5" y2="80.5" stroke="#8e8e8e" stroke-width="2.2" stroke-linecap="round"/>
<path d="M45 58 H65 L55 67.5z" fill="#f39325"/>
<path d="M46 69 H64 V88 H59 L55 94 L51 88 H46z" fill="#000" stroke="#f39325" stroke-width="2"/>
<text x="55.3" y="84.5" fill="#f39325" font-size="15" font-weight="700" text-anchor="middle">T</text>
<path d="M9.5 161.8 H78 L83.3 174.8 L78 187.8 H9.5 Q6.5 187.8 6.5 184.8 V164.8 Q6.5 161.8 9.5 161.8z" fill="#1c1a08" stroke="#f6ec38" stroke-width="1.8"/>
<line x1="32.8" y1="161.8" x2="32.8" y2="187.8" stroke="#f6ec38" stroke-width="1.8"/>
<text x="11" y="178.8" fill="#f6ec38" font-size="12.5">C</text>
<text x="21.3" y="178.8" fill="#f6ec38" font-size="12.5">1</text>
<text x="45" y="178.8" fill="#f6ec38" font-size="12.5">20 V</text>
<path d="M9.5 395.8 H78 L83.3 408.8 L78 421.8 H9.5 Q6.5 421.8 6.5 418.8 V398.8 Q6.5 395.8 9.5 395.8z" fill="#121a08" stroke="#8ecb34" stroke-width="1.8"/>
<line x1="32.8" y1="395.8" x2="32.8" y2="421.8" stroke="#8ecb34" stroke-width="1.8"/>
<text x="11" y="412.8" fill="#8ecb34" font-size="12.5">C</text>
<text x="21.3" y="412.8" fill="#8ecb34" font-size="12.5">4</text>
<text x="35.5" y="412.8" fill="#8ecb34" font-size="12.2">200 mV</text>
<text x="102" y="178.8" fill="#f6ec38" font-size="19.5">U_loop,coil</text>
<text x="102" y="413.2" fill="#8ecb34" font-size="19.5">U_Photod</text>
<line x1="3" y1="735" x2="55" y2="735" stroke="#f39325" stroke-width="1.3"/>
<path d="M8.5 722.5 H30.5 L42 735 L30.5 747.5 H8.5 Q6.5 747.5 6.5 745.5 V724.5 Q6.5 722.5 8.5 722.5z" fill="#1e1408" stroke="#f39325" stroke-width="1.6"/>
<text x="23" y="739.3" fill="#f39325" font-size="12" text-anchor="middle">M 1</text>
<text x="54" y="741.6" fill="#f39325" font-size="25">B_t</text>
<line x1="3" y1="905" x2="55" y2="905.5" stroke="#722c8c" stroke-width="1.3"/>
<path d="M8.5 891.2 H30.5 L42.5 904 L30.5 916.8 H8.5 Q6.5 916.8 6.5 914.8 V893.2 Q6.5 891.2 8.5 891.2z" fill="#722c8c"/>
<text x="23.5" y="908.7" fill="#f4f4f4" font-size="13" text-anchor="middle">M 2</text>
<clipPath id="ipc"><rect x="40" y="880" width="60" height="32.5"/></clipPath>
<text x="54" y="909" fill="#722c8c" font-size="19" clip-path="url(#ipc)">I_p</text>
<circle cx="1761.7" cy="503.3" r="1.5" fill="#a0a0a0"/>
<circle cx="1761.7" cy="512" r="1.5" fill="#a0a0a0"/>
<circle cx="1761.7" cy="520.7" r="1.5" fill="#a0a0a0"/>
<rect x="586" y="44" width="581" height="2" fill="#b4b4b4"/>
<path d="M593 36.5 H586.8 V52.6 H593" fill="none" stroke="#e8e8e8" stroke-width="1.5"/>
<path d="M1161 36.5 H1167.2 V52.6 H1161" fill="none" stroke="#e8e8e8" stroke-width="1.5"/>
<path d="M596 33 H611 L603.5 38.5z" fill="#f39325"/>
<path d="M597 40.5 H610 V52 H606.5 L603.5 56 L600.5 52 H597z" fill="#000" stroke="#f39325" stroke-width="1.6"/>
<text x="603.5" y="50.5" fill="#f39325" font-size="11" font-weight="700" text-anchor="middle">T</text>
</svg>

<!-- sidebar -->
<div class="a" style="left:1769px;top:29px;width:151px;height:967px;border-left:1px solid #5a5a5a;border-top:1px solid #5a524a;border-bottom:1px solid #5f574f"></div>
<svg style="position:absolute;left:1780px;top:0px" width="130" height="30" viewBox="0 0 130 30">
<g fill="#ffffff">
<path d="M5.8 4 H23.7 L20.3 9 H5.8z"/>
<rect x="10.2" y="4" width="6.2" height="22"/>
<circle cx="26" cy="17.8" r="6.1" fill="none" stroke="#fff" stroke-width="4.1"/>
<rect x="20" y="15.8" width="12" height="4.2"/>
<rect x="28" y="20" width="7" height="1.9" fill="#2e2e2e"/>
<rect x="35" y="4" width="5" height="21.8"/>
<path d="M44.8 17.8 L47 15.4 L50.1 25.8 L43.5 25.8z"/>
<path d="M35 25.8 H40 L51.1 9 H45.7z" fill="#1fc2e4" stroke="#2e2e2e" stroke-width="0.9" paint-order="stroke"/>
<path d="M51.3 9 L56.1 4.5 V25.8 H51.3z"/>
<rect x="51.3" y="9.8" width="7.5" height="4.9"/>
<rect x="60.3" y="9.5" width="4.8" height="16.5"/>
<path d="M60.3 14.5 Q61 9.5 69 9.5 V14.5 H65 Q65 14.5 65 16z"/>
<ellipse cx="78" cy="17.75" rx="5.2" ry="5.75" fill="none" stroke="#fff" stroke-width="4.9"/>
<path d="M87.3 26 V9.5 H92 V11.5 Q94 9.3 96 9.3 Q100.2 9.3 100.2 14 V26 H95.3 V15 Q95.3 14 93.8 14 Q92.2 14 92.2 15.5 V26z"/>
<circle cx="104.3" cy="6.6" r="2.6"/>
<rect x="101.8" y="10.2" width="5" height="15.8"/>
<path d="M108 9.5 H113.5 L115.3 12.5 L117.2 9.5 H122.7 L118.2 17.6 L123 26 H117.4 L115.3 22.6 L113.2 26 H107.6 L112.4 17.6z"/>
</g></svg>
<div class="a" style="left:1770px;top:30px;width:151px;text-align:center;font-size:15px;font-weight:700;color:#e6e6e6;letter-spacing:1px">Add New...</div>
<div class="btn" style="left:1778px;top:54px">Cursors</div>
<div class="btn" style="left:1850px;top:54px">Callout</div>
<div class="btn" style="left:1778px;top:100px">Measure</div>
<div class="btn" style="left:1850px;top:100px">Search</div>
<div class="btn" style="left:1778px;top:146px">Results<br>Table</div>
<div class="btn" style="left:1850px;top:146px">Plot</div>
<div class="a" style="left:1773px;top:189px;width:144px;height:1px;background:#5e554c"></div>
<div class="btn" style="left:1778px;top:196px"><svg width="40" height="30" viewBox="0 0 40 30" style="position:absolute;left:12px;top:3px"><rect x="8.3" y="3.6" width="21" height="19" fill="none" stroke="#a8a8a8" stroke-width="2" stroke-dasharray="3 2.2"/><circle cx="21" cy="12" r="4.6" fill="none" stroke="#a8a8a8" stroke-width="1.8"/><line x1="17.6" y1="15.4" x2="13" y2="19.8" stroke="#a8a8a8" stroke-width="2.4" stroke-linecap="round"/><path d="M26 17.5 L34 23 L30.5 23.8 L32.5 27.5 L30.8 28.3 L28.8 24.6 L26.3 26.8z" fill="#a8a8a8"/></svg></div>
<div class="btn" style="left:1850px;top:196px">More...</div>
<div class="a" style="left:1773px;top:241px;width:144px;height:1px;background:#5e554c"></div>

<!-- bottom bar -->
<div class="badge" style="left:3px"><div class="h" style="background:#4e4a22;color:#f2ea3c">Ch 1</div><div class="l" style="top:21px">5 V/div</div><div class="l" style="top:40px">1 MΩ</div><div class="l" style="top:59px">200 kHz</div><div class="bw">B<span>w</span></div></div>
<div class="badge" style="left:98px;background:#8a8a8a"><div class="h" style="background:#268084;color:#141414">Ch 2</div><div class="l" style="top:21px">250 mV/div</div><div class="l" style="top:40px">1 MΩ</div><div class="l" style="top:59px">200 kHz</div><div class="bw">B<span>w</span></div></div>
<div class="badge" style="left:193px;background:#8a8a8a"><div class="h" style="background:#8e3642;color:#c4c4c4">Ch 3</div><div class="l" style="top:21px">450 mV/div</div><div class="l" style="top:40px">1 MΩ</div><div class="l" style="top:59px">200 kHz</div><div class="bw">B<span>w</span></div></div>
<div class="badge" style="left:288px"><div class="h" style="background:#35441f;color:#8ed23a">Ch 4</div><div class="l" style="top:21px">200 mV/div</div><div class="l" style="top:40px">1 MΩ</div><div class="l" style="top:59px">200 kHz</div><div class="bw">B<span>w</span></div></div>
<div class="badge" style="left:383px"><div class="h" style="background:#4a321c;color:#f39628">Math 1</div><div class="l" style="top:21px">66.0 mT/div</div><div class="l" style="top:40px">Intg(Ch2)...</div></div>
<div class="badge" style="left:478px"><div class="h" style="background:#6e2b8c;color:#f4f4f4">Math 2</div><div class="l" style="top:21px">156.23 A/div</div><div class="l" style="top:40px">-Intg(Ch3...</div></div>

<div class="vbtn" style="left:1023px"><div class="bar" style="background:#f39325"></div><div style="position:absolute;left:0;right:0;top:32px;font-size:21px">5</div></div>
<div class="vbtn" style="left:1068px"><div class="bar" style="background:#2a2ad2"></div><div style="position:absolute;left:0;right:0;top:32px;font-size:21px">6</div></div>
<div class="a" style="left:1118px;top:1000px;width:1px;height:78px;background:#5e554c"></div>
<div class="vbtn" style="left:1129px"><div class="bar" style="background:#b82222"></div><div style="position:absolute;left:-5px;right:-5px;top:19px;font-size:15px;line-height:15.7px">Add<br>New<br>Math</div></div>
<div class="vbtn" style="left:1174px"><div class="bar" style="background:#c8cad8"></div><div style="position:absolute;left:-5px;right:-5px;top:19px;font-size:15px;line-height:15.7px">Add<br>New<br>Ref</div></div>
<div class="vbtn" style="left:1219px"><div class="bar" style="background:#b452e6"></div><div style="position:absolute;left:-5px;right:-5px;top:19px;font-size:15px;line-height:15.7px">Add<br>New<br>Bus</div></div>
<div class="a" style="left:1269px;top:1000px;width:1px;height:78px;background:#5e554c"></div>

<div class="box" style="left:1280px;width:200px"><div class="h">Horizontal</div>
<div class="l" style="left:4px;top:19px">4 ms/div</div><div class="l" style="left:110px;top:19px">40 ms</div>
<div class="l" style="left:4px;top:38px">SR: 1 MS/s</div><div class="l" style="left:110px;top:38px">1 µs/pt</div>
<div class="l" style="left:4px;top:56.5px">RL: 40 kpts</div><svg class="a" style="left:109px;top:59px" width="12" height="14"><path d="M1 1 H9 V9 H6.5 L5 11.5 L3.5 9 H1z" fill="#111" stroke="#f39325" stroke-width="1.5"/><text x="5" y="8" fill="#fff" font-size="7" font-weight="700" text-anchor="middle" font-family="Liberation Sans">T</text></svg><div class="l" style="left:123px;top:56.5px">3%</div></div>
<div class="box" style="left:1485px;width:160px"><div class="h">Trigger</div>
<div class="a" style="left:3px;top:20px;width:30px;height:16px;border-radius:5px;background:#2222c4;border:1px solid #101040;color:#fff;text-align:center;font-size:14px;line-height:14px">6</div>
<svg class="a" style="left:40px;top:19px" width="20" height="16"><path d="M3 13.5 H7 L14 5.5 H18" fill="none" stroke="#3a3a9a" stroke-width="1.3"/></svg><div class="l" style="left:70px;top:19px">3 V</div></div>
<div class="box" style="left:1650px;width:150px"><div class="h">Acquisition</div>
<div class="l" style="left:4px;top:19px">Manual,</div><div class="l" style="left:85px;top:19px">Analyze</div>
<div class="l" style="left:4px;top:38px;font-size:14.2px">High Res: 16 bits</div>
<div class="l" style="left:4px;top:56.5px">Single: 0 /1</div></div>
<div class="a" style="left:1811px;top:1000px;width:1px;height:78px;background:#5e554c"></div>
<div class="a" style="left:1822px;top:999px;width:89px;height:35px;border-radius:6px;background:#fe1f25;border:1px solid #6a6a6a;color:#fff;font-weight:700;font-size:14px;text-align:center;line-height:33px">Preview</div>
<div class="a" style="left:1822px;top:1040px;width:89px;height:38px;border-radius:5px;background:#c8c8c8;color:#111;font-size:14.5px;text-align:center;line-height:17px;padding-top:1px">15 May 2025<br>1:23:17 PM</div>
</body></html>
